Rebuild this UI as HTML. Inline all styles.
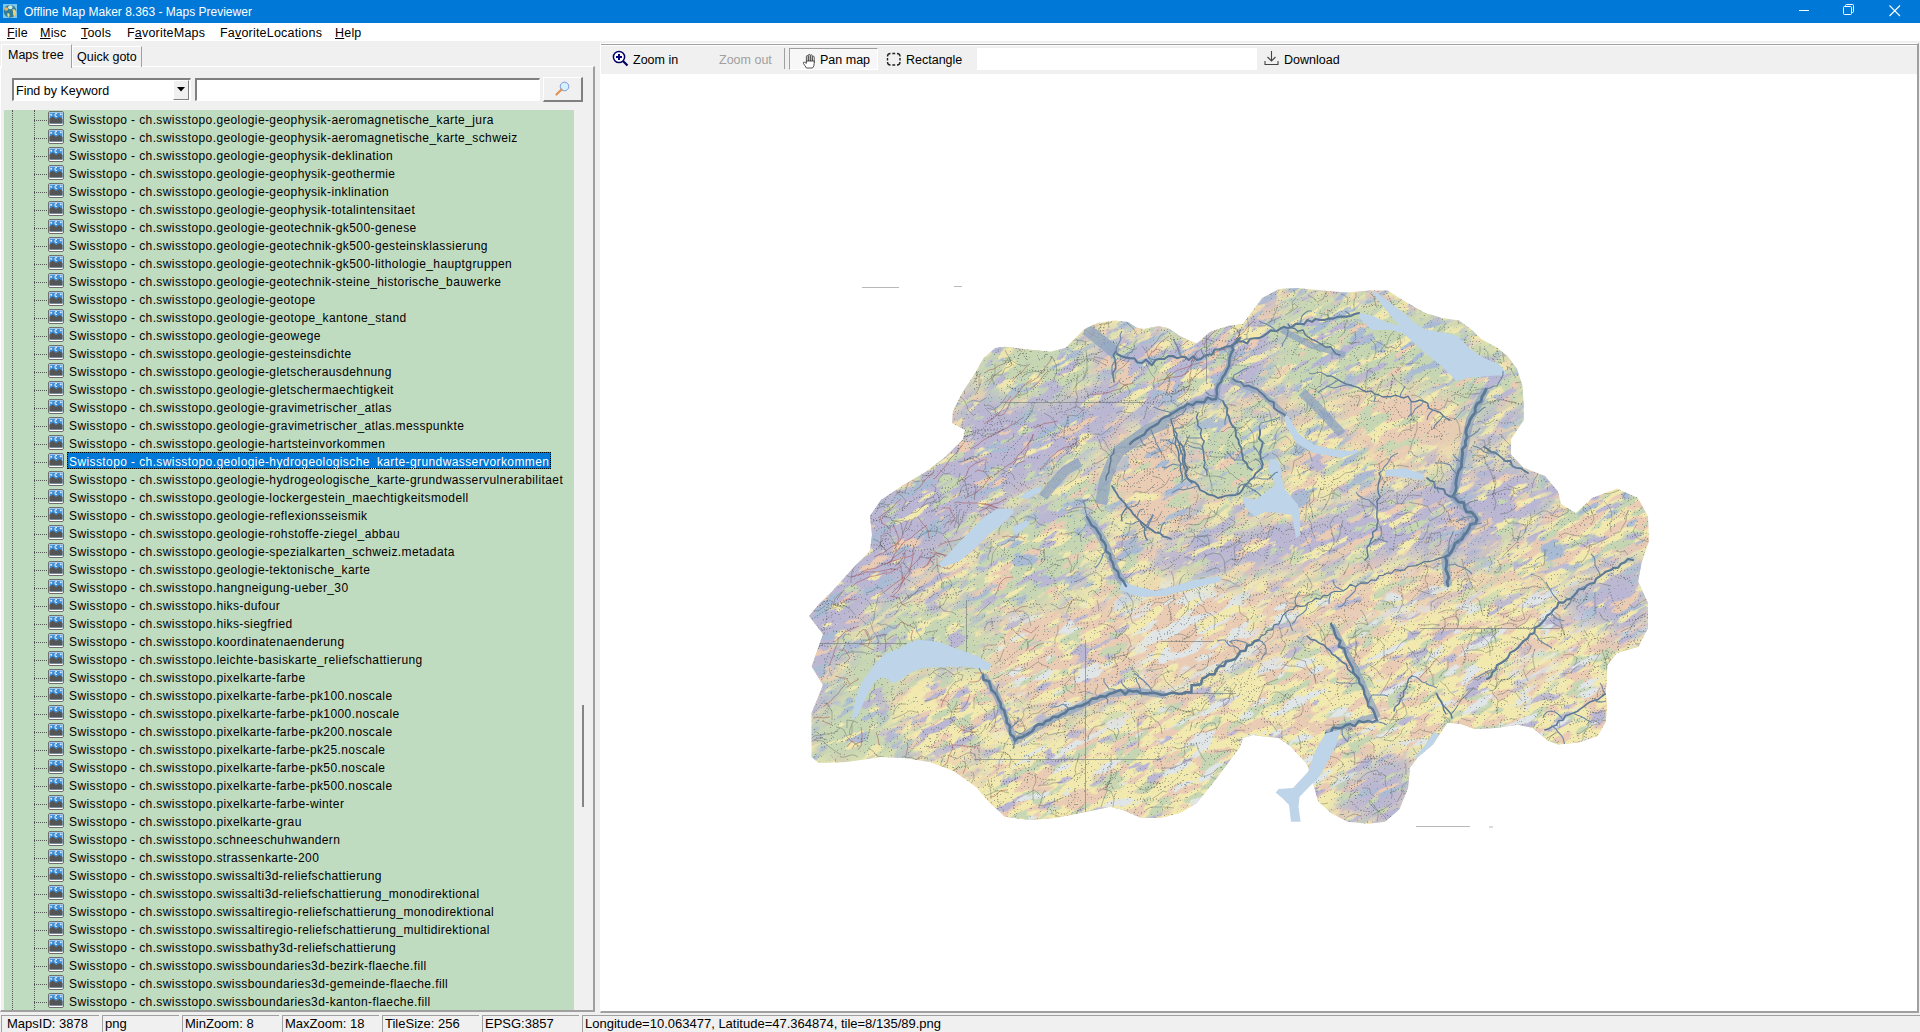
<!DOCTYPE html>
<html><head><meta charset="utf-8">
<style>
*{margin:0;padding:0;box-sizing:border-box}
html,body{width:1920px;height:1032px;overflow:hidden;background:#f0f0f0;font-family:"Liberation Sans",sans-serif;font-size:12px;color:#000}
.abs{position:absolute}
#title{position:absolute;left:0;top:0;width:1920px;height:23px;background:#0078d7;color:#fff}
#title .t{position:absolute;left:24px;top:5px;font-size:12px;line-height:14px;letter-spacing:0px}
#menu{position:absolute;left:0;top:23px;width:1920px;height:18px;background:#fff}
#menu span{position:absolute;top:3px;font-size:12.5px;line-height:15px;letter-spacing:0.2px}
#menu u{text-decoration:underline;text-underline-offset:1px}
.tab{position:absolute;font-size:12.5px;line-height:15px}
.row{position:absolute;left:4px;width:570px;height:18px}
.row .hd{position:absolute;left:30px;top:10px;width:13px;height:0;border-top:1px dotted #555}
.row .ic{position:absolute;left:44px;top:1px}
.row .tx{position:absolute;left:63px;top:0px;height:17px;padding:0 2px;font-size:12px;line-height:20px;letter-spacing:0.4px;white-space:nowrap}
.row .tx.sel{background:#0078d7;color:#fff;outline:1px dotted #000;outline-offset:-1px}
.vl{position:absolute;width:0;border-left:1px dotted #555}
.sb{position:absolute;top:1015px;height:17px;border-top:1px solid #a0a0a0;border-left:1px solid #a0a0a0;font-size:13px;line-height:14px;padding-left:2px;padding-top:1px;white-space:nowrap}
.tb{position:absolute;font-size:12.5px;line-height:15px;white-space:nowrap}
</style></head><body>
<div id="title">
 <svg class="abs" style="left:3px;top:4px" width="14" height="14" viewBox="0 0 14 14"><rect width="14" height="14" fill="#7ec8ee"/><circle cx="7" cy="7.2" r="6.3" fill="#2f7f9c"/><ellipse cx="7.3" cy="3.2" rx="2.2" ry="2" fill="#d8ecd8"/><ellipse cx="3.2" cy="5" rx="2" ry="1.8" fill="#f0b060"/><path d="M9.5 5 Q13 5 13 8 Q13 12 11 12.5 Q9.5 10 10 8 Z" fill="#f0d070"/><path d="M4.5 9 Q7 9 6.5 12 L5 13.5 Q4 11 4.5 9Z" fill="#e8e090"/></svg>
 <span class="t">Offline Map Maker 8.363 - Maps Previewer</span>
 <div class="abs" style="left:1799px;top:10px;width:10px;height:1px;background:#fff"></div>
 <svg class="abs" style="left:1843px;top:4px" width="12" height="12" viewBox="0 0 12 12"><rect x="0.5" y="2.5" width="8" height="8" rx="1" fill="none" stroke="#fff"/><path d="M2.5 2.5 V1.5 Q2.5 0.5 3.5 0.5 H9.5 Q10.5 0.5 10.5 1.5 V7.5 Q10.5 8.5 9.5 8.5 H8.5" fill="none" stroke="#fff"/></svg>
 <svg class="abs" style="left:1889px;top:5px" width="12" height="12" viewBox="0 0 12 12"><path d="M0.5 0.5 L11 11 M11 0.5 L0.5 11" stroke="#fff" stroke-width="1.1"/></svg>
</div>
<div id="menu">
 <span style="left:7px"><u>F</u>ile</span>
 <span style="left:40px"><u>M</u>isc</span>
 <span style="left:81px"><u>T</u>ools</span>
 <span style="left:127px">F<u>a</u>voriteMaps</span>
 <span style="left:220px">Fa<u>v</u>oriteLocations</span>
 <span style="left:335px"><u>H</u>elp</span>
</div>
<!-- left tab control -->
<div class="abs" style="left:0px;top:66px;width:595px;height:946px;border-top:1px solid #fff;border-left:1px solid #fff;border-right:2px solid #a0a0a0;border-bottom:2px solid #a0a0a0"></div>
<div class="abs" style="left:1px;top:44px;width:71px;height:24px;background:#f0f0f0;border-top:1px solid #fff;border-left:1px solid #fff;border-right:1px solid #a0a0a0"></div>
<div class="tab" style="left:8px;top:48px">Maps tree</div>
<div class="abs" style="left:72px;top:46px;width:70px;height:21px;border-top:1px solid #fff;border-right:1px solid #a0a0a0;border-left:1px solid #fff"></div>
<div class="tab" style="left:77px;top:50px">Quick goto</div>
<!-- combo -->
<div class="abs" style="left:12px;top:78px;width:179px;height:23px;background:#fff;border-top:2px solid #808080;border-left:2px solid #808080;border-bottom:1px solid #fff;border-right:1px solid #fff"></div>
<div class="abs" style="left:16px;top:84px;font-size:12.5px;line-height:15px">Find by Keyword</div>
<div class="abs" style="left:173px;top:80px;width:16px;height:20px;background:#f0f0f0;border-top:1px solid #fff;border-left:1px solid #fff;border-right:1px solid #808080;border-bottom:1px solid #808080"></div>
<svg class="abs" style="left:177px;top:87px" width="8" height="5"><path d="M0 0 H8 L4 4.5Z" fill="#000"/></svg>
<div class="abs" style="left:195px;top:78px;width:345px;height:23px;background:#fff;border-top:2px solid #808080;border-left:2px solid #808080;border-bottom:1px solid #fff;border-right:1px solid #fff"></div>
<div class="abs" style="left:543px;top:77px;width:40px;height:25px;background:#f0f0f0;border-top:1px solid #fff;border-left:1px solid #fff;border-right:2px solid #808080;border-bottom:2px solid #808080"></div>
<svg class="abs" style="left:554px;top:81px" width="18" height="16" viewBox="0 0 18 16"><circle cx="10.5" cy="5.5" r="4.3" fill="#d6f0ff" stroke="#7a9ad6" stroke-width="1"/><path d="M7.5 8.5 L2.5 13.5" stroke="#e09050" stroke-width="2.2" stroke-linecap="round"/></svg>
<!-- tree -->
<div class="abs" style="left:4px;top:110px;width:570px;height:900px;background:#c0dcc0;overflow:hidden">
</div>
<div class="abs" style="left:4px;top:110px;width:570px;height:900px;overflow:hidden">
<div class="vl" style="left:8px;top:0;height:900px"></div>
<div class="vl" style="left:30px;top:0;height:900px"></div>
</div>
<div class="abs" style="left:0;top:0;width:574px;height:1010px;overflow:hidden">
<div class="row" style="top:110px"><div class="hd"></div><svg class="ic" width="16" height="15" viewBox="0 0 16 15"><rect x="0.5" y="0.5" width="15" height="14" rx="1.5" fill="#fff" stroke="#6e6e6e"/><rect x="1.5" y="1.5" width="13" height="11" fill="#3f8fd8"/><path d="M1.5 12.5 V7.5 L5 5.5 L8 8 L11.5 6 L14.5 8 V12.5 Z" fill="#555"/><path d="M2.2 3.8 H4.2 M3.2 2.8 V4.8 M11.8 3.3 H13.8 M12.8 2.3 V4.3" stroke="#fff" stroke-width="0.8"/><path d="M9 2.6 A1.5 1.5 0 1 0 9 5.4" fill="none" stroke="#fff" stroke-width="0.9"/></svg><span class="tx">Swisstopo - ch.swisstopo.geologie-geophysik-aeromagnetische_karte_jura</span></div>
<div class="row" style="top:128px"><div class="hd"></div><svg class="ic" width="16" height="15" viewBox="0 0 16 15"><rect x="0.5" y="0.5" width="15" height="14" rx="1.5" fill="#fff" stroke="#6e6e6e"/><rect x="1.5" y="1.5" width="13" height="11" fill="#3f8fd8"/><path d="M1.5 12.5 V7.5 L5 5.5 L8 8 L11.5 6 L14.5 8 V12.5 Z" fill="#555"/><path d="M2.2 3.8 H4.2 M3.2 2.8 V4.8 M11.8 3.3 H13.8 M12.8 2.3 V4.3" stroke="#fff" stroke-width="0.8"/><path d="M9 2.6 A1.5 1.5 0 1 0 9 5.4" fill="none" stroke="#fff" stroke-width="0.9"/></svg><span class="tx">Swisstopo - ch.swisstopo.geologie-geophysik-aeromagnetische_karte_schweiz</span></div>
<div class="row" style="top:146px"><div class="hd"></div><svg class="ic" width="16" height="15" viewBox="0 0 16 15"><rect x="0.5" y="0.5" width="15" height="14" rx="1.5" fill="#fff" stroke="#6e6e6e"/><rect x="1.5" y="1.5" width="13" height="11" fill="#3f8fd8"/><path d="M1.5 12.5 V7.5 L5 5.5 L8 8 L11.5 6 L14.5 8 V12.5 Z" fill="#555"/><path d="M2.2 3.8 H4.2 M3.2 2.8 V4.8 M11.8 3.3 H13.8 M12.8 2.3 V4.3" stroke="#fff" stroke-width="0.8"/><path d="M9 2.6 A1.5 1.5 0 1 0 9 5.4" fill="none" stroke="#fff" stroke-width="0.9"/></svg><span class="tx">Swisstopo - ch.swisstopo.geologie-geophysik-deklination</span></div>
<div class="row" style="top:164px"><div class="hd"></div><svg class="ic" width="16" height="15" viewBox="0 0 16 15"><rect x="0.5" y="0.5" width="15" height="14" rx="1.5" fill="#fff" stroke="#6e6e6e"/><rect x="1.5" y="1.5" width="13" height="11" fill="#3f8fd8"/><path d="M1.5 12.5 V7.5 L5 5.5 L8 8 L11.5 6 L14.5 8 V12.5 Z" fill="#555"/><path d="M2.2 3.8 H4.2 M3.2 2.8 V4.8 M11.8 3.3 H13.8 M12.8 2.3 V4.3" stroke="#fff" stroke-width="0.8"/><path d="M9 2.6 A1.5 1.5 0 1 0 9 5.4" fill="none" stroke="#fff" stroke-width="0.9"/></svg><span class="tx">Swisstopo - ch.swisstopo.geologie-geophysik-geothermie</span></div>
<div class="row" style="top:182px"><div class="hd"></div><svg class="ic" width="16" height="15" viewBox="0 0 16 15"><rect x="0.5" y="0.5" width="15" height="14" rx="1.5" fill="#fff" stroke="#6e6e6e"/><rect x="1.5" y="1.5" width="13" height="11" fill="#3f8fd8"/><path d="M1.5 12.5 V7.5 L5 5.5 L8 8 L11.5 6 L14.5 8 V12.5 Z" fill="#555"/><path d="M2.2 3.8 H4.2 M3.2 2.8 V4.8 M11.8 3.3 H13.8 M12.8 2.3 V4.3" stroke="#fff" stroke-width="0.8"/><path d="M9 2.6 A1.5 1.5 0 1 0 9 5.4" fill="none" stroke="#fff" stroke-width="0.9"/></svg><span class="tx">Swisstopo - ch.swisstopo.geologie-geophysik-inklination</span></div>
<div class="row" style="top:200px"><div class="hd"></div><svg class="ic" width="16" height="15" viewBox="0 0 16 15"><rect x="0.5" y="0.5" width="15" height="14" rx="1.5" fill="#fff" stroke="#6e6e6e"/><rect x="1.5" y="1.5" width="13" height="11" fill="#3f8fd8"/><path d="M1.5 12.5 V7.5 L5 5.5 L8 8 L11.5 6 L14.5 8 V12.5 Z" fill="#555"/><path d="M2.2 3.8 H4.2 M3.2 2.8 V4.8 M11.8 3.3 H13.8 M12.8 2.3 V4.3" stroke="#fff" stroke-width="0.8"/><path d="M9 2.6 A1.5 1.5 0 1 0 9 5.4" fill="none" stroke="#fff" stroke-width="0.9"/></svg><span class="tx">Swisstopo - ch.swisstopo.geologie-geophysik-totalintensitaet</span></div>
<div class="row" style="top:218px"><div class="hd"></div><svg class="ic" width="16" height="15" viewBox="0 0 16 15"><rect x="0.5" y="0.5" width="15" height="14" rx="1.5" fill="#fff" stroke="#6e6e6e"/><rect x="1.5" y="1.5" width="13" height="11" fill="#3f8fd8"/><path d="M1.5 12.5 V7.5 L5 5.5 L8 8 L11.5 6 L14.5 8 V12.5 Z" fill="#555"/><path d="M2.2 3.8 H4.2 M3.2 2.8 V4.8 M11.8 3.3 H13.8 M12.8 2.3 V4.3" stroke="#fff" stroke-width="0.8"/><path d="M9 2.6 A1.5 1.5 0 1 0 9 5.4" fill="none" stroke="#fff" stroke-width="0.9"/></svg><span class="tx">Swisstopo - ch.swisstopo.geologie-geotechnik-gk500-genese</span></div>
<div class="row" style="top:236px"><div class="hd"></div><svg class="ic" width="16" height="15" viewBox="0 0 16 15"><rect x="0.5" y="0.5" width="15" height="14" rx="1.5" fill="#fff" stroke="#6e6e6e"/><rect x="1.5" y="1.5" width="13" height="11" fill="#3f8fd8"/><path d="M1.5 12.5 V7.5 L5 5.5 L8 8 L11.5 6 L14.5 8 V12.5 Z" fill="#555"/><path d="M2.2 3.8 H4.2 M3.2 2.8 V4.8 M11.8 3.3 H13.8 M12.8 2.3 V4.3" stroke="#fff" stroke-width="0.8"/><path d="M9 2.6 A1.5 1.5 0 1 0 9 5.4" fill="none" stroke="#fff" stroke-width="0.9"/></svg><span class="tx">Swisstopo - ch.swisstopo.geologie-geotechnik-gk500-gesteinsklassierung</span></div>
<div class="row" style="top:254px"><div class="hd"></div><svg class="ic" width="16" height="15" viewBox="0 0 16 15"><rect x="0.5" y="0.5" width="15" height="14" rx="1.5" fill="#fff" stroke="#6e6e6e"/><rect x="1.5" y="1.5" width="13" height="11" fill="#3f8fd8"/><path d="M1.5 12.5 V7.5 L5 5.5 L8 8 L11.5 6 L14.5 8 V12.5 Z" fill="#555"/><path d="M2.2 3.8 H4.2 M3.2 2.8 V4.8 M11.8 3.3 H13.8 M12.8 2.3 V4.3" stroke="#fff" stroke-width="0.8"/><path d="M9 2.6 A1.5 1.5 0 1 0 9 5.4" fill="none" stroke="#fff" stroke-width="0.9"/></svg><span class="tx">Swisstopo - ch.swisstopo.geologie-geotechnik-gk500-lithologie_hauptgruppen</span></div>
<div class="row" style="top:272px"><div class="hd"></div><svg class="ic" width="16" height="15" viewBox="0 0 16 15"><rect x="0.5" y="0.5" width="15" height="14" rx="1.5" fill="#fff" stroke="#6e6e6e"/><rect x="1.5" y="1.5" width="13" height="11" fill="#3f8fd8"/><path d="M1.5 12.5 V7.5 L5 5.5 L8 8 L11.5 6 L14.5 8 V12.5 Z" fill="#555"/><path d="M2.2 3.8 H4.2 M3.2 2.8 V4.8 M11.8 3.3 H13.8 M12.8 2.3 V4.3" stroke="#fff" stroke-width="0.8"/><path d="M9 2.6 A1.5 1.5 0 1 0 9 5.4" fill="none" stroke="#fff" stroke-width="0.9"/></svg><span class="tx">Swisstopo - ch.swisstopo.geologie-geotechnik-steine_historische_bauwerke</span></div>
<div class="row" style="top:290px"><div class="hd"></div><svg class="ic" width="16" height="15" viewBox="0 0 16 15"><rect x="0.5" y="0.5" width="15" height="14" rx="1.5" fill="#fff" stroke="#6e6e6e"/><rect x="1.5" y="1.5" width="13" height="11" fill="#3f8fd8"/><path d="M1.5 12.5 V7.5 L5 5.5 L8 8 L11.5 6 L14.5 8 V12.5 Z" fill="#555"/><path d="M2.2 3.8 H4.2 M3.2 2.8 V4.8 M11.8 3.3 H13.8 M12.8 2.3 V4.3" stroke="#fff" stroke-width="0.8"/><path d="M9 2.6 A1.5 1.5 0 1 0 9 5.4" fill="none" stroke="#fff" stroke-width="0.9"/></svg><span class="tx">Swisstopo - ch.swisstopo.geologie-geotope</span></div>
<div class="row" style="top:308px"><div class="hd"></div><svg class="ic" width="16" height="15" viewBox="0 0 16 15"><rect x="0.5" y="0.5" width="15" height="14" rx="1.5" fill="#fff" stroke="#6e6e6e"/><rect x="1.5" y="1.5" width="13" height="11" fill="#3f8fd8"/><path d="M1.5 12.5 V7.5 L5 5.5 L8 8 L11.5 6 L14.5 8 V12.5 Z" fill="#555"/><path d="M2.2 3.8 H4.2 M3.2 2.8 V4.8 M11.8 3.3 H13.8 M12.8 2.3 V4.3" stroke="#fff" stroke-width="0.8"/><path d="M9 2.6 A1.5 1.5 0 1 0 9 5.4" fill="none" stroke="#fff" stroke-width="0.9"/></svg><span class="tx">Swisstopo - ch.swisstopo.geologie-geotope_kantone_stand</span></div>
<div class="row" style="top:326px"><div class="hd"></div><svg class="ic" width="16" height="15" viewBox="0 0 16 15"><rect x="0.5" y="0.5" width="15" height="14" rx="1.5" fill="#fff" stroke="#6e6e6e"/><rect x="1.5" y="1.5" width="13" height="11" fill="#3f8fd8"/><path d="M1.5 12.5 V7.5 L5 5.5 L8 8 L11.5 6 L14.5 8 V12.5 Z" fill="#555"/><path d="M2.2 3.8 H4.2 M3.2 2.8 V4.8 M11.8 3.3 H13.8 M12.8 2.3 V4.3" stroke="#fff" stroke-width="0.8"/><path d="M9 2.6 A1.5 1.5 0 1 0 9 5.4" fill="none" stroke="#fff" stroke-width="0.9"/></svg><span class="tx">Swisstopo - ch.swisstopo.geologie-geowege</span></div>
<div class="row" style="top:344px"><div class="hd"></div><svg class="ic" width="16" height="15" viewBox="0 0 16 15"><rect x="0.5" y="0.5" width="15" height="14" rx="1.5" fill="#fff" stroke="#6e6e6e"/><rect x="1.5" y="1.5" width="13" height="11" fill="#3f8fd8"/><path d="M1.5 12.5 V7.5 L5 5.5 L8 8 L11.5 6 L14.5 8 V12.5 Z" fill="#555"/><path d="M2.2 3.8 H4.2 M3.2 2.8 V4.8 M11.8 3.3 H13.8 M12.8 2.3 V4.3" stroke="#fff" stroke-width="0.8"/><path d="M9 2.6 A1.5 1.5 0 1 0 9 5.4" fill="none" stroke="#fff" stroke-width="0.9"/></svg><span class="tx">Swisstopo - ch.swisstopo.geologie-gesteinsdichte</span></div>
<div class="row" style="top:362px"><div class="hd"></div><svg class="ic" width="16" height="15" viewBox="0 0 16 15"><rect x="0.5" y="0.5" width="15" height="14" rx="1.5" fill="#fff" stroke="#6e6e6e"/><rect x="1.5" y="1.5" width="13" height="11" fill="#3f8fd8"/><path d="M1.5 12.5 V7.5 L5 5.5 L8 8 L11.5 6 L14.5 8 V12.5 Z" fill="#555"/><path d="M2.2 3.8 H4.2 M3.2 2.8 V4.8 M11.8 3.3 H13.8 M12.8 2.3 V4.3" stroke="#fff" stroke-width="0.8"/><path d="M9 2.6 A1.5 1.5 0 1 0 9 5.4" fill="none" stroke="#fff" stroke-width="0.9"/></svg><span class="tx">Swisstopo - ch.swisstopo.geologie-gletscherausdehnung</span></div>
<div class="row" style="top:380px"><div class="hd"></div><svg class="ic" width="16" height="15" viewBox="0 0 16 15"><rect x="0.5" y="0.5" width="15" height="14" rx="1.5" fill="#fff" stroke="#6e6e6e"/><rect x="1.5" y="1.5" width="13" height="11" fill="#3f8fd8"/><path d="M1.5 12.5 V7.5 L5 5.5 L8 8 L11.5 6 L14.5 8 V12.5 Z" fill="#555"/><path d="M2.2 3.8 H4.2 M3.2 2.8 V4.8 M11.8 3.3 H13.8 M12.8 2.3 V4.3" stroke="#fff" stroke-width="0.8"/><path d="M9 2.6 A1.5 1.5 0 1 0 9 5.4" fill="none" stroke="#fff" stroke-width="0.9"/></svg><span class="tx">Swisstopo - ch.swisstopo.geologie-gletschermaechtigkeit</span></div>
<div class="row" style="top:398px"><div class="hd"></div><svg class="ic" width="16" height="15" viewBox="0 0 16 15"><rect x="0.5" y="0.5" width="15" height="14" rx="1.5" fill="#fff" stroke="#6e6e6e"/><rect x="1.5" y="1.5" width="13" height="11" fill="#3f8fd8"/><path d="M1.5 12.5 V7.5 L5 5.5 L8 8 L11.5 6 L14.5 8 V12.5 Z" fill="#555"/><path d="M2.2 3.8 H4.2 M3.2 2.8 V4.8 M11.8 3.3 H13.8 M12.8 2.3 V4.3" stroke="#fff" stroke-width="0.8"/><path d="M9 2.6 A1.5 1.5 0 1 0 9 5.4" fill="none" stroke="#fff" stroke-width="0.9"/></svg><span class="tx">Swisstopo - ch.swisstopo.geologie-gravimetrischer_atlas</span></div>
<div class="row" style="top:416px"><div class="hd"></div><svg class="ic" width="16" height="15" viewBox="0 0 16 15"><rect x="0.5" y="0.5" width="15" height="14" rx="1.5" fill="#fff" stroke="#6e6e6e"/><rect x="1.5" y="1.5" width="13" height="11" fill="#3f8fd8"/><path d="M1.5 12.5 V7.5 L5 5.5 L8 8 L11.5 6 L14.5 8 V12.5 Z" fill="#555"/><path d="M2.2 3.8 H4.2 M3.2 2.8 V4.8 M11.8 3.3 H13.8 M12.8 2.3 V4.3" stroke="#fff" stroke-width="0.8"/><path d="M9 2.6 A1.5 1.5 0 1 0 9 5.4" fill="none" stroke="#fff" stroke-width="0.9"/></svg><span class="tx">Swisstopo - ch.swisstopo.geologie-gravimetrischer_atlas.messpunkte</span></div>
<div class="row" style="top:434px"><div class="hd"></div><svg class="ic" width="16" height="15" viewBox="0 0 16 15"><rect x="0.5" y="0.5" width="15" height="14" rx="1.5" fill="#fff" stroke="#6e6e6e"/><rect x="1.5" y="1.5" width="13" height="11" fill="#3f8fd8"/><path d="M1.5 12.5 V7.5 L5 5.5 L8 8 L11.5 6 L14.5 8 V12.5 Z" fill="#555"/><path d="M2.2 3.8 H4.2 M3.2 2.8 V4.8 M11.8 3.3 H13.8 M12.8 2.3 V4.3" stroke="#fff" stroke-width="0.8"/><path d="M9 2.6 A1.5 1.5 0 1 0 9 5.4" fill="none" stroke="#fff" stroke-width="0.9"/></svg><span class="tx">Swisstopo - ch.swisstopo.geologie-hartsteinvorkommen</span></div>
<div class="row" style="top:452px"><div class="hd"></div><svg class="ic" width="16" height="15" viewBox="0 0 16 15"><rect x="0.5" y="0.5" width="15" height="14" rx="1.5" fill="#fff" stroke="#6e6e6e"/><rect x="1.5" y="1.5" width="13" height="11" fill="#3f8fd8"/><path d="M1.5 12.5 V7.5 L5 5.5 L8 8 L11.5 6 L14.5 8 V12.5 Z" fill="#555"/><path d="M2.2 3.8 H4.2 M3.2 2.8 V4.8 M11.8 3.3 H13.8 M12.8 2.3 V4.3" stroke="#fff" stroke-width="0.8"/><path d="M9 2.6 A1.5 1.5 0 1 0 9 5.4" fill="none" stroke="#fff" stroke-width="0.9"/></svg><span class="tx sel">Swisstopo - ch.swisstopo.geologie-hydrogeologische_karte-grundwasservorkommen</span></div>
<div class="row" style="top:470px"><div class="hd"></div><svg class="ic" width="16" height="15" viewBox="0 0 16 15"><rect x="0.5" y="0.5" width="15" height="14" rx="1.5" fill="#fff" stroke="#6e6e6e"/><rect x="1.5" y="1.5" width="13" height="11" fill="#3f8fd8"/><path d="M1.5 12.5 V7.5 L5 5.5 L8 8 L11.5 6 L14.5 8 V12.5 Z" fill="#555"/><path d="M2.2 3.8 H4.2 M3.2 2.8 V4.8 M11.8 3.3 H13.8 M12.8 2.3 V4.3" stroke="#fff" stroke-width="0.8"/><path d="M9 2.6 A1.5 1.5 0 1 0 9 5.4" fill="none" stroke="#fff" stroke-width="0.9"/></svg><span class="tx">Swisstopo - ch.swisstopo.geologie-hydrogeologische_karte-grundwasservulnerabilitaet</span></div>
<div class="row" style="top:488px"><div class="hd"></div><svg class="ic" width="16" height="15" viewBox="0 0 16 15"><rect x="0.5" y="0.5" width="15" height="14" rx="1.5" fill="#fff" stroke="#6e6e6e"/><rect x="1.5" y="1.5" width="13" height="11" fill="#3f8fd8"/><path d="M1.5 12.5 V7.5 L5 5.5 L8 8 L11.5 6 L14.5 8 V12.5 Z" fill="#555"/><path d="M2.2 3.8 H4.2 M3.2 2.8 V4.8 M11.8 3.3 H13.8 M12.8 2.3 V4.3" stroke="#fff" stroke-width="0.8"/><path d="M9 2.6 A1.5 1.5 0 1 0 9 5.4" fill="none" stroke="#fff" stroke-width="0.9"/></svg><span class="tx">Swisstopo - ch.swisstopo.geologie-lockergestein_maechtigkeitsmodell</span></div>
<div class="row" style="top:506px"><div class="hd"></div><svg class="ic" width="16" height="15" viewBox="0 0 16 15"><rect x="0.5" y="0.5" width="15" height="14" rx="1.5" fill="#fff" stroke="#6e6e6e"/><rect x="1.5" y="1.5" width="13" height="11" fill="#3f8fd8"/><path d="M1.5 12.5 V7.5 L5 5.5 L8 8 L11.5 6 L14.5 8 V12.5 Z" fill="#555"/><path d="M2.2 3.8 H4.2 M3.2 2.8 V4.8 M11.8 3.3 H13.8 M12.8 2.3 V4.3" stroke="#fff" stroke-width="0.8"/><path d="M9 2.6 A1.5 1.5 0 1 0 9 5.4" fill="none" stroke="#fff" stroke-width="0.9"/></svg><span class="tx">Swisstopo - ch.swisstopo.geologie-reflexionsseismik</span></div>
<div class="row" style="top:524px"><div class="hd"></div><svg class="ic" width="16" height="15" viewBox="0 0 16 15"><rect x="0.5" y="0.5" width="15" height="14" rx="1.5" fill="#fff" stroke="#6e6e6e"/><rect x="1.5" y="1.5" width="13" height="11" fill="#3f8fd8"/><path d="M1.5 12.5 V7.5 L5 5.5 L8 8 L11.5 6 L14.5 8 V12.5 Z" fill="#555"/><path d="M2.2 3.8 H4.2 M3.2 2.8 V4.8 M11.8 3.3 H13.8 M12.8 2.3 V4.3" stroke="#fff" stroke-width="0.8"/><path d="M9 2.6 A1.5 1.5 0 1 0 9 5.4" fill="none" stroke="#fff" stroke-width="0.9"/></svg><span class="tx">Swisstopo - ch.swisstopo.geologie-rohstoffe-ziegel_abbau</span></div>
<div class="row" style="top:542px"><div class="hd"></div><svg class="ic" width="16" height="15" viewBox="0 0 16 15"><rect x="0.5" y="0.5" width="15" height="14" rx="1.5" fill="#fff" stroke="#6e6e6e"/><rect x="1.5" y="1.5" width="13" height="11" fill="#3f8fd8"/><path d="M1.5 12.5 V7.5 L5 5.5 L8 8 L11.5 6 L14.5 8 V12.5 Z" fill="#555"/><path d="M2.2 3.8 H4.2 M3.2 2.8 V4.8 M11.8 3.3 H13.8 M12.8 2.3 V4.3" stroke="#fff" stroke-width="0.8"/><path d="M9 2.6 A1.5 1.5 0 1 0 9 5.4" fill="none" stroke="#fff" stroke-width="0.9"/></svg><span class="tx">Swisstopo - ch.swisstopo.geologie-spezialkarten_schweiz.metadata</span></div>
<div class="row" style="top:560px"><div class="hd"></div><svg class="ic" width="16" height="15" viewBox="0 0 16 15"><rect x="0.5" y="0.5" width="15" height="14" rx="1.5" fill="#fff" stroke="#6e6e6e"/><rect x="1.5" y="1.5" width="13" height="11" fill="#3f8fd8"/><path d="M1.5 12.5 V7.5 L5 5.5 L8 8 L11.5 6 L14.5 8 V12.5 Z" fill="#555"/><path d="M2.2 3.8 H4.2 M3.2 2.8 V4.8 M11.8 3.3 H13.8 M12.8 2.3 V4.3" stroke="#fff" stroke-width="0.8"/><path d="M9 2.6 A1.5 1.5 0 1 0 9 5.4" fill="none" stroke="#fff" stroke-width="0.9"/></svg><span class="tx">Swisstopo - ch.swisstopo.geologie-tektonische_karte</span></div>
<div class="row" style="top:578px"><div class="hd"></div><svg class="ic" width="16" height="15" viewBox="0 0 16 15"><rect x="0.5" y="0.5" width="15" height="14" rx="1.5" fill="#fff" stroke="#6e6e6e"/><rect x="1.5" y="1.5" width="13" height="11" fill="#3f8fd8"/><path d="M1.5 12.5 V7.5 L5 5.5 L8 8 L11.5 6 L14.5 8 V12.5 Z" fill="#555"/><path d="M2.2 3.8 H4.2 M3.2 2.8 V4.8 M11.8 3.3 H13.8 M12.8 2.3 V4.3" stroke="#fff" stroke-width="0.8"/><path d="M9 2.6 A1.5 1.5 0 1 0 9 5.4" fill="none" stroke="#fff" stroke-width="0.9"/></svg><span class="tx">Swisstopo - ch.swisstopo.hangneigung-ueber_30</span></div>
<div class="row" style="top:596px"><div class="hd"></div><svg class="ic" width="16" height="15" viewBox="0 0 16 15"><rect x="0.5" y="0.5" width="15" height="14" rx="1.5" fill="#fff" stroke="#6e6e6e"/><rect x="1.5" y="1.5" width="13" height="11" fill="#3f8fd8"/><path d="M1.5 12.5 V7.5 L5 5.5 L8 8 L11.5 6 L14.5 8 V12.5 Z" fill="#555"/><path d="M2.2 3.8 H4.2 M3.2 2.8 V4.8 M11.8 3.3 H13.8 M12.8 2.3 V4.3" stroke="#fff" stroke-width="0.8"/><path d="M9 2.6 A1.5 1.5 0 1 0 9 5.4" fill="none" stroke="#fff" stroke-width="0.9"/></svg><span class="tx">Swisstopo - ch.swisstopo.hiks-dufour</span></div>
<div class="row" style="top:614px"><div class="hd"></div><svg class="ic" width="16" height="15" viewBox="0 0 16 15"><rect x="0.5" y="0.5" width="15" height="14" rx="1.5" fill="#fff" stroke="#6e6e6e"/><rect x="1.5" y="1.5" width="13" height="11" fill="#3f8fd8"/><path d="M1.5 12.5 V7.5 L5 5.5 L8 8 L11.5 6 L14.5 8 V12.5 Z" fill="#555"/><path d="M2.2 3.8 H4.2 M3.2 2.8 V4.8 M11.8 3.3 H13.8 M12.8 2.3 V4.3" stroke="#fff" stroke-width="0.8"/><path d="M9 2.6 A1.5 1.5 0 1 0 9 5.4" fill="none" stroke="#fff" stroke-width="0.9"/></svg><span class="tx">Swisstopo - ch.swisstopo.hiks-siegfried</span></div>
<div class="row" style="top:632px"><div class="hd"></div><svg class="ic" width="16" height="15" viewBox="0 0 16 15"><rect x="0.5" y="0.5" width="15" height="14" rx="1.5" fill="#fff" stroke="#6e6e6e"/><rect x="1.5" y="1.5" width="13" height="11" fill="#3f8fd8"/><path d="M1.5 12.5 V7.5 L5 5.5 L8 8 L11.5 6 L14.5 8 V12.5 Z" fill="#555"/><path d="M2.2 3.8 H4.2 M3.2 2.8 V4.8 M11.8 3.3 H13.8 M12.8 2.3 V4.3" stroke="#fff" stroke-width="0.8"/><path d="M9 2.6 A1.5 1.5 0 1 0 9 5.4" fill="none" stroke="#fff" stroke-width="0.9"/></svg><span class="tx">Swisstopo - ch.swisstopo.koordinatenaenderung</span></div>
<div class="row" style="top:650px"><div class="hd"></div><svg class="ic" width="16" height="15" viewBox="0 0 16 15"><rect x="0.5" y="0.5" width="15" height="14" rx="1.5" fill="#fff" stroke="#6e6e6e"/><rect x="1.5" y="1.5" width="13" height="11" fill="#3f8fd8"/><path d="M1.5 12.5 V7.5 L5 5.5 L8 8 L11.5 6 L14.5 8 V12.5 Z" fill="#555"/><path d="M2.2 3.8 H4.2 M3.2 2.8 V4.8 M11.8 3.3 H13.8 M12.8 2.3 V4.3" stroke="#fff" stroke-width="0.8"/><path d="M9 2.6 A1.5 1.5 0 1 0 9 5.4" fill="none" stroke="#fff" stroke-width="0.9"/></svg><span class="tx">Swisstopo - ch.swisstopo.leichte-basiskarte_reliefschattierung</span></div>
<div class="row" style="top:668px"><div class="hd"></div><svg class="ic" width="16" height="15" viewBox="0 0 16 15"><rect x="0.5" y="0.5" width="15" height="14" rx="1.5" fill="#fff" stroke="#6e6e6e"/><rect x="1.5" y="1.5" width="13" height="11" fill="#3f8fd8"/><path d="M1.5 12.5 V7.5 L5 5.5 L8 8 L11.5 6 L14.5 8 V12.5 Z" fill="#555"/><path d="M2.2 3.8 H4.2 M3.2 2.8 V4.8 M11.8 3.3 H13.8 M12.8 2.3 V4.3" stroke="#fff" stroke-width="0.8"/><path d="M9 2.6 A1.5 1.5 0 1 0 9 5.4" fill="none" stroke="#fff" stroke-width="0.9"/></svg><span class="tx">Swisstopo - ch.swisstopo.pixelkarte-farbe</span></div>
<div class="row" style="top:686px"><div class="hd"></div><svg class="ic" width="16" height="15" viewBox="0 0 16 15"><rect x="0.5" y="0.5" width="15" height="14" rx="1.5" fill="#fff" stroke="#6e6e6e"/><rect x="1.5" y="1.5" width="13" height="11" fill="#3f8fd8"/><path d="M1.5 12.5 V7.5 L5 5.5 L8 8 L11.5 6 L14.5 8 V12.5 Z" fill="#555"/><path d="M2.2 3.8 H4.2 M3.2 2.8 V4.8 M11.8 3.3 H13.8 M12.8 2.3 V4.3" stroke="#fff" stroke-width="0.8"/><path d="M9 2.6 A1.5 1.5 0 1 0 9 5.4" fill="none" stroke="#fff" stroke-width="0.9"/></svg><span class="tx">Swisstopo - ch.swisstopo.pixelkarte-farbe-pk100.noscale</span></div>
<div class="row" style="top:704px"><div class="hd"></div><svg class="ic" width="16" height="15" viewBox="0 0 16 15"><rect x="0.5" y="0.5" width="15" height="14" rx="1.5" fill="#fff" stroke="#6e6e6e"/><rect x="1.5" y="1.5" width="13" height="11" fill="#3f8fd8"/><path d="M1.5 12.5 V7.5 L5 5.5 L8 8 L11.5 6 L14.5 8 V12.5 Z" fill="#555"/><path d="M2.2 3.8 H4.2 M3.2 2.8 V4.8 M11.8 3.3 H13.8 M12.8 2.3 V4.3" stroke="#fff" stroke-width="0.8"/><path d="M9 2.6 A1.5 1.5 0 1 0 9 5.4" fill="none" stroke="#fff" stroke-width="0.9"/></svg><span class="tx">Swisstopo - ch.swisstopo.pixelkarte-farbe-pk1000.noscale</span></div>
<div class="row" style="top:722px"><div class="hd"></div><svg class="ic" width="16" height="15" viewBox="0 0 16 15"><rect x="0.5" y="0.5" width="15" height="14" rx="1.5" fill="#fff" stroke="#6e6e6e"/><rect x="1.5" y="1.5" width="13" height="11" fill="#3f8fd8"/><path d="M1.5 12.5 V7.5 L5 5.5 L8 8 L11.5 6 L14.5 8 V12.5 Z" fill="#555"/><path d="M2.2 3.8 H4.2 M3.2 2.8 V4.8 M11.8 3.3 H13.8 M12.8 2.3 V4.3" stroke="#fff" stroke-width="0.8"/><path d="M9 2.6 A1.5 1.5 0 1 0 9 5.4" fill="none" stroke="#fff" stroke-width="0.9"/></svg><span class="tx">Swisstopo - ch.swisstopo.pixelkarte-farbe-pk200.noscale</span></div>
<div class="row" style="top:740px"><div class="hd"></div><svg class="ic" width="16" height="15" viewBox="0 0 16 15"><rect x="0.5" y="0.5" width="15" height="14" rx="1.5" fill="#fff" stroke="#6e6e6e"/><rect x="1.5" y="1.5" width="13" height="11" fill="#3f8fd8"/><path d="M1.5 12.5 V7.5 L5 5.5 L8 8 L11.5 6 L14.5 8 V12.5 Z" fill="#555"/><path d="M2.2 3.8 H4.2 M3.2 2.8 V4.8 M11.8 3.3 H13.8 M12.8 2.3 V4.3" stroke="#fff" stroke-width="0.8"/><path d="M9 2.6 A1.5 1.5 0 1 0 9 5.4" fill="none" stroke="#fff" stroke-width="0.9"/></svg><span class="tx">Swisstopo - ch.swisstopo.pixelkarte-farbe-pk25.noscale</span></div>
<div class="row" style="top:758px"><div class="hd"></div><svg class="ic" width="16" height="15" viewBox="0 0 16 15"><rect x="0.5" y="0.5" width="15" height="14" rx="1.5" fill="#fff" stroke="#6e6e6e"/><rect x="1.5" y="1.5" width="13" height="11" fill="#3f8fd8"/><path d="M1.5 12.5 V7.5 L5 5.5 L8 8 L11.5 6 L14.5 8 V12.5 Z" fill="#555"/><path d="M2.2 3.8 H4.2 M3.2 2.8 V4.8 M11.8 3.3 H13.8 M12.8 2.3 V4.3" stroke="#fff" stroke-width="0.8"/><path d="M9 2.6 A1.5 1.5 0 1 0 9 5.4" fill="none" stroke="#fff" stroke-width="0.9"/></svg><span class="tx">Swisstopo - ch.swisstopo.pixelkarte-farbe-pk50.noscale</span></div>
<div class="row" style="top:776px"><div class="hd"></div><svg class="ic" width="16" height="15" viewBox="0 0 16 15"><rect x="0.5" y="0.5" width="15" height="14" rx="1.5" fill="#fff" stroke="#6e6e6e"/><rect x="1.5" y="1.5" width="13" height="11" fill="#3f8fd8"/><path d="M1.5 12.5 V7.5 L5 5.5 L8 8 L11.5 6 L14.5 8 V12.5 Z" fill="#555"/><path d="M2.2 3.8 H4.2 M3.2 2.8 V4.8 M11.8 3.3 H13.8 M12.8 2.3 V4.3" stroke="#fff" stroke-width="0.8"/><path d="M9 2.6 A1.5 1.5 0 1 0 9 5.4" fill="none" stroke="#fff" stroke-width="0.9"/></svg><span class="tx">Swisstopo - ch.swisstopo.pixelkarte-farbe-pk500.noscale</span></div>
<div class="row" style="top:794px"><div class="hd"></div><svg class="ic" width="16" height="15" viewBox="0 0 16 15"><rect x="0.5" y="0.5" width="15" height="14" rx="1.5" fill="#fff" stroke="#6e6e6e"/><rect x="1.5" y="1.5" width="13" height="11" fill="#3f8fd8"/><path d="M1.5 12.5 V7.5 L5 5.5 L8 8 L11.5 6 L14.5 8 V12.5 Z" fill="#555"/><path d="M2.2 3.8 H4.2 M3.2 2.8 V4.8 M11.8 3.3 H13.8 M12.8 2.3 V4.3" stroke="#fff" stroke-width="0.8"/><path d="M9 2.6 A1.5 1.5 0 1 0 9 5.4" fill="none" stroke="#fff" stroke-width="0.9"/></svg><span class="tx">Swisstopo - ch.swisstopo.pixelkarte-farbe-winter</span></div>
<div class="row" style="top:812px"><div class="hd"></div><svg class="ic" width="16" height="15" viewBox="0 0 16 15"><rect x="0.5" y="0.5" width="15" height="14" rx="1.5" fill="#fff" stroke="#6e6e6e"/><rect x="1.5" y="1.5" width="13" height="11" fill="#3f8fd8"/><path d="M1.5 12.5 V7.5 L5 5.5 L8 8 L11.5 6 L14.5 8 V12.5 Z" fill="#555"/><path d="M2.2 3.8 H4.2 M3.2 2.8 V4.8 M11.8 3.3 H13.8 M12.8 2.3 V4.3" stroke="#fff" stroke-width="0.8"/><path d="M9 2.6 A1.5 1.5 0 1 0 9 5.4" fill="none" stroke="#fff" stroke-width="0.9"/></svg><span class="tx">Swisstopo - ch.swisstopo.pixelkarte-grau</span></div>
<div class="row" style="top:830px"><div class="hd"></div><svg class="ic" width="16" height="15" viewBox="0 0 16 15"><rect x="0.5" y="0.5" width="15" height="14" rx="1.5" fill="#fff" stroke="#6e6e6e"/><rect x="1.5" y="1.5" width="13" height="11" fill="#3f8fd8"/><path d="M1.5 12.5 V7.5 L5 5.5 L8 8 L11.5 6 L14.5 8 V12.5 Z" fill="#555"/><path d="M2.2 3.8 H4.2 M3.2 2.8 V4.8 M11.8 3.3 H13.8 M12.8 2.3 V4.3" stroke="#fff" stroke-width="0.8"/><path d="M9 2.6 A1.5 1.5 0 1 0 9 5.4" fill="none" stroke="#fff" stroke-width="0.9"/></svg><span class="tx">Swisstopo - ch.swisstopo.schneeschuhwandern</span></div>
<div class="row" style="top:848px"><div class="hd"></div><svg class="ic" width="16" height="15" viewBox="0 0 16 15"><rect x="0.5" y="0.5" width="15" height="14" rx="1.5" fill="#fff" stroke="#6e6e6e"/><rect x="1.5" y="1.5" width="13" height="11" fill="#3f8fd8"/><path d="M1.5 12.5 V7.5 L5 5.5 L8 8 L11.5 6 L14.5 8 V12.5 Z" fill="#555"/><path d="M2.2 3.8 H4.2 M3.2 2.8 V4.8 M11.8 3.3 H13.8 M12.8 2.3 V4.3" stroke="#fff" stroke-width="0.8"/><path d="M9 2.6 A1.5 1.5 0 1 0 9 5.4" fill="none" stroke="#fff" stroke-width="0.9"/></svg><span class="tx">Swisstopo - ch.swisstopo.strassenkarte-200</span></div>
<div class="row" style="top:866px"><div class="hd"></div><svg class="ic" width="16" height="15" viewBox="0 0 16 15"><rect x="0.5" y="0.5" width="15" height="14" rx="1.5" fill="#fff" stroke="#6e6e6e"/><rect x="1.5" y="1.5" width="13" height="11" fill="#3f8fd8"/><path d="M1.5 12.5 V7.5 L5 5.5 L8 8 L11.5 6 L14.5 8 V12.5 Z" fill="#555"/><path d="M2.2 3.8 H4.2 M3.2 2.8 V4.8 M11.8 3.3 H13.8 M12.8 2.3 V4.3" stroke="#fff" stroke-width="0.8"/><path d="M9 2.6 A1.5 1.5 0 1 0 9 5.4" fill="none" stroke="#fff" stroke-width="0.9"/></svg><span class="tx">Swisstopo - ch.swisstopo.swissalti3d-reliefschattierung</span></div>
<div class="row" style="top:884px"><div class="hd"></div><svg class="ic" width="16" height="15" viewBox="0 0 16 15"><rect x="0.5" y="0.5" width="15" height="14" rx="1.5" fill="#fff" stroke="#6e6e6e"/><rect x="1.5" y="1.5" width="13" height="11" fill="#3f8fd8"/><path d="M1.5 12.5 V7.5 L5 5.5 L8 8 L11.5 6 L14.5 8 V12.5 Z" fill="#555"/><path d="M2.2 3.8 H4.2 M3.2 2.8 V4.8 M11.8 3.3 H13.8 M12.8 2.3 V4.3" stroke="#fff" stroke-width="0.8"/><path d="M9 2.6 A1.5 1.5 0 1 0 9 5.4" fill="none" stroke="#fff" stroke-width="0.9"/></svg><span class="tx">Swisstopo - ch.swisstopo.swissalti3d-reliefschattierung_monodirektional</span></div>
<div class="row" style="top:902px"><div class="hd"></div><svg class="ic" width="16" height="15" viewBox="0 0 16 15"><rect x="0.5" y="0.5" width="15" height="14" rx="1.5" fill="#fff" stroke="#6e6e6e"/><rect x="1.5" y="1.5" width="13" height="11" fill="#3f8fd8"/><path d="M1.5 12.5 V7.5 L5 5.5 L8 8 L11.5 6 L14.5 8 V12.5 Z" fill="#555"/><path d="M2.2 3.8 H4.2 M3.2 2.8 V4.8 M11.8 3.3 H13.8 M12.8 2.3 V4.3" stroke="#fff" stroke-width="0.8"/><path d="M9 2.6 A1.5 1.5 0 1 0 9 5.4" fill="none" stroke="#fff" stroke-width="0.9"/></svg><span class="tx">Swisstopo - ch.swisstopo.swissaltiregio-reliefschattierung_monodirektional</span></div>
<div class="row" style="top:920px"><div class="hd"></div><svg class="ic" width="16" height="15" viewBox="0 0 16 15"><rect x="0.5" y="0.5" width="15" height="14" rx="1.5" fill="#fff" stroke="#6e6e6e"/><rect x="1.5" y="1.5" width="13" height="11" fill="#3f8fd8"/><path d="M1.5 12.5 V7.5 L5 5.5 L8 8 L11.5 6 L14.5 8 V12.5 Z" fill="#555"/><path d="M2.2 3.8 H4.2 M3.2 2.8 V4.8 M11.8 3.3 H13.8 M12.8 2.3 V4.3" stroke="#fff" stroke-width="0.8"/><path d="M9 2.6 A1.5 1.5 0 1 0 9 5.4" fill="none" stroke="#fff" stroke-width="0.9"/></svg><span class="tx">Swisstopo - ch.swisstopo.swissaltiregio-reliefschattierung_multidirektional</span></div>
<div class="row" style="top:938px"><div class="hd"></div><svg class="ic" width="16" height="15" viewBox="0 0 16 15"><rect x="0.5" y="0.5" width="15" height="14" rx="1.5" fill="#fff" stroke="#6e6e6e"/><rect x="1.5" y="1.5" width="13" height="11" fill="#3f8fd8"/><path d="M1.5 12.5 V7.5 L5 5.5 L8 8 L11.5 6 L14.5 8 V12.5 Z" fill="#555"/><path d="M2.2 3.8 H4.2 M3.2 2.8 V4.8 M11.8 3.3 H13.8 M12.8 2.3 V4.3" stroke="#fff" stroke-width="0.8"/><path d="M9 2.6 A1.5 1.5 0 1 0 9 5.4" fill="none" stroke="#fff" stroke-width="0.9"/></svg><span class="tx">Swisstopo - ch.swisstopo.swissbathy3d-reliefschattierung</span></div>
<div class="row" style="top:956px"><div class="hd"></div><svg class="ic" width="16" height="15" viewBox="0 0 16 15"><rect x="0.5" y="0.5" width="15" height="14" rx="1.5" fill="#fff" stroke="#6e6e6e"/><rect x="1.5" y="1.5" width="13" height="11" fill="#3f8fd8"/><path d="M1.5 12.5 V7.5 L5 5.5 L8 8 L11.5 6 L14.5 8 V12.5 Z" fill="#555"/><path d="M2.2 3.8 H4.2 M3.2 2.8 V4.8 M11.8 3.3 H13.8 M12.8 2.3 V4.3" stroke="#fff" stroke-width="0.8"/><path d="M9 2.6 A1.5 1.5 0 1 0 9 5.4" fill="none" stroke="#fff" stroke-width="0.9"/></svg><span class="tx">Swisstopo - ch.swisstopo.swissboundaries3d-bezirk-flaeche.fill</span></div>
<div class="row" style="top:974px"><div class="hd"></div><svg class="ic" width="16" height="15" viewBox="0 0 16 15"><rect x="0.5" y="0.5" width="15" height="14" rx="1.5" fill="#fff" stroke="#6e6e6e"/><rect x="1.5" y="1.5" width="13" height="11" fill="#3f8fd8"/><path d="M1.5 12.5 V7.5 L5 5.5 L8 8 L11.5 6 L14.5 8 V12.5 Z" fill="#555"/><path d="M2.2 3.8 H4.2 M3.2 2.8 V4.8 M11.8 3.3 H13.8 M12.8 2.3 V4.3" stroke="#fff" stroke-width="0.8"/><path d="M9 2.6 A1.5 1.5 0 1 0 9 5.4" fill="none" stroke="#fff" stroke-width="0.9"/></svg><span class="tx">Swisstopo - ch.swisstopo.swissboundaries3d-gemeinde-flaeche.fill</span></div>
<div class="row" style="top:992px"><div class="hd"></div><svg class="ic" width="16" height="15" viewBox="0 0 16 15"><rect x="0.5" y="0.5" width="15" height="14" rx="1.5" fill="#fff" stroke="#6e6e6e"/><rect x="1.5" y="1.5" width="13" height="11" fill="#3f8fd8"/><path d="M1.5 12.5 V7.5 L5 5.5 L8 8 L11.5 6 L14.5 8 V12.5 Z" fill="#555"/><path d="M2.2 3.8 H4.2 M3.2 2.8 V4.8 M11.8 3.3 H13.8 M12.8 2.3 V4.3" stroke="#fff" stroke-width="0.8"/><path d="M9 2.6 A1.5 1.5 0 1 0 9 5.4" fill="none" stroke="#fff" stroke-width="0.9"/></svg><span class="tx">Swisstopo - ch.swisstopo.swissboundaries3d-kanton-flaeche.fill</span></div>
</div>
<!-- scrollbar -->
<div class="abs" style="left:582px;top:705px;width:2px;height:102px;background:#858585"></div>
<!-- map panel -->
<div class="abs" style="left:600px;top:43px;width:1319px;height:970px;border-top:1px solid #fff;border-left:1px solid #fff;border-right:2px solid #a0a0a0;border-bottom:2px solid #a0a0a0;background:#fff"></div>
<div class="abs" style="left:601px;top:44px;width:1316px;height:1px;background:#a0a0a0"></div>
<div class="abs" style="left:601px;top:46px;width:1316px;height:28px;background:#f0f0f0"></div>
<svg class="abs" style="left:612px;top:50px" width="18" height="17" viewBox="0 0 18 17"><circle cx="7" cy="7" r="5.6" fill="#fff" stroke="#000060" stroke-width="1.5"/><path d="M7 4 V10 M4 7 H10" stroke="#000080" stroke-width="2"/><path d="M11 11 L15.5 15.5" stroke="#000060" stroke-width="2.2"/></svg>
<div class="tb" style="left:633px;top:53px">Zoom in</div>
<div class="tb" style="left:719px;top:53px;color:#a0a0a0">Zoom out</div>
<div class="abs" style="left:784px;top:48px;width:1px;height:21px;background:#a0a0a0"></div>
<div class="abs" style="left:789px;top:48px;width:89px;height:22px;background:#f7f7f7;border-top:1px solid #a0a0a0;border-left:1px solid #a0a0a0;border-right:1px solid #fff;border-bottom:1px solid #fff"></div>
<svg class="abs" style="left:802px;top:53px" width="14" height="16" viewBox="0 0 14 16"><g fill="#fff" stroke="#2a2a2a" stroke-width="0.8"><rect x="4.4" y="2.6" width="1.8" height="7" rx="0.9"/><rect x="6.4" y="1.4" width="1.8" height="7.5" rx="0.9"/><rect x="8.4" y="1.8" width="1.8" height="7.5" rx="0.9"/><rect x="10.4" y="3.2" width="1.8" height="7" rx="0.9"/><path d="M4.4 8 V10.3 L2.3 9.2 Q0.8 9 1.5 10.5 Q2.5 12 4.5 15 H10.5 Q12.2 13.5 12.2 10.5 V8 Z"/></g></svg>
<div class="tb" style="left:820px;top:53px">Pan map</div>
<svg class="abs" style="left:886px;top:52px" width="16" height="15" viewBox="0 0 16 15"><path d="M1.5 4.5 Q1.5 1.5 4.5 1.5 M11 1.5 Q14 1.5 14 4.5 M14 10 Q14 13 11 13 M4.5 13 Q1.5 13 1.5 10 M6.3 1.5 H9.2 M6.3 13 H9.2 M1.5 6 V8.5 M14 6 V8.5" fill="none" stroke="#222" stroke-width="1.4"/></svg>
<div class="tb" style="left:906px;top:53px">Rectangle</div>
<div class="abs" style="left:977px;top:48px;width:280px;height:22px;background:#fff"></div>
<svg class="abs" style="left:1264px;top:50px" width="15" height="17" viewBox="0 0 15 17"><path d="M7.5 1 V11 M3.5 7 L7.5 11 L11.5 7 M1 11 V14.5 H14 V11" fill="none" stroke="#444" stroke-width="1.1"/></svg>
<div class="tb" style="left:1284px;top:53px">Download</div>
<!-- map -->
<svg class="abs" style="left:0;top:0" width="1920" height="1032" viewBox="0 0 1920 1032">
<defs>
<clipPath id="cp"><polygon points="952.0,423.0 953.0,411.0 962.0,393.0 973.5,376.0 983.8,358.0 995.4,348.0 1005.6,346.7 1027.5,349.6 1050.8,351.8 1065.4,348.0 1075.6,338.0 1084.4,329.0 1097.5,323.0 1115.0,320.4 1128.0,322.0 1137.0,327.7 1144.0,329.0 1158.8,326.0 1169.0,328.4 1180.6,336.5 1196.7,343.8 1209.8,332.0 1228.0,326.0 1243.0,324.0 1252.5,311.0 1262.0,298.0 1279.0,289.0 1297.5,288.0 1322.0,290.6 1346.0,292.5 1369.0,290.6 1387.5,290.6 1406.0,302.0 1425.0,313.0 1442.0,318.0 1459.0,320.6 1472.0,330.0 1481.0,339.0 1496.0,347.0 1507.5,356.0 1517.0,369.0 1522.5,386.0 1523.7,405.0 1523.7,420.0 1511.0,439.0 1511.0,454.4 1523.7,468.0 1545.0,476.0 1558.0,491.6 1561.0,504.0 1576.0,513.0 1592.0,498.0 1617.0,488.5 1638.0,498.0 1648.0,516.4 1649.0,541.0 1641.5,563.0 1638.0,581.5 1648.0,603.0 1648.0,628.0 1638.4,646.7 1616.7,653.0 1607.4,665.0 1605.8,692.5 1607.0,705.0 1605.8,721.7 1597.5,736.0 1578.8,742.5 1558.0,744.6 1547.5,740.4 1533.0,728.0 1518.0,724.8 1495.4,728.0 1474.6,729.0 1460.0,723.8 1447.5,722.7 1441.0,732.0 1433.0,744.6 1418.0,757.0 1410.0,767.5 1408.0,788.0 1399.6,809.0 1385.0,821.7 1368.0,823.8 1347.5,821.7 1331.0,813.0 1318.0,801.0 1310.0,771.7 1306.0,763.0 1291.0,746.7 1278.8,738.0 1260.0,736.0 1253.0,735.0 1243.0,738.0 1240.0,746.7 1228.0,763.0 1213.0,783.0 1196.7,803.0 1180.0,813.0 1160.0,818.0 1140.0,817.5 1123.0,810.0 1110.0,806.7 1086.7,811.7 1055.0,818.0 1030.0,820.0 1005.0,816.7 990.0,803.0 980.0,791.7 976.7,787.4 953.5,771.0 930.0,762.0 904.7,758.0 881.0,757.0 846.5,762.0 818.6,763.0 811.6,757.0 811.6,713.0 823.0,685.0 811.6,666.5 823.0,634.0 809.0,616.0 818.5,604.7 832.5,591.0 853.5,567.5 870.0,551.0 872.0,535.0 870.0,516.0 881.0,500.0 902.0,486.0 925.5,472.0 944.0,458.0 963.0,439.5 965.0,430.0"/></clipPath>
<filter id="bl" x="760" y="240" width="940" height="640" filterUnits="userSpaceOnUse"><feGaussianBlur stdDeviation="10"/></filter>
<filter id="t_general" x="600" y="80" width="1260" height="960" filterUnits="userSpaceOnUse" color-interpolation-filters="sRGB">
<feFlood flood-color="#f2e9ae" result="base"/>
<feTurbulence type="fractalNoise" baseFrequency="0.03 0.09" numOctaves="4" seed="1" result="n0"/>
<feColorMatrix in="n0" type="matrix" values="0 0 0 0 0  0 0 0 0 0  0 0 0 0 0  22 0 0 0 -11.387" result="a0"/>
<feFlood flood-color="#eacbb4" result="f0"/>
<feComposite in="f0" in2="a0" operator="in" result="l0"/>
<feTurbulence type="fractalNoise" baseFrequency="0.03 0.09" numOctaves="4" seed="2" result="n1"/>
<feColorMatrix in="n1" type="matrix" values="0 0 0 0 0  0 0 0 0 0  0 0 0 0 0  22 0 0 0 -12.549" result="a1"/>
<feFlood flood-color="#c6d6b3" result="f1"/>
<feComposite in="f1" in2="a1" operator="in" result="l1"/>
<feTurbulence type="fractalNoise" baseFrequency="0.03 0.09" numOctaves="4" seed="3" result="n2"/>
<feColorMatrix in="n2" type="matrix" values="0 0 0 0 0  0 0 0 0 0  0 0 0 0 0  22 0 0 0 -13.710" result="a2"/>
<feFlood flood-color="#bab6d3" result="f2"/>
<feComposite in="f2" in2="a2" operator="in" result="l2"/>
<feTurbulence type="fractalNoise" baseFrequency="0.03 0.09" numOctaves="4" seed="4" result="n3"/>
<feColorMatrix in="n3" type="matrix" values="0 0 0 0 0  0 0 0 0 0  0 0 0 0 0  22 0 0 0 -13.943" result="a3"/>
<feFlood flood-color="#a9bbd4" result="f3"/>
<feComposite in="f3" in2="a3" operator="in" result="l3"/>
<feMerge><feMergeNode in="base"/><feMergeNode in="l0"/><feMergeNode in="l1"/><feMergeNode in="l2"/><feMergeNode in="l3"/></feMerge></filter>
<filter id="t_jura" x="600" y="80" width="1260" height="960" filterUnits="userSpaceOnUse" color-interpolation-filters="sRGB">
<feFlood flood-color="#bab6d3" result="base"/>
<feTurbulence type="fractalNoise" baseFrequency="0.03 0.09" numOctaves="4" seed="5" result="n0"/>
<feColorMatrix in="n0" type="matrix" values="0 0 0 0 0  0 0 0 0 0  0 0 0 0 0  22 0 0 0 -13.943" result="a0"/>
<feFlood flood-color="#f2e9ae" result="f0"/>
<feComposite in="f0" in2="a0" operator="in" result="l0"/>
<feTurbulence type="fractalNoise" baseFrequency="0.03 0.09" numOctaves="4" seed="6" result="n1"/>
<feColorMatrix in="n1" type="matrix" values="0 0 0 0 0  0 0 0 0 0  0 0 0 0 0  22 0 0 0 -13.710" result="a1"/>
<feFlood flood-color="#c6d6b3" result="f1"/>
<feComposite in="f1" in2="a1" operator="in" result="l1"/>
<feTurbulence type="fractalNoise" baseFrequency="0.03 0.09" numOctaves="4" seed="7" result="n2"/>
<feColorMatrix in="n2" type="matrix" values="0 0 0 0 0  0 0 0 0 0  0 0 0 0 0  22 0 0 0 -14.098" result="a2"/>
<feFlood flood-color="#eacbb4" result="f2"/>
<feComposite in="f2" in2="a2" operator="in" result="l2"/>
<feTurbulence type="fractalNoise" baseFrequency="0.03 0.09" numOctaves="4" seed="8" result="n3"/>
<feColorMatrix in="n3" type="matrix" values="0 0 0 0 0  0 0 0 0 0  0 0 0 0 0  22 0 0 0 -14.098" result="a3"/>
<feFlood flood-color="#a9bbd4" result="f3"/>
<feComposite in="f3" in2="a3" operator="in" result="l3"/>
<feMerge><feMergeNode in="base"/><feMergeNode in="l0"/><feMergeNode in="l1"/><feMergeNode in="l2"/><feMergeNode in="l3"/></feMerge></filter>
<mask id="m_jura" maskUnits="userSpaceOnUse" x="760" y="240" width="940" height="640"><polygon points="790.0,600.0 860.0,500.0 950.0,440.0 960.0,400.0 990.0,345.0 1010.0,380.0 1060.0,395.0 1100.0,375.0 1180.0,345.0 1250.0,330.0 1270.0,350.0 1240.0,388.0 1180.0,402.0 1130.0,422.0 1090.0,455.0 1040.0,485.0 1000.0,510.0 960.0,540.0 920.0,580.0 870.0,615.0 851.0,640.0 830.0,700.0 812.0,740.0" fill="#fff" filter="url(#bl)"/></mask>
<filter id="t_ajoie" x="600" y="80" width="1260" height="960" filterUnits="userSpaceOnUse" color-interpolation-filters="sRGB">
<feFlood flood-color="#c6d6b3" result="base"/>
<feTurbulence type="fractalNoise" baseFrequency="0.03 0.09" numOctaves="4" seed="9" result="n0"/>
<feColorMatrix in="n0" type="matrix" values="0 0 0 0 0  0 0 0 0 0  0 0 0 0 0  22 0 0 0 -12.549" result="a0"/>
<feFlood flood-color="#f2e9ae" result="f0"/>
<feComposite in="f0" in2="a0" operator="in" result="l0"/>
<feTurbulence type="fractalNoise" baseFrequency="0.03 0.09" numOctaves="4" seed="10" result="n1"/>
<feColorMatrix in="n1" type="matrix" values="0 0 0 0 0  0 0 0 0 0  0 0 0 0 0  22 0 0 0 -13.323" result="a1"/>
<feFlood flood-color="#bab6d3" result="f1"/>
<feComposite in="f1" in2="a1" operator="in" result="l1"/>
<feTurbulence type="fractalNoise" baseFrequency="0.03 0.09" numOctaves="4" seed="11" result="n2"/>
<feColorMatrix in="n2" type="matrix" values="0 0 0 0 0  0 0 0 0 0  0 0 0 0 0  22 0 0 0 -14.098" result="a2"/>
<feFlood flood-color="#a9bbd4" result="f2"/>
<feComposite in="f2" in2="a2" operator="in" result="l2"/>
<feMerge><feMergeNode in="base"/><feMergeNode in="l0"/><feMergeNode in="l1"/><feMergeNode in="l2"/></feMerge></filter>
<mask id="m_ajoie" maskUnits="userSpaceOnUse" x="760" y="240" width="940" height="640"><polygon points="975.0,348.0 1085.0,330.0 1095.0,372.0 1060.0,398.0 1010.0,402.0 970.0,385.0" fill="#fff" filter="url(#bl)"/></mask>
<filter id="t_geneva" x="600" y="80" width="1260" height="960" filterUnits="userSpaceOnUse" color-interpolation-filters="sRGB">
<feFlood flood-color="#c6d6b3" result="base"/>
<feTurbulence type="fractalNoise" baseFrequency="0.03 0.09" numOctaves="4" seed="44" result="n0"/>
<feColorMatrix in="n0" type="matrix" values="0 0 0 0 0  0 0 0 0 0  0 0 0 0 0  22 0 0 0 -13.943" result="a0"/>
<feFlood flood-color="#f2e9ae" result="f0"/>
<feComposite in="f0" in2="a0" operator="in" result="l0"/>
<feTurbulence type="fractalNoise" baseFrequency="0.03 0.09" numOctaves="4" seed="45" result="n1"/>
<feColorMatrix in="n1" type="matrix" values="0 0 0 0 0  0 0 0 0 0  0 0 0 0 0  22 0 0 0 -13.943" result="a1"/>
<feFlood flood-color="#a9bbd4" result="f1"/>
<feComposite in="f1" in2="a1" operator="in" result="l1"/>
<feTurbulence type="fractalNoise" baseFrequency="0.03 0.09" numOctaves="4" seed="46" result="n2"/>
<feColorMatrix in="n2" type="matrix" values="0 0 0 0 0  0 0 0 0 0  0 0 0 0 0  22 0 0 0 -14.407" result="a2"/>
<feFlood flood-color="#bab6d3" result="f2"/>
<feComposite in="f2" in2="a2" operator="in" result="l2"/>
<feMerge><feMergeNode in="base"/><feMergeNode in="l0"/><feMergeNode in="l1"/><feMergeNode in="l2"/></feMerge></filter>
<mask id="m_geneva" maskUnits="userSpaceOnUse" x="760" y="240" width="940" height="640"><polygon points="851.0,650.0 900.0,612.0 960.0,600.0 990.0,640.0 990.0,672.0 950.0,675.0 900.0,690.0 880.0,720.0 911.0,760.0 812.0,765.0 812.0,735.0 835.0,700.0" fill="#fff" filter="url(#bl)"/></mask>
<filter id="t_plateau_w" x="600" y="80" width="1260" height="960" filterUnits="userSpaceOnUse" color-interpolation-filters="sRGB">
<feFlood flood-color="#c6d6b3" result="base"/>
<feTurbulence type="fractalNoise" baseFrequency="0.03 0.09" numOctaves="4" seed="12" result="n0"/>
<feColorMatrix in="n0" type="matrix" values="0 0 0 0 0  0 0 0 0 0  0 0 0 0 0  22 0 0 0 -12.549" result="a0"/>
<feFlood flood-color="#f2e9ae" result="f0"/>
<feComposite in="f0" in2="a0" operator="in" result="l0"/>
<feTurbulence type="fractalNoise" baseFrequency="0.03 0.09" numOctaves="4" seed="13" result="n1"/>
<feColorMatrix in="n1" type="matrix" values="0 0 0 0 0  0 0 0 0 0  0 0 0 0 0  22 0 0 0 -13.323" result="a1"/>
<feFlood flood-color="#eacbb4" result="f1"/>
<feComposite in="f1" in2="a1" operator="in" result="l1"/>
<feTurbulence type="fractalNoise" baseFrequency="0.03 0.09" numOctaves="4" seed="14" result="n2"/>
<feColorMatrix in="n2" type="matrix" values="0 0 0 0 0  0 0 0 0 0  0 0 0 0 0  22 0 0 0 -13.323" result="a2"/>
<feFlood flood-color="#a9bbd4" result="f2"/>
<feComposite in="f2" in2="a2" operator="in" result="l2"/>
<feTurbulence type="fractalNoise" baseFrequency="0.03 0.09" numOctaves="4" seed="15" result="n3"/>
<feColorMatrix in="n3" type="matrix" values="0 0 0 0 0  0 0 0 0 0  0 0 0 0 0  22 0 0 0 -14.098" result="a3"/>
<feFlood flood-color="#bab6d3" result="f3"/>
<feComposite in="f3" in2="a3" operator="in" result="l3"/>
<feMerge><feMergeNode in="base"/><feMergeNode in="l0"/><feMergeNode in="l1"/><feMergeNode in="l2"/><feMergeNode in="l3"/></feMerge></filter>
<mask id="m_plateau_w" maskUnits="userSpaceOnUse" x="760" y="240" width="940" height="640"><polygon points="960.0,600.0 1000.0,525.0 1045.0,492.0 1090.0,458.0 1110.0,470.0 1100.0,560.0 1060.0,600.0 1000.0,640.0" fill="#fff" filter="url(#bl)"/></mask>
<filter id="t_napf" x="600" y="80" width="1260" height="960" filterUnits="userSpaceOnUse" color-interpolation-filters="sRGB">
<feFlood flood-color="#eacbb4" result="base"/>
<feTurbulence type="fractalNoise" baseFrequency="0.03 0.09" numOctaves="4" seed="16" result="n0"/>
<feColorMatrix in="n0" type="matrix" values="0 0 0 0 0  0 0 0 0 0  0 0 0 0 0  22 0 0 0 -13.710" result="a0"/>
<feFlood flood-color="#c6d6b3" result="f0"/>
<feComposite in="f0" in2="a0" operator="in" result="l0"/>
<feTurbulence type="fractalNoise" baseFrequency="0.03 0.09" numOctaves="4" seed="17" result="n1"/>
<feColorMatrix in="n1" type="matrix" values="0 0 0 0 0  0 0 0 0 0  0 0 0 0 0  22 0 0 0 -13.710" result="a1"/>
<feFlood flood-color="#f2e9ae" result="f1"/>
<feComposite in="f1" in2="a1" operator="in" result="l1"/>
<feTurbulence type="fractalNoise" baseFrequency="0.03 0.09" numOctaves="4" seed="18" result="n2"/>
<feColorMatrix in="n2" type="matrix" values="0 0 0 0 0  0 0 0 0 0  0 0 0 0 0  22 0 0 0 -14.098" result="a2"/>
<feFlood flood-color="#a9bbd4" result="f2"/>
<feComposite in="f2" in2="a2" operator="in" result="l2"/>
<feMerge><feMergeNode in="base"/><feMergeNode in="l0"/><feMergeNode in="l1"/><feMergeNode in="l2"/></feMerge></filter>
<mask id="m_napf" maskUnits="userSpaceOnUse" x="760" y="240" width="940" height="640"><polygon points="1116.0,452.0 1163.0,426.0 1189.0,444.0 1203.0,496.0 1180.0,531.0 1145.0,537.0 1122.0,510.0" fill="#fff" filter="url(#bl)"/></mask>
<filter id="t_plateau_c" x="600" y="80" width="1260" height="960" filterUnits="userSpaceOnUse" color-interpolation-filters="sRGB">
<feFlood flood-color="#c6d6b3" result="base"/>
<feTurbulence type="fractalNoise" baseFrequency="0.03 0.09" numOctaves="4" seed="47" result="n0"/>
<feColorMatrix in="n0" type="matrix" values="0 0 0 0 0  0 0 0 0 0  0 0 0 0 0  22 0 0 0 -12.549" result="a0"/>
<feFlood flood-color="#f2e9ae" result="f0"/>
<feComposite in="f0" in2="a0" operator="in" result="l0"/>
<feTurbulence type="fractalNoise" baseFrequency="0.03 0.09" numOctaves="4" seed="48" result="n1"/>
<feColorMatrix in="n1" type="matrix" values="0 0 0 0 0  0 0 0 0 0  0 0 0 0 0  22 0 0 0 -12.549" result="a1"/>
<feFlood flood-color="#a9bbd4" result="f1"/>
<feComposite in="f1" in2="a1" operator="in" result="l1"/>
<feTurbulence type="fractalNoise" baseFrequency="0.03 0.09" numOctaves="4" seed="49" result="n2"/>
<feColorMatrix in="n2" type="matrix" values="0 0 0 0 0  0 0 0 0 0  0 0 0 0 0  22 0 0 0 -13.710" result="a2"/>
<feFlood flood-color="#eacbb4" result="f2"/>
<feComposite in="f2" in2="a2" operator="in" result="l2"/>
<feMerge><feMergeNode in="base"/><feMergeNode in="l0"/><feMergeNode in="l1"/><feMergeNode in="l2"/></feMerge></filter>
<mask id="m_plateau_c" maskUnits="userSpaceOnUse" x="760" y="240" width="940" height="640"><polygon points="1174.0,412.0 1262.0,410.0 1290.0,420.0 1280.0,496.0 1240.0,500.0 1203.0,496.0 1189.0,444.0" fill="#fff" filter="url(#bl)"/></mask>
<filter id="t_north" x="600" y="80" width="1260" height="960" filterUnits="userSpaceOnUse" color-interpolation-filters="sRGB">
<feFlood flood-color="#bab6d3" result="base"/>
<feTurbulence type="fractalNoise" baseFrequency="0.03 0.09" numOctaves="4" seed="19" result="n0"/>
<feColorMatrix in="n0" type="matrix" values="0 0 0 0 0  0 0 0 0 0  0 0 0 0 0  22 0 0 0 -12.162" result="a0"/>
<feFlood flood-color="#a9bbd4" result="f0"/>
<feComposite in="f0" in2="a0" operator="in" result="l0"/>
<feTurbulence type="fractalNoise" baseFrequency="0.03 0.09" numOctaves="4" seed="20" result="n1"/>
<feColorMatrix in="n1" type="matrix" values="0 0 0 0 0  0 0 0 0 0  0 0 0 0 0  22 0 0 0 -12.549" result="a1"/>
<feFlood flood-color="#f2e9ae" result="f1"/>
<feComposite in="f1" in2="a1" operator="in" result="l1"/>
<feTurbulence type="fractalNoise" baseFrequency="0.03 0.09" numOctaves="4" seed="21" result="n2"/>
<feColorMatrix in="n2" type="matrix" values="0 0 0 0 0  0 0 0 0 0  0 0 0 0 0  22 0 0 0 -12.936" result="a2"/>
<feFlood flood-color="#c6d6b3" result="f2"/>
<feComposite in="f2" in2="a2" operator="in" result="l2"/>
<feTurbulence type="fractalNoise" baseFrequency="0.03 0.09" numOctaves="4" seed="22" result="n3"/>
<feColorMatrix in="n3" type="matrix" values="0 0 0 0 0  0 0 0 0 0  0 0 0 0 0  22 0 0 0 -13.710" result="a3"/>
<feFlood flood-color="#eacbb4" result="f3"/>
<feComposite in="f3" in2="a3" operator="in" result="l3"/>
<feMerge><feMergeNode in="base"/><feMergeNode in="l0"/><feMergeNode in="l1"/><feMergeNode in="l2"/><feMergeNode in="l3"/></feMerge></filter>
<mask id="m_north" maskUnits="userSpaceOnUse" x="760" y="240" width="940" height="640"><polygon points="1090.0,335.0 1180.0,330.0 1280.0,300.0 1300.0,340.0 1262.0,395.0 1190.0,405.0 1130.0,420.0 1100.0,380.0" fill="#fff" filter="url(#bl)"/></mask>
<filter id="t_ne" x="600" y="80" width="1260" height="960" filterUnits="userSpaceOnUse" color-interpolation-filters="sRGB">
<feFlood flood-color="#c6d6b3" result="base"/>
<feTurbulence type="fractalNoise" baseFrequency="0.03 0.09" numOctaves="4" seed="23" result="n0"/>
<feColorMatrix in="n0" type="matrix" values="0 0 0 0 0  0 0 0 0 0  0 0 0 0 0  22 0 0 0 -12.549" result="a0"/>
<feFlood flood-color="#f2e9ae" result="f0"/>
<feComposite in="f0" in2="a0" operator="in" result="l0"/>
<feTurbulence type="fractalNoise" baseFrequency="0.03 0.09" numOctaves="4" seed="24" result="n1"/>
<feColorMatrix in="n1" type="matrix" values="0 0 0 0 0  0 0 0 0 0  0 0 0 0 0  22 0 0 0 -14.098" result="a1"/>
<feFlood flood-color="#eacbb4" result="f1"/>
<feComposite in="f1" in2="a1" operator="in" result="l1"/>
<feTurbulence type="fractalNoise" baseFrequency="0.03 0.09" numOctaves="4" seed="25" result="n2"/>
<feColorMatrix in="n2" type="matrix" values="0 0 0 0 0  0 0 0 0 0  0 0 0 0 0  22 0 0 0 -13.323" result="a2"/>
<feFlood flood-color="#a9bbd4" result="f2"/>
<feComposite in="f2" in2="a2" operator="in" result="l2"/>
<feTurbulence type="fractalNoise" baseFrequency="0.03 0.09" numOctaves="4" seed="26" result="n3"/>
<feColorMatrix in="n3" type="matrix" values="0 0 0 0 0  0 0 0 0 0  0 0 0 0 0  22 0 0 0 -14.252" result="a3"/>
<feFlood flood-color="#bab6d3" result="f3"/>
<feComposite in="f3" in2="a3" operator="in" result="l3"/>
<feMerge><feMergeNode in="base"/><feMergeNode in="l0"/><feMergeNode in="l1"/><feMergeNode in="l2"/><feMergeNode in="l3"/></feMerge></filter>
<mask id="m_ne" maskUnits="userSpaceOnUse" x="760" y="240" width="940" height="640"><polygon points="1290.0,290.0 1440.0,312.0 1525.0,370.0 1525.0,440.0 1470.0,445.0 1380.0,430.0 1300.0,410.0 1270.0,370.0" fill="#fff" filter="url(#bl)"/></mask>
<filter id="t_ne_pink" x="600" y="80" width="1260" height="960" filterUnits="userSpaceOnUse" color-interpolation-filters="sRGB">
<feFlood flood-color="#eacbb4" result="base"/>
<feTurbulence type="fractalNoise" baseFrequency="0.03 0.09" numOctaves="4" seed="50" result="n0"/>
<feColorMatrix in="n0" type="matrix" values="0 0 0 0 0  0 0 0 0 0  0 0 0 0 0  22 0 0 0 -12.549" result="a0"/>
<feFlood flood-color="#f2e9ae" result="f0"/>
<feComposite in="f0" in2="a0" operator="in" result="l0"/>
<feTurbulence type="fractalNoise" baseFrequency="0.03 0.09" numOctaves="4" seed="51" result="n1"/>
<feColorMatrix in="n1" type="matrix" values="0 0 0 0 0  0 0 0 0 0  0 0 0 0 0  22 0 0 0 -13.323" result="a1"/>
<feFlood flood-color="#c6d6b3" result="f1"/>
<feComposite in="f1" in2="a1" operator="in" result="l1"/>
<feMerge><feMergeNode in="base"/><feMergeNode in="l0"/><feMergeNode in="l1"/></feMerge></filter>
<mask id="m_ne_pink" maskUnits="userSpaceOnUse" x="760" y="240" width="940" height="640"><polygon points="1330.0,395.0 1400.0,385.0 1460.0,400.0 1470.0,440.0 1420.0,460.0 1360.0,455.0" fill="#fff" filter="url(#bl)"/></mask>
<filter id="t_alps_lav" x="600" y="80" width="1260" height="960" filterUnits="userSpaceOnUse" color-interpolation-filters="sRGB">
<feFlood flood-color="#bab6d3" result="base"/>
<feTurbulence type="fractalNoise" baseFrequency="0.03 0.09" numOctaves="4" seed="52" result="n0"/>
<feColorMatrix in="n0" type="matrix" values="0 0 0 0 0  0 0 0 0 0  0 0 0 0 0  22 0 0 0 -12.936" result="a0"/>
<feFlood flood-color="#eacbb4" result="f0"/>
<feComposite in="f0" in2="a0" operator="in" result="l0"/>
<feTurbulence type="fractalNoise" baseFrequency="0.03 0.09" numOctaves="4" seed="53" result="n1"/>
<feColorMatrix in="n1" type="matrix" values="0 0 0 0 0  0 0 0 0 0  0 0 0 0 0  22 0 0 0 -13.710" result="a1"/>
<feFlood flood-color="#f2e9ae" result="f1"/>
<feComposite in="f1" in2="a1" operator="in" result="l1"/>
<feTurbulence type="fractalNoise" baseFrequency="0.03 0.09" numOctaves="4" seed="54" result="n2"/>
<feColorMatrix in="n2" type="matrix" values="0 0 0 0 0  0 0 0 0 0  0 0 0 0 0  22 0 0 0 -13.710" result="a2"/>
<feFlood flood-color="#c6d6b3" result="f2"/>
<feComposite in="f2" in2="a2" operator="in" result="l2"/>
<feMerge><feMergeNode in="base"/><feMergeNode in="l0"/><feMergeNode in="l1"/><feMergeNode in="l2"/></feMerge></filter>
<mask id="m_alps_lav" maskUnits="userSpaceOnUse" x="760" y="240" width="940" height="640"><polygon points="1150.0,545.0 1300.0,515.0 1450.0,470.0 1520.0,460.0 1560.0,500.0 1500.0,550.0 1380.0,560.0 1260.0,570.0 1150.0,575.0" fill="#fff" filter="url(#bl)"/></mask>
<filter id="t_chablais" x="600" y="80" width="1260" height="960" filterUnits="userSpaceOnUse" color-interpolation-filters="sRGB">
<feFlood flood-color="#f2e9ae" result="base"/>
<feTurbulence type="fractalNoise" baseFrequency="0.03 0.09" numOctaves="4" seed="55" result="n0"/>
<feColorMatrix in="n0" type="matrix" values="0 0 0 0 0  0 0 0 0 0  0 0 0 0 0  22 0 0 0 -12.162" result="a0"/>
<feFlood flood-color="#bab6d3" result="f0"/>
<feComposite in="f0" in2="a0" operator="in" result="l0"/>
<feTurbulence type="fractalNoise" baseFrequency="0.03 0.09" numOctaves="4" seed="56" result="n1"/>
<feColorMatrix in="n1" type="matrix" values="0 0 0 0 0  0 0 0 0 0  0 0 0 0 0  22 0 0 0 -12.549" result="a1"/>
<feFlood flood-color="#eacbb4" result="f1"/>
<feComposite in="f1" in2="a1" operator="in" result="l1"/>
<feTurbulence type="fractalNoise" baseFrequency="0.03 0.09" numOctaves="4" seed="57" result="n2"/>
<feColorMatrix in="n2" type="matrix" values="0 0 0 0 0  0 0 0 0 0  0 0 0 0 0  22 0 0 0 -13.323" result="a2"/>
<feFlood flood-color="#c6d6b3" result="f2"/>
<feComposite in="f2" in2="a2" operator="in" result="l2"/>
<feMerge><feMergeNode in="base"/><feMergeNode in="l0"/><feMergeNode in="l1"/><feMergeNode in="l2"/></feMerge></filter>
<mask id="m_chablais" maskUnits="userSpaceOnUse" x="760" y="240" width="940" height="640"><polygon points="900.0,673.0 990.0,672.0 1050.0,700.0 1000.0,760.0 911.0,760.0" fill="#fff" filter="url(#bl)"/></mask>
<filter id="t_alps_n" x="600" y="80" width="1260" height="960" filterUnits="userSpaceOnUse" color-interpolation-filters="sRGB">
<feFlood flood-color="#eacbb4" result="base"/>
<feTurbulence type="fractalNoise" baseFrequency="0.03 0.09" numOctaves="4" seed="27" result="n0"/>
<feColorMatrix in="n0" type="matrix" values="0 0 0 0 0  0 0 0 0 0  0 0 0 0 0  22 0 0 0 -11.774" result="a0"/>
<feFlood flood-color="#f2e9ae" result="f0"/>
<feComposite in="f0" in2="a0" operator="in" result="l0"/>
<feTurbulence type="fractalNoise" baseFrequency="0.03 0.09" numOctaves="4" seed="28" result="n1"/>
<feColorMatrix in="n1" type="matrix" values="0 0 0 0 0  0 0 0 0 0  0 0 0 0 0  22 0 0 0 -13.943" result="a1"/>
<feFlood flood-color="#bab6d3" result="f1"/>
<feComposite in="f1" in2="a1" operator="in" result="l1"/>
<feTurbulence type="fractalNoise" baseFrequency="0.03 0.09" numOctaves="4" seed="29" result="n2"/>
<feColorMatrix in="n2" type="matrix" values="0 0 0 0 0  0 0 0 0 0  0 0 0 0 0  22 0 0 0 -13.710" result="a2"/>
<feFlood flood-color="#e0e6e7" result="f2"/>
<feComposite in="f2" in2="a2" operator="in" result="l2"/>
<feTurbulence type="fractalNoise" baseFrequency="0.03 0.09" numOctaves="4" seed="30" result="n3"/>
<feColorMatrix in="n3" type="matrix" values="0 0 0 0 0  0 0 0 0 0  0 0 0 0 0  22 0 0 0 -13.710" result="a3"/>
<feFlood flood-color="#c6d6b3" result="f3"/>
<feComposite in="f3" in2="a3" operator="in" result="l3"/>
<feMerge><feMergeNode in="base"/><feMergeNode in="l0"/><feMergeNode in="l1"/><feMergeNode in="l2"/><feMergeNode in="l3"/></feMerge></filter>
<mask id="m_alps_n" maskUnits="userSpaceOnUse" x="760" y="240" width="940" height="640"><polygon points="990.0,620.0 1100.0,600.0 1250.0,588.0 1400.0,578.0 1500.0,565.0 1450.0,640.0 1300.0,630.0 1200.0,690.0 1050.0,720.0 990.0,680.0" fill="#fff" filter="url(#bl)"/></mask>
<filter id="t_glacier" x="600" y="80" width="1260" height="960" filterUnits="userSpaceOnUse" color-interpolation-filters="sRGB">
<feFlood flood-color="#eacbb4" result="base"/>
<feTurbulence type="fractalNoise" baseFrequency="0.03 0.09" numOctaves="4" seed="35" result="n0"/>
<feColorMatrix in="n0" type="matrix" values="0 0 0 0 0  0 0 0 0 0  0 0 0 0 0  22 0 0 0 -10.613" result="a0"/>
<feFlood flood-color="#e0e6e7" result="f0"/>
<feComposite in="f0" in2="a0" operator="in" result="l0"/>
<feTurbulence type="fractalNoise" baseFrequency="0.03 0.09" numOctaves="4" seed="36" result="n1"/>
<feColorMatrix in="n1" type="matrix" values="0 0 0 0 0  0 0 0 0 0  0 0 0 0 0  22 0 0 0 -12.549" result="a1"/>
<feFlood flood-color="#f2e9ae" result="f1"/>
<feComposite in="f1" in2="a1" operator="in" result="l1"/>
<feMerge><feMergeNode in="base"/><feMergeNode in="l0"/><feMergeNode in="l1"/></feMerge></filter>
<mask id="m_glacier" maskUnits="userSpaceOnUse" x="760" y="240" width="940" height="640"><polygon points="1150.0,583.0 1255.0,590.0 1262.0,650.0 1220.0,680.0 1150.0,690.0 1130.0,640.0" fill="#fff" filter="url(#bl)"/></mask>
<filter id="t_south" x="600" y="80" width="1260" height="960" filterUnits="userSpaceOnUse" color-interpolation-filters="sRGB">
<feFlood flood-color="#f2e9ae" result="base"/>
<feTurbulence type="fractalNoise" baseFrequency="0.03 0.09" numOctaves="4" seed="31" result="n0"/>
<feColorMatrix in="n0" type="matrix" values="0 0 0 0 0  0 0 0 0 0  0 0 0 0 0  22 0 0 0 -11.387" result="a0"/>
<feFlood flood-color="#eacbb4" result="f0"/>
<feComposite in="f0" in2="a0" operator="in" result="l0"/>
<feTurbulence type="fractalNoise" baseFrequency="0.03 0.09" numOctaves="4" seed="32" result="n1"/>
<feColorMatrix in="n1" type="matrix" values="0 0 0 0 0  0 0 0 0 0  0 0 0 0 0  22 0 0 0 -12.936" result="a1"/>
<feFlood flood-color="#c6d6b3" result="f1"/>
<feComposite in="f1" in2="a1" operator="in" result="l1"/>
<feTurbulence type="fractalNoise" baseFrequency="0.03 0.09" numOctaves="4" seed="33" result="n2"/>
<feColorMatrix in="n2" type="matrix" values="0 0 0 0 0  0 0 0 0 0  0 0 0 0 0  22 0 0 0 -14.252" result="a2"/>
<feFlood flood-color="#bab6d3" result="f2"/>
<feComposite in="f2" in2="a2" operator="in" result="l2"/>
<feTurbulence type="fractalNoise" baseFrequency="0.03 0.09" numOctaves="4" seed="34" result="n3"/>
<feColorMatrix in="n3" type="matrix" values="0 0 0 0 0  0 0 0 0 0  0 0 0 0 0  22 0 0 0 -14.098" result="a3"/>
<feFlood flood-color="#e0e6e7" result="f3"/>
<feComposite in="f3" in2="a3" operator="in" result="l3"/>
<feMerge><feMergeNode in="base"/><feMergeNode in="l0"/><feMergeNode in="l1"/><feMergeNode in="l2"/><feMergeNode in="l3"/></feMerge></filter>
<mask id="m_south" maskUnits="userSpaceOnUse" x="760" y="240" width="940" height="640"><polygon points="980.0,745.0 1150.0,705.0 1300.0,640.0 1450.0,600.0 1660.0,560.0 1660.0,760.0 1450.0,760.0 1300.0,830.0 980.0,830.0" fill="#fff" filter="url(#bl)"/></mask>
<filter id="t_engadin" x="600" y="80" width="1260" height="960" filterUnits="userSpaceOnUse" color-interpolation-filters="sRGB">
<feFlood flood-color="#bab6d3" result="base"/>
<feTurbulence type="fractalNoise" baseFrequency="0.03 0.09" numOctaves="4" seed="38" result="n0"/>
<feColorMatrix in="n0" type="matrix" values="0 0 0 0 0  0 0 0 0 0  0 0 0 0 0  22 0 0 0 -13.323" result="a0"/>
<feFlood flood-color="#eacbb4" result="f0"/>
<feComposite in="f0" in2="a0" operator="in" result="l0"/>
<feTurbulence type="fractalNoise" baseFrequency="0.03 0.09" numOctaves="4" seed="39" result="n1"/>
<feColorMatrix in="n1" type="matrix" values="0 0 0 0 0  0 0 0 0 0  0 0 0 0 0  22 0 0 0 -13.710" result="a1"/>
<feFlood flood-color="#f2e9ae" result="f1"/>
<feComposite in="f1" in2="a1" operator="in" result="l1"/>
<feTurbulence type="fractalNoise" baseFrequency="0.03 0.09" numOctaves="4" seed="40" result="n2"/>
<feColorMatrix in="n2" type="matrix" values="0 0 0 0 0  0 0 0 0 0  0 0 0 0 0  22 0 0 0 -13.323" result="a2"/>
<feFlood flood-color="#a9bbd4" result="f2"/>
<feComposite in="f2" in2="a2" operator="in" result="l2"/>
<feMerge><feMergeNode in="base"/><feMergeNode in="l0"/><feMergeNode in="l1"/><feMergeNode in="l2"/></feMerge></filter>
<mask id="m_engadin" maskUnits="userSpaceOnUse" x="760" y="240" width="940" height="640"><polygon points="1560.0,605.0 1600.0,572.0 1640.0,555.0 1650.0,600.0 1642.0,642.0 1600.0,628.0 1565.0,618.0" fill="#fff" filter="url(#bl)"/></mask>
<filter id="t_bernina" x="600" y="80" width="1260" height="960" filterUnits="userSpaceOnUse" color-interpolation-filters="sRGB">
<feFlood flood-color="#eacbb4" result="base"/>
<feTurbulence type="fractalNoise" baseFrequency="0.03 0.09" numOctaves="4" seed="61" result="n0"/>
<feColorMatrix in="n0" type="matrix" values="0 0 0 0 0  0 0 0 0 0  0 0 0 0 0  22 0 0 0 -11.000" result="a0"/>
<feFlood flood-color="#e0e6e7" result="f0"/>
<feComposite in="f0" in2="a0" operator="in" result="l0"/>
<feTurbulence type="fractalNoise" baseFrequency="0.03 0.09" numOctaves="4" seed="62" result="n1"/>
<feColorMatrix in="n1" type="matrix" values="0 0 0 0 0  0 0 0 0 0  0 0 0 0 0  22 0 0 0 -12.549" result="a1"/>
<feFlood flood-color="#f2e9ae" result="f1"/>
<feComposite in="f1" in2="a1" operator="in" result="l1"/>
<feMerge><feMergeNode in="base"/><feMergeNode in="l0"/><feMergeNode in="l1"/></feMerge></filter>
<mask id="m_bernina" maskUnits="userSpaceOnUse" x="760" y="240" width="940" height="640"><polygon points="1518.0,652.0 1550.0,650.0 1552.0,685.0 1520.0,688.0" fill="#fff" filter="url(#bl)"/></mask>
<filter id="t_gr_lav" x="600" y="80" width="1260" height="960" filterUnits="userSpaceOnUse" color-interpolation-filters="sRGB">
<feFlood flood-color="#bab6d3" result="base"/>
<feTurbulence type="fractalNoise" baseFrequency="0.03 0.09" numOctaves="4" seed="58" result="n0"/>
<feColorMatrix in="n0" type="matrix" values="0 0 0 0 0  0 0 0 0 0  0 0 0 0 0  22 0 0 0 -12.549" result="a0"/>
<feFlood flood-color="#eacbb4" result="f0"/>
<feComposite in="f0" in2="a0" operator="in" result="l0"/>
<feTurbulence type="fractalNoise" baseFrequency="0.03 0.09" numOctaves="4" seed="59" result="n1"/>
<feColorMatrix in="n1" type="matrix" values="0 0 0 0 0  0 0 0 0 0  0 0 0 0 0  22 0 0 0 -12.936" result="a1"/>
<feFlood flood-color="#f2e9ae" result="f1"/>
<feComposite in="f1" in2="a1" operator="in" result="l1"/>
<feTurbulence type="fractalNoise" baseFrequency="0.03 0.09" numOctaves="4" seed="60" result="n2"/>
<feColorMatrix in="n2" type="matrix" values="0 0 0 0 0  0 0 0 0 0  0 0 0 0 0  22 0 0 0 -13.323" result="a2"/>
<feFlood flood-color="#a9bbd4" result="f2"/>
<feComposite in="f2" in2="a2" operator="in" result="l2"/>
<feMerge><feMergeNode in="base"/><feMergeNode in="l0"/><feMergeNode in="l1"/><feMergeNode in="l2"/></feMerge></filter>
<mask id="m_gr_lav" maskUnits="userSpaceOnUse" x="760" y="240" width="940" height="640"><polygon points="1486.0,405.0 1524.0,410.0 1524.0,435.0 1490.0,440.0 1476.0,470.0 1474.0,553.0 1440.0,553.0 1440.0,480.0 1470.0,460.0" fill="#fff" filter="url(#bl)"/></mask>
<filter id="t_south_lav" x="600" y="80" width="1260" height="960" filterUnits="userSpaceOnUse" color-interpolation-filters="sRGB">
<feFlood flood-color="#bab6d3" result="base"/>
<feTurbulence type="fractalNoise" baseFrequency="0.03 0.09" numOctaves="4" seed="41" result="n0"/>
<feColorMatrix in="n0" type="matrix" values="0 0 0 0 0  0 0 0 0 0  0 0 0 0 0  22 0 0 0 -13.478" result="a0"/>
<feFlood flood-color="#eacbb4" result="f0"/>
<feComposite in="f0" in2="a0" operator="in" result="l0"/>
<feTurbulence type="fractalNoise" baseFrequency="0.03 0.09" numOctaves="4" seed="42" result="n1"/>
<feColorMatrix in="n1" type="matrix" values="0 0 0 0 0  0 0 0 0 0  0 0 0 0 0  22 0 0 0 -13.943" result="a1"/>
<feFlood flood-color="#c6d6b3" result="f1"/>
<feComposite in="f1" in2="a1" operator="in" result="l1"/>
<feTurbulence type="fractalNoise" baseFrequency="0.03 0.09" numOctaves="4" seed="43" result="n2"/>
<feColorMatrix in="n2" type="matrix" values="0 0 0 0 0  0 0 0 0 0  0 0 0 0 0  22 0 0 0 -13.943" result="a2"/>
<feFlood flood-color="#a9bbd4" result="f2"/>
<feComposite in="f2" in2="a2" operator="in" result="l2"/>
<feMerge><feMergeNode in="base"/><feMergeNode in="l0"/><feMergeNode in="l1"/><feMergeNode in="l2"/></feMerge></filter>
<mask id="m_south_lav" maskUnits="userSpaceOnUse" x="760" y="240" width="940" height="640"><polygon points="1372.0,760.0 1412.0,755.0 1410.0,800.0 1390.0,822.0 1355.0,818.0 1342.0,790.0" fill="#fff" filter="url(#bl)"/></mask>
<filter id="speck" x="760" y="240" width="940" height="640" filterUnits="userSpaceOnUse"><feTurbulence type="fractalNoise" baseFrequency="0.7" numOctaves="1" seed="9" result="n"/><feColorMatrix in="n" type="matrix" values="0 0 0 0 0.2  0 0 0 0 0.26  0 0 0 0 0.24  -30 0 0 0 9.6"/></filter>
</defs>
<g clip-path="url(#cp)">
<g><g transform="rotate(-28 1230 555)"><rect x="640" y="120" width="1180" height="870" filter="url(#t_general)"/></g></g>
<g mask="url(#m_jura)"><g transform="rotate(-28 1230 555)"><rect x="640" y="120" width="1180" height="870" filter="url(#t_jura)"/></g></g>
<g mask="url(#m_ajoie)"><g transform="rotate(-28 1230 555)"><rect x="640" y="120" width="1180" height="870" filter="url(#t_ajoie)"/></g></g>
<g mask="url(#m_geneva)"><g transform="rotate(-28 1230 555)"><rect x="640" y="120" width="1180" height="870" filter="url(#t_geneva)"/></g></g>
<g mask="url(#m_plateau_w)"><g transform="rotate(-28 1230 555)"><rect x="640" y="120" width="1180" height="870" filter="url(#t_plateau_w)"/></g></g>
<g mask="url(#m_napf)"><g transform="rotate(-28 1230 555)"><rect x="640" y="120" width="1180" height="870" filter="url(#t_napf)"/></g></g>
<g mask="url(#m_plateau_c)"><g transform="rotate(-28 1230 555)"><rect x="640" y="120" width="1180" height="870" filter="url(#t_plateau_c)"/></g></g>
<g mask="url(#m_north)"><g transform="rotate(-28 1230 555)"><rect x="640" y="120" width="1180" height="870" filter="url(#t_north)"/></g></g>
<g mask="url(#m_ne)"><g transform="rotate(-28 1230 555)"><rect x="640" y="120" width="1180" height="870" filter="url(#t_ne)"/></g></g>
<g mask="url(#m_ne_pink)"><g transform="rotate(-28 1230 555)"><rect x="640" y="120" width="1180" height="870" filter="url(#t_ne_pink)"/></g></g>
<g mask="url(#m_alps_lav)"><g transform="rotate(-28 1230 555)"><rect x="640" y="120" width="1180" height="870" filter="url(#t_alps_lav)"/></g></g>
<g mask="url(#m_chablais)"><g transform="rotate(-28 1230 555)"><rect x="640" y="120" width="1180" height="870" filter="url(#t_chablais)"/></g></g>
<g mask="url(#m_alps_n)"><g transform="rotate(-28 1230 555)"><rect x="640" y="120" width="1180" height="870" filter="url(#t_alps_n)"/></g></g>
<g mask="url(#m_glacier)"><g transform="rotate(-28 1230 555)"><rect x="640" y="120" width="1180" height="870" filter="url(#t_glacier)"/></g></g>
<g mask="url(#m_south)"><g transform="rotate(-28 1230 555)"><rect x="640" y="120" width="1180" height="870" filter="url(#t_south)"/></g></g>
<g mask="url(#m_engadin)"><g transform="rotate(-28 1230 555)"><rect x="640" y="120" width="1180" height="870" filter="url(#t_engadin)"/></g></g>
<g mask="url(#m_bernina)"><g transform="rotate(-28 1230 555)"><rect x="640" y="120" width="1180" height="870" filter="url(#t_bernina)"/></g></g>
<g mask="url(#m_gr_lav)"><g transform="rotate(-28 1230 555)"><rect x="640" y="120" width="1180" height="870" filter="url(#t_gr_lav)"/></g></g>
<g mask="url(#m_south_lav)"><g transform="rotate(-28 1230 555)"><rect x="640" y="120" width="1180" height="870" filter="url(#t_south_lav)"/></g></g>
<path d="M1257 705L1259 698L1262 691L1264 685L1270 682L1278 679M902 511L903 507L906 501L901 495L896 493M1515 383L1521 382L1525 384L1527 393L1528 400M1113 351L1117 347L1121 345L1128 348L1134 350L1137 348M1111 658L1120 656L1128 654L1131 650L1135 648M1337 771L1343 766L1343 763L1337 758L1329 756M1194 600L1200 605L1204 607L1206 612L1212 615L1218 620M903 318L911 321L914 324L917 328L923 329L928 335M1235 562L1235 556L1234 547L1240 543L1239 538M911 513L917 512L921 508L924 504L927 500M1031 294L1039 295L1042 297M1190 468L1186 463L1183 462L1177 468L1173 470M1504 518L1508 523L1513 523L1517 523L1525 525L1526 533M1058 625L1058 632L1055 639L1055 644M929 676L934 671L941 668L947 670L954 675L960 672M1434 421L1440 416L1444 418M1196 742L1198 749L1201 755L1203 758L1206 762M811 318L817 312L823 309L829 305L836 306M1272 453L1277 456L1281 463L1284 466L1285 470M844 642L843 638L845 634L851 635M1231 723L1236 721L1241 723L1246 726M1039 808L1041 801L1043 793L1045 790M1171 453L1171 450L1172 442M1221 324L1230 326L1234 328L1239 332L1239 339L1242 345M976 809L982 809L987 811L993 811M1571 547L1579 543L1582 544L1587 547M958 528L962 520L964 511M1442 302L1449 306L1452 307L1454 310L1457 318L1459 324M1113 769L1116 770L1117 773L1115 777L1109 782L1107 786M1331 427L1333 422L1329 416L1322 412L1319 410M1003 750L1005 744L1008 740M1214 579L1216 588L1221 588L1224 591M1495 638L1495 634L1496 626M835 444L843 444L848 446L853 446M1613 342L1613 339L1617 342L1617 346M1586 725L1589 722L1593 720L1599 723L1600 725M1350 334L1355 332L1356 339L1352 343M1156 295L1161 291L1170 288L1175 287L1179 288M1423 770L1430 772L1435 772M1457 706L1460 702L1462 699L1468 694L1472 690L1474 687M1506 767L1500 764L1496 763L1494 761L1490 759L1487 756M1365 392L1366 388L1366 381L1367 373L1369 369L1372 368M1206 572L1212 569L1217 568L1220 570M924 300L926 308L924 315L923 322L921 325M1451 396L1456 394L1464 397L1468 398L1472 391M1269 377L1272 378L1279 378L1281 376L1278 370L1275 365M1349 343L1352 343L1360 342M809 734L808 731L806 724M1247 340L1247 334L1249 327L1248 322L1247 313L1251 310M1097 600L1098 604L1099 610M1535 385L1537 377L1544 373L1550 376M1316 682L1314 674L1315 667L1311 659M865 629L867 631L871 640M1223 349L1228 353L1233 358L1239 361M956 305L963 300L967 293M1398 504L1397 501L1397 492M1209 508L1215 513L1221 517L1226 521M1538 403L1545 406L1549 408L1552 408L1560 406M872 624L874 619L875 610L877 603L878 596L883 590M1469 529L1477 529L1480 528L1488 524L1487 519M935 782L936 774L941 768L941 763L944 755M1098 331L1102 324L1110 323L1113 320L1114 314L1115 310M965 383L967 377L970 372L975 364L980 363M934 607L939 607L943 605L947 598L947 594M1631 821L1639 818L1642 816L1649 812L1650 808M934 431L938 429L943 429L945 437L943 440M977 616L981 611L987 606L991 602M1088 740L1088 736L1090 733L1094 727L1102 725L1105 723M818 807L824 805L830 806L831 815M1522 569L1531 567L1536 567L1544 565L1545 558L1544 549M920 809L919 801L919 793M1433 685L1433 677L1430 671L1428 667L1422 665M849 297L849 291L847 288L847 281L847 277M933 467L934 471L932 475L924 476L917 472M1031 626L1029 618L1028 615L1023 611L1014 611L1007 613M1477 451L1482 448L1485 446L1489 444L1489 437M1037 303L1034 299L1030 295M1301 803L1304 802L1308 802L1315 803L1323 804L1328 803M1642 321L1647 316L1649 311L1657 312L1660 313L1664 313M1044 413L1051 417L1054 420L1056 426L1063 430M913 666L909 661L909 655L907 650L905 643M1367 663L1374 668L1377 670L1380 675L1384 678M1170 694L1175 691L1181 688L1185 688M1019 520L1027 516L1034 518L1039 524L1046 526M1386 305L1393 305L1397 304L1402 299L1407 293M1408 647L1413 653L1415 656L1419 661M1305 415L1310 410L1312 404M1183 592L1185 596L1189 604L1187 611L1181 617M824 703L828 704L832 712L832 720M892 719L900 716L906 713L909 711L912 711L919 713M877 307L883 307L885 310L888 315L892 317L893 321M1291 800L1297 796L1303 799L1308 803L1315 805L1320 810M1611 479L1617 479L1622 479L1630 477M1018 336L1024 333L1030 334L1038 334L1039 328M1384 717L1390 720L1399 719M1116 739L1119 732L1118 729M1521 599L1524 598L1528 600M1376 737L1382 738L1388 732L1390 729L1394 725M913 622L916 626L917 632L920 636L922 641L922 650M1343 678L1348 679L1353 678M1042 714L1046 712L1053 708M1101 582L1102 577L1096 572L1089 575L1082 579L1074 582M1377 504L1384 502L1387 502L1391 500L1397 504L1405 503M1021 297L1026 298L1031 300M1357 391L1366 392L1374 391M1093 359L1100 362L1107 366M1358 504L1361 506L1365 506L1371 507L1371 502M1500 514L1507 513L1514 509L1517 506M1642 791L1646 790L1653 788L1655 784M1549 747L1548 741L1551 736L1558 732M1543 317L1545 309L1547 302L1550 299L1554 295L1561 293M876 287L882 284L884 277L888 270L892 267M1433 338L1436 333L1442 329L1446 323M1265 627L1271 629L1273 626M1534 810L1537 809L1541 810L1545 810M1619 429L1624 427L1627 421L1620 417L1613 417L1608 415M1133 493L1136 491L1142 492M1280 655L1285 647L1286 644L1282 640L1281 633L1279 627M1404 488L1409 485L1408 482L1413 477L1411 471M1308 451L1305 447L1306 439L1310 432L1309 428M1120 309L1123 313L1126 321L1129 325L1133 328L1137 335M1656 380L1655 375L1655 367M1437 502L1443 506L1448 512L1449 515L1450 523M1285 315L1292 311L1298 307L1294 303M1070 573L1073 571L1074 567L1077 563L1078 554M975 395L978 390L981 382L981 379M843 406L847 400L853 394L860 389L865 387M833 475L836 471L838 466M880 547L881 540L881 536L884 534L885 529M828 608L835 608L838 606L842 607M1297 476L1302 473L1308 470L1314 467M1504 729L1509 733L1515 737M1557 305L1560 299L1565 293M1201 711L1205 704L1211 699L1216 692L1220 688L1226 681M1017 738L1023 737L1025 729L1022 721L1020 719L1013 717M1242 464L1249 463L1255 459L1262 459L1269 454M849 736L850 729L853 722M1445 304L1448 303L1454 299L1458 296L1463 290M842 572L845 575L850 577L856 576M1139 493L1147 492L1152 487L1155 484M1511 591L1519 589L1528 588L1534 586L1542 588M857 508L856 502L853 497L847 492M1521 367L1518 359L1515 351M1556 356L1555 349L1556 343L1556 335L1558 331L1557 327M1109 663L1109 659L1108 653M1184 557L1188 557L1194 561M1092 464L1097 463L1104 459L1110 454M1282 664L1289 666L1296 666L1303 668L1306 670M1421 625L1427 625L1432 624L1440 625M1162 301L1161 297L1161 293L1155 287L1150 280M1430 492L1431 489L1433 485L1431 483M1637 331L1642 325L1643 320M1577 289L1582 282L1587 277L1590 275M1347 667L1353 662L1356 654L1355 650L1347 647L1342 653M902 554L905 553L905 558L903 563L908 568L912 574M1477 765L1482 762L1484 755M1488 327L1491 321L1492 314M979 386L979 382L979 376L981 373M1325 635L1334 634L1336 632M1531 518L1536 515L1542 511L1547 511L1552 514M1362 788L1367 788L1370 789L1370 793L1374 796M905 532L909 528L912 520L916 517M1615 439L1618 436L1622 429M967 403L971 401L974 400L979 402L983 400L986 398M1091 316L1093 310L1101 309L1105 308M1494 626L1497 626L1504 624L1510 623L1517 625M1537 639L1545 638L1552 637L1557 638M1616 551L1620 552L1625 551L1628 555M1002 375L1005 368L1009 367L1012 365L1009 358L1005 358M1591 525L1594 519L1593 515L1590 507L1586 503M978 506L983 508L990 508L995 510M1350 760L1356 763L1363 762L1368 762L1373 758L1378 759M1396 650L1401 643L1407 639M1406 807L1410 803L1410 799L1408 797M872 373L874 376L874 379M1301 343L1304 340L1311 340L1315 346L1317 350L1321 352M1576 396L1581 388L1582 385L1581 379L1586 374M1236 566L1240 561L1242 558L1244 551L1243 548M832 815L839 812L840 809L837 803L833 799L828 795M1497 695L1504 693L1508 690L1516 693L1519 697L1522 701M1477 422L1481 421L1485 424L1490 423L1495 419M1329 554L1330 550L1334 543M1308 518L1311 523L1312 531L1315 538M1489 403L1493 402L1498 399L1503 400L1512 402L1517 403M820 556L822 562L824 565L827 571M950 756L957 759L961 756M948 402L950 397L946 397L938 400L933 399M1183 362L1186 359L1181 355L1179 349L1174 342M924 376L929 373L932 372M1489 369L1489 366L1488 357L1488 353L1484 348M989 521L992 514L986 508M1593 333L1596 333L1602 331L1606 325M956 614L952 612L944 611L940 607L940 601M1370 465L1379 464L1383 461L1387 458L1393 463L1394 470M1074 694L1067 690L1065 684L1071 678L1067 673M840 516L846 518L851 521L858 525L861 526M1180 677L1182 675L1185 673L1191 668L1196 666M977 559L979 554L972 549L972 543L972 539M852 372L859 366L859 360L857 352L855 344M918 539L920 536L925 533L930 531L932 528M1229 438L1232 434L1234 431L1238 429L1244 427M1634 417L1638 415L1639 412M1289 290L1291 287L1294 285L1297 287M1369 800L1370 804L1375 809L1382 814L1385 817L1387 821M1424 752L1428 746L1428 742L1429 739L1429 736M1462 665L1466 659L1464 651L1462 646M827 424L836 423L842 420L847 419L853 422L856 418M893 715L895 709L899 704L906 704M846 514L848 517L851 513M1273 449L1276 440L1275 437L1277 431L1282 425L1282 419M890 425L892 421L895 413M958 288L962 283L968 282L976 285L980 290L982 294M1527 468L1529 464L1531 462L1536 458L1539 455M942 780L945 781L944 788M1238 455L1243 449L1245 445L1248 443L1257 442L1257 434M1439 458L1441 463L1442 472L1444 474L1441 480L1434 486M1030 742L1032 744L1040 744M1258 751L1262 748L1263 744L1265 739M1441 734L1444 735L1447 733L1452 732L1455 728L1459 722M1409 502L1412 503L1420 504L1428 507L1430 511L1433 514M1575 427L1579 425L1586 423L1588 424L1596 426M1317 623L1321 629L1320 633L1323 641M1414 521L1417 522L1418 527M1643 756L1645 750L1646 746M1589 406L1597 404L1601 402L1603 400M1471 823L1476 820L1482 821L1489 822M1495 689L1499 684L1501 680L1509 679L1512 676L1515 674M1269 721L1275 728L1277 732M814 367L820 365L826 367M1161 769L1166 768L1173 768L1180 765L1185 761L1191 759M1469 821L1468 824L1467 827L1462 832L1455 834L1449 840M933 672L940 677L943 674L947 672M926 500L931 498L934 496L936 488L931 484M1224 466L1228 470L1229 473L1232 474L1236 478L1243 482M1355 558L1358 559L1362 557L1369 564L1373 571M1321 512L1325 507L1329 499L1330 495L1333 488M1583 374L1582 370L1582 362L1580 357L1575 352M1459 703L1463 695L1468 689L1473 688L1478 690M1320 384L1321 380L1322 373L1320 365M1063 338L1071 340L1077 340L1083 341L1086 343L1085 346M1145 353L1150 349L1152 346L1157 341L1160 336L1164 333M1554 321L1557 318L1560 314M1022 341L1022 335L1026 333L1034 331M1184 538L1190 537L1194 536L1199 539L1206 544L1210 544M1552 516L1555 511L1560 505M877 813L882 814L889 813L893 810L897 806L901 806M1425 486L1429 485L1433 479L1437 475L1438 467L1436 462M1394 518L1397 514L1402 515L1409 512L1415 514M1174 635L1180 634L1184 635L1190 638M1457 629L1459 621L1456 617L1456 611L1464 607L1469 608M966 364L973 366L975 370L977 372L977 377L973 384M1603 493L1608 494L1615 492L1617 491L1625 487L1622 480M1623 330L1623 336L1622 342M1501 434L1504 439L1507 442L1513 448L1513 452M1032 548L1040 550L1044 551L1045 560L1039 566M1151 690L1155 684L1155 680L1161 675L1169 671L1173 671M1441 635L1445 627L1445 620L1442 616M1226 379L1230 378L1233 377M1496 644L1496 641L1493 635L1491 626M905 409L908 408L915 409L920 406L927 401M816 420L821 415L824 413L829 410M1575 563L1583 561L1587 555L1589 551L1590 544M1182 758L1185 754L1184 748L1187 740L1191 737M1252 653L1259 648L1265 642L1272 637L1274 631L1272 628M1028 649L1028 645L1027 641L1023 638L1016 633L1011 627M1341 752L1346 754L1354 752L1355 760L1354 765M1600 419L1604 421L1609 428L1610 432L1616 434M1054 380L1055 376L1057 371L1056 365L1053 358L1050 356M1592 698L1598 701L1602 702M816 338L818 345L821 353L821 361L824 367L824 371M1336 733L1334 725L1333 720M1175 353L1180 346L1183 345L1187 341L1194 337M1508 486L1515 488L1518 489M1254 447L1254 440L1253 434L1250 429L1244 422M802 401L805 399L808 398L814 396L814 390M851 583L851 580L852 572L853 569L858 562M1634 785L1632 777L1636 772L1642 767L1648 767M1656 790L1661 788L1667 788L1673 789L1679 787L1685 788M992 625L992 621L987 623L984 631M831 518L835 519L840 513L845 512M1408 799L1411 806L1412 811L1414 817L1420 820L1423 822M1424 722L1425 718L1429 714M1622 499L1624 495L1629 488L1632 484M1091 494L1093 497L1095 500L1096 503L1100 510L1104 511M1510 619L1514 621L1519 621L1525 619L1522 610L1523 604M987 408L994 410L1000 405L1002 403L1007 395M926 558L933 557L935 555M1216 358L1223 358L1229 361L1236 360L1240 356L1243 357M1578 326L1582 324L1589 321M1516 491L1523 489L1527 487M959 496L961 489L963 486L968 484L971 485M869 702L870 694L874 690L875 683M999 707L1005 711L1010 714L1015 721L1018 726L1026 726M1182 473L1184 467L1184 461L1184 456L1184 452L1182 447M1506 366L1510 368L1513 373L1516 378M1352 606L1357 601L1361 601M1065 510L1070 510L1074 508L1082 507L1088 508L1096 513M1636 477L1644 477L1649 481M1519 336L1522 334L1525 333L1534 336L1541 340L1548 343M1207 823L1211 817L1214 816L1220 819M866 380L868 377L871 373M956 391L961 397L964 400L967 406L968 410L974 416M1520 772L1524 773L1527 775L1534 778L1540 777M938 482L939 479L943 474M1597 697L1598 691L1600 688M837 492L840 490L844 490L847 488M1299 479L1300 476L1297 469M1370 668L1375 665L1380 661L1382 658L1387 656L1394 652M1347 342L1353 344L1356 342M1334 545L1334 542L1333 536L1331 533M885 442L894 444L898 442M845 741L850 738L852 733L852 725M1081 290L1083 284L1084 280M812 596L810 594L807 591L808 584M1198 670L1202 670L1207 667L1209 659L1208 655M956 792L960 790L968 787L972 782L974 778L973 772M1163 445L1166 446L1172 450L1175 454L1178 458L1179 462M1016 723L1021 720L1024 715L1023 712L1026 708L1033 708M1172 747L1179 749L1185 747L1189 746L1195 745M1075 815L1079 810L1084 804M1099 439L1101 447L1103 450L1106 451L1111 458L1114 462M838 484L839 480L847 481L852 480M832 604L839 606L842 605L845 606L850 609L855 615M1538 386L1541 380L1542 374L1544 367L1545 361M1600 335L1603 332L1605 329L1605 325L1605 320M1182 411L1186 405L1187 402M1330 776L1335 777L1338 779L1334 784M1256 645L1258 648L1262 654L1271 654M873 539L878 541L882 546L884 548L887 551M935 402L940 407L943 411L950 412L953 414M1280 703L1283 699L1285 695L1288 693M1432 430L1437 423L1433 417M1490 656L1490 649L1488 642L1484 638L1480 633M1372 815L1378 812L1382 810L1385 808L1392 803M965 669L972 668L975 668M996 752L1002 752L1008 754L1010 756L1011 760L1009 768M1071 578L1075 572L1079 572M1067 513L1071 512L1079 510M892 608L898 604L902 602L907 597L912 594M1531 574L1540 577L1543 580L1546 585L1549 590M933 352L940 349L948 350M1224 413L1223 409L1225 406L1229 404L1236 406M1165 714L1167 710L1171 706L1177 709L1184 711L1193 712M1302 598L1310 595L1312 594L1316 594L1323 597L1328 598M1199 417L1203 415L1202 411L1204 404L1206 396M1072 779L1076 774L1075 770L1076 765L1079 757L1079 753M1263 786L1270 786L1273 792L1276 800L1281 802L1289 804M1374 753L1374 745L1369 740M1603 386L1609 387L1611 390L1611 395L1613 398M1448 724L1450 720L1446 717L1441 717M902 759L911 757L916 760L921 756L928 758M1468 366L1470 363L1475 361M1410 733L1415 733L1420 729L1423 731L1430 732L1435 736M1195 319L1203 315L1208 310L1213 307M1401 505L1405 499L1408 496L1413 495L1422 496M1385 348L1391 347L1396 349L1401 344L1400 339L1399 334M1472 456L1475 455L1482 458L1486 457L1488 448M844 546L849 545L856 542L860 540M1621 721L1625 721L1630 722L1633 727L1636 732L1641 734M1616 312L1620 308L1620 300L1614 298M1089 318L1094 320L1097 320L1104 320L1112 316L1116 310M921 795L927 793L933 791L934 794M1531 409L1536 406L1538 401L1539 397M999 535L999 530L1002 523M1657 516L1663 509L1668 507L1671 502M1635 693L1634 689L1630 685L1631 681L1630 678L1629 671M1209 547L1209 540L1207 536L1204 536L1197 536M1539 767L1543 761L1551 759M1315 390L1318 387L1321 386M827 740L821 738L818 738L810 742L805 749L800 756M1154 595L1160 592L1163 592L1171 590M1146 670L1154 670L1163 668M1356 651L1357 645L1355 637L1356 629M1420 678L1422 675L1428 669L1431 666L1435 660L1440 656M1026 420L1031 413L1034 405M1615 759L1622 763L1626 768L1630 773L1632 776L1638 782M943 535L948 540L951 548L955 555L949 558M1599 452L1605 451L1608 449M1077 437L1076 445L1071 449M1465 751L1469 758L1468 763L1465 769L1460 774M1507 353L1507 348L1507 339M1151 606L1156 602L1164 603L1170 599L1173 598L1176 600M1098 494L1101 489L1107 491M1192 361L1195 355L1198 351L1204 347L1208 347L1214 342M1333 499L1333 491L1338 487L1343 491M1656 505L1659 502L1665 498L1672 494L1675 490M950 473L945 474L940 470M1550 515L1558 517L1561 516L1568 512L1570 505L1572 497M1352 647L1349 643L1349 640L1353 638L1355 632L1362 628M1494 801L1497 797L1496 792L1496 789M1190 731L1191 726L1192 722M1538 793L1546 795L1547 787L1546 784L1544 779M859 478L858 473L858 470L859 463L858 457M1026 571L1031 570L1032 565L1029 560L1026 559L1019 556M915 334L920 334L923 330M1464 652L1468 648L1468 645L1471 639L1472 635L1475 630M826 341L830 345L831 352M1198 736L1202 730L1203 728L1209 723L1215 723L1217 730M1602 727L1605 730L1608 737L1614 740M1124 361L1129 354L1134 349L1134 344L1137 340M982 438L987 434L992 434L999 432L1004 429M1454 356L1457 359L1463 362M1162 734L1161 727L1158 722L1154 720L1153 718L1145 715M1162 571L1168 568L1174 564M1365 757L1368 757L1372 755M1373 360L1376 352L1375 344L1370 339M921 507L928 503L933 502L939 502L944 497L948 497M1159 360L1164 355L1166 349L1168 346M1426 341L1429 338L1435 334L1438 331L1441 326M1582 442L1586 442L1592 447L1600 450L1606 450L1612 451M1483 768L1479 762L1474 758L1466 758L1461 761M958 462L964 461L971 457L975 456L980 460M1204 301L1211 304L1215 303L1220 299L1227 299L1229 302M1185 375L1188 369L1193 363L1194 360L1197 355M1187 441L1193 443L1200 444L1202 448L1206 454L1209 460M965 461L971 458L978 463M1602 810L1608 806L1611 804L1614 796L1617 793L1620 785M1402 702L1404 707L1398 710L1394 715L1393 720M1232 442L1235 448L1238 451L1244 455L1249 458M902 421L904 418L910 414L918 414L922 414L926 415M1569 339L1574 337L1578 332L1580 329L1576 323M1309 614L1315 611L1320 605L1325 601L1330 601M1373 545L1379 540L1382 533L1381 528L1377 526L1369 524M1348 741L1349 736L1348 731L1350 727L1355 726M1582 404L1588 400L1591 393M1395 721L1403 718L1407 714L1405 706L1401 699L1400 694M1308 591L1311 589L1312 585L1310 581L1306 574M1380 601L1384 601L1388 602L1393 604L1394 608M1652 345L1656 346L1660 349L1665 346L1670 345M1309 505L1314 500L1313 491L1313 486L1317 481M1391 380L1392 383L1391 389L1385 390L1381 392M1132 536L1136 534L1144 530L1151 530L1153 532M1321 642L1326 637L1330 630M906 593L909 598L913 595L915 594L920 587L924 586M1312 674L1307 667L1305 661L1301 660L1294 658M1112 365L1117 363L1123 358L1127 353L1133 352M1010 516L1014 517L1018 525L1020 528L1018 537M807 632L814 632L820 633L825 634M1634 770L1636 767L1632 760L1628 758L1623 755L1618 754M904 768L907 771L908 775L909 782L911 785L916 784M1249 634L1253 630L1254 622M1349 797L1354 793L1357 789M1299 751L1301 748L1300 742L1298 735M1643 353L1649 357L1658 357M1628 410L1631 408L1635 406M1154 389L1153 384L1155 378L1152 375L1149 370L1146 363M991 566L992 559L993 553L998 546M1413 767L1417 761L1419 756L1416 753L1413 748M1599 583L1603 584L1611 586M1289 607L1294 607L1299 606M1163 675L1166 682L1171 686L1176 691M1439 678L1443 672L1447 670L1448 667L1448 659M1640 585L1645 582L1652 577L1653 572L1658 565L1659 556M1165 394L1169 394L1175 393L1179 391L1187 387L1190 385M956 777L959 785L965 791L966 794L972 797L971 800M1287 337L1294 332L1300 333L1305 333L1308 335M1655 374L1659 370L1659 362M947 710L953 712L959 712M1497 761L1497 756L1493 749L1489 747L1483 742M805 344L809 346L814 348L819 351L827 353M813 798L818 794L822 793L825 789L826 786L830 783M1508 320L1512 318L1516 310M929 334L931 330L931 322M1168 394L1172 397L1171 401L1178 406L1182 403L1188 399M1235 340L1239 336L1240 331L1235 328M1153 492L1160 488L1164 486L1166 484L1170 477M991 799L991 794L990 787L988 779M1566 502L1571 497L1575 493L1583 496M1611 532L1610 523L1612 519L1611 511L1610 508L1604 501M1253 793L1256 798L1264 798L1267 799L1266 808L1270 813M802 692L802 687L801 682L798 679L794 679M931 396L935 395L939 390L937 385L934 382M1124 620L1131 615L1133 608L1133 602L1128 594L1125 591M1584 630L1586 633L1589 637M896 561L901 567L902 575L902 578M900 429L904 428L911 424M1117 487L1118 480L1121 474M1240 757L1244 751L1247 746L1252 744L1256 742L1260 739M1651 362L1654 356L1659 353L1655 348L1654 343M909 599L911 596L916 592L921 590M846 376L849 373L858 375L863 379L867 384L874 390M1433 736L1440 734L1448 736L1451 738L1457 743M1166 392L1169 386L1170 383L1169 378L1166 372M1496 783L1500 782L1499 786M1650 708L1652 705L1655 703M875 373L880 373L883 371L890 369M864 640L871 640L874 638M965 725L971 730L973 732L979 731M1313 490L1310 496L1309 504L1311 507L1312 511L1313 519M891 318L893 313L899 310L901 306M929 343L938 346L945 349L952 352L960 349L964 346M977 736L982 732L985 728L986 724M1396 466L1399 465L1404 466L1409 467M1586 548L1590 545L1596 544L1599 542L1606 539L1609 537M1005 645L1004 638L1000 637M1511 637L1519 639L1522 640L1526 646M1525 809L1533 809L1539 811L1541 813L1543 816M1240 384L1244 383L1252 382L1254 387M963 482L968 477L972 475M1021 672L1028 669L1032 666L1038 662L1043 665L1049 667M1277 441L1281 438L1286 436L1291 441L1291 444M1098 791L1103 789L1109 784L1111 777L1111 770M1289 311L1293 309L1292 302L1296 298M1498 702L1502 699L1508 702M1002 361L1011 360L1017 364L1024 366L1027 365M1115 548L1123 548L1127 553L1131 559M985 294L990 301L995 306L1000 307L1004 310L1009 310M1532 487L1534 480L1538 474L1537 466L1534 464L1528 458M1187 427L1192 424L1198 421L1203 418L1207 417M1308 295L1315 299L1317 302L1323 299L1327 291M1485 672L1490 673L1498 669L1499 664M1400 364L1408 364L1415 363L1420 363M868 748L873 751L877 756L884 757M1548 300L1556 298L1565 294L1567 286M1484 452L1485 447L1485 444L1484 440L1478 440M943 720L951 718L955 724L961 729L964 730M855 383L861 380L865 380L870 380M920 356L922 352L920 347L922 344L924 339M847 354L851 352L854 350L858 352L862 352M1194 331L1202 330L1206 327M1224 706L1223 701L1230 696L1230 692L1231 688M1605 631L1609 625L1614 625M1138 719L1138 726L1138 732L1139 740L1138 748M1445 717L1449 725L1452 730L1454 734M1554 462L1555 459L1555 454L1561 447L1564 440L1566 433M1146 810L1149 808L1152 807L1160 807L1165 807L1174 808M820 579L822 578L828 577L832 584M1477 360L1480 352L1480 346M1614 452L1616 455L1617 463M1022 529L1022 524L1031 524L1035 522L1036 517L1034 514M1489 691L1494 690L1496 687L1497 682L1496 677L1497 673M1107 768L1112 764L1111 759L1111 754M1033 800L1033 793L1033 788L1035 784L1036 781L1035 773M1577 610L1577 606L1581 604L1584 601L1586 596L1586 592M994 679L1000 676L1003 674M1502 557L1506 553L1512 547L1517 542L1520 533L1521 530M1197 537L1205 536L1208 535L1212 536M1193 775L1195 772L1201 776L1206 776L1213 773L1218 768M1001 545L1005 544L1010 540L1015 541M1415 587L1418 590L1423 592L1430 594M1455 807L1459 810L1465 809L1471 805L1478 807M1269 324L1273 318L1276 311L1277 307M1358 658L1355 651L1356 646L1356 641M1184 527L1187 524L1195 525L1200 524L1205 518M1458 298L1462 296L1468 291M882 516L891 518L892 521L899 521L904 520M1038 805L1044 806L1048 804L1056 801L1062 798M1170 621L1171 614L1168 605L1174 600L1174 594M1645 337L1650 334L1649 325L1654 321M1292 719L1300 716L1303 711L1303 707L1301 703M882 481L891 482L895 484M1608 677L1607 670L1606 662L1603 653L1602 650M1377 722L1380 719L1387 718M808 742L814 736L820 735L827 734L834 733L840 728M1467 296L1472 297L1477 299L1485 299L1485 304L1486 307M857 774L863 781L866 788L868 791M1205 733L1208 731L1217 728L1220 722L1220 717M1294 647L1296 650L1294 655L1292 659L1286 664L1281 670M1064 486L1069 483L1075 479L1078 474L1080 471L1076 466M1177 594L1179 586L1181 578L1185 574M1158 407L1161 405L1164 401M1423 588L1428 586L1425 580L1426 576L1428 570L1425 562M837 516L845 513L854 514M1440 621L1447 618L1455 616L1458 618L1458 626M1377 308L1375 302L1374 297L1371 294M1508 746L1514 752L1522 754L1526 756L1530 758M1015 397L1021 395L1028 393L1026 387M937 464L934 455L938 450L942 447L947 444L952 444M959 524L957 522L954 520L946 523L944 528M1643 290L1647 293L1653 294L1661 293L1663 290M847 728L847 720L854 721L858 723M877 623L882 625L885 624L893 628L897 628M1337 287L1341 284L1347 281M1453 705L1457 702L1461 700L1466 695L1469 691L1473 689M1340 337L1345 331L1345 326L1347 319M1524 655L1528 653L1531 647L1529 644L1525 640L1523 636M1192 582L1195 584L1199 586L1200 590M1135 785L1139 788L1144 790L1148 790L1156 786L1159 781M1078 693L1085 691L1093 694M1476 598L1479 600L1481 608L1483 616M1378 366L1380 361L1386 356L1389 354M1480 783L1480 779L1477 774L1476 771L1476 765M834 575L830 567L826 561L818 561M1129 484L1123 478L1125 470M1091 434L1096 434L1101 435L1104 433L1110 428L1112 426M1107 728L1114 732L1117 740M1529 802L1535 801L1540 797L1549 797M1525 768L1532 766L1537 766L1541 767L1544 761L1548 759M1232 741L1236 741L1244 739L1251 736M1070 573L1072 566L1070 563L1068 558L1061 560L1056 561M1516 628L1523 624L1526 622L1531 614M950 720L952 712L949 707L947 704M1266 540L1268 536L1269 532L1270 527M1401 627L1409 631L1413 634L1419 633L1425 628M1066 614L1069 607L1072 600L1078 600L1083 601M1609 804L1615 800L1621 801L1629 801M1435 409L1439 410L1445 406L1448 398M1291 474L1293 469L1294 461L1298 459L1303 456L1303 453M1064 439L1064 430L1065 427L1067 422L1069 415L1077 416M875 298L879 298L884 301L888 298L885 291M1475 390L1480 389L1485 389M1076 345L1078 341L1072 334L1068 333L1063 331L1057 333M1581 502L1584 503L1583 510L1589 515M1431 611L1431 603L1436 599L1444 596L1447 593L1451 591M1088 593L1093 590L1099 596M1073 367L1076 364L1080 363M898 637L900 641L900 647M857 412L863 412L872 413L876 417M906 770L906 766L902 760L903 756M1610 374L1608 381L1609 386L1611 392L1613 394L1609 398M1333 536L1331 529L1330 524L1334 517L1339 515M1646 594L1649 589L1654 583M1398 613L1402 605L1403 599L1402 593L1398 591M988 560L988 556L991 548L991 541M1248 623L1247 617L1244 616L1240 613L1239 605M1655 602L1657 598L1651 592L1648 589L1643 585M1485 653L1493 650L1491 643L1491 638L1497 632M1637 524L1633 531L1637 538L1642 540L1649 542L1657 545M1208 332L1209 328L1213 320L1209 313L1208 310M1466 651L1471 650L1478 650L1483 651M924 401L930 400L937 405L940 406L945 410M1309 669L1314 675L1316 684M1269 449L1273 443L1277 443M1043 784L1048 780L1056 780M1194 308L1199 311L1197 317L1190 322L1182 320M1581 742L1583 739L1583 734L1586 730L1593 725L1597 724M943 589L943 584L940 576L938 570L937 564L937 558M1274 800L1282 801L1289 801L1290 809L1293 815L1298 820M1182 639L1185 639L1192 635L1196 630L1195 622M898 675L906 674L907 667L908 662L909 659L904 656M968 497L967 490L965 482L963 479L956 483M1133 681L1139 675L1136 672L1130 667M1234 700L1233 696L1232 691L1224 690M1116 413L1121 411L1124 412L1133 413M1523 804L1527 796L1530 789L1533 783L1528 780M956 533L959 525L958 517L960 509M1268 517L1275 513L1278 510L1285 505L1289 498M1257 678L1260 676L1266 675M986 730L990 724L995 717L994 711L995 706L998 705M1027 719L1032 714L1038 713L1044 708M1216 579L1221 579L1230 581L1234 584L1237 584M1075 500L1081 501L1088 500L1097 501L1099 504M910 633L905 627L904 623L898 618M1075 404L1078 398L1076 392L1076 386L1077 380L1078 374M1091 354L1095 354L1103 351M1395 572L1399 571L1406 570M1633 640L1636 644L1644 644L1649 646L1654 648M1165 435L1168 433L1168 429L1169 425M890 423L889 419L886 413L881 411L878 410M1642 411L1650 407L1644 404L1639 398L1634 397M1658 495L1664 492L1670 495M1073 390L1078 383L1084 379L1086 374L1088 369M1592 616L1596 613L1595 609L1595 600L1595 597L1595 592M1229 518L1235 522L1234 525L1228 528L1221 533L1216 538M1116 379L1115 374L1118 370L1123 367L1126 364L1130 358M1638 491L1642 484L1646 481M1304 534L1299 531L1295 530L1289 529L1285 531M1593 738L1595 742L1592 748L1586 754M1421 349L1424 342L1425 339L1427 334M1428 543L1430 537L1431 533M1528 681L1526 677L1523 669M895 552L896 548L895 544L892 539L888 533M1244 484L1250 487L1253 486L1260 484M1579 583L1583 582L1587 579L1593 579M931 512L935 510L940 504L939 496L936 493M1152 476L1160 478L1165 483M1333 480L1339 478L1345 473L1352 472L1357 468L1358 463M1352 662L1356 664L1359 669L1358 675L1355 677L1349 683M1305 522L1306 516L1306 511L1307 502M1183 548L1189 546L1193 541L1195 536L1194 533L1189 531M1429 656L1436 659L1441 664M1036 739L1040 738L1045 733L1049 735L1058 733L1065 732M1196 503L1198 497L1198 494M1227 589L1234 586L1240 586M1642 721L1648 720L1651 713M1212 496L1212 487L1210 479L1209 473L1206 466L1204 464M1205 556L1213 553L1220 554L1224 560L1225 568L1225 574M1559 537L1562 534L1566 533L1572 535L1578 536L1587 536M1023 376L1027 373L1036 371L1039 372L1043 373L1045 369M929 445L933 444L940 445M1403 674L1408 669L1406 662M958 482L959 478L960 473M1616 696L1616 689L1615 685L1615 681L1612 678M1519 727L1520 733L1521 739L1524 742L1527 751M924 701L929 700L937 698L940 693M1540 334L1544 332L1548 332L1554 337M1172 395L1177 393L1183 388L1190 386M1109 388L1117 384L1121 378M1301 607L1293 603L1289 603L1280 603L1281 606M1149 656L1157 654L1160 654L1165 655M1527 674L1532 669L1535 669L1533 661L1533 655L1535 649M1077 416L1083 410L1078 407L1076 406L1071 409L1065 411M1368 399L1373 396L1377 391L1379 385L1381 383L1383 380M1424 651L1426 647L1427 644M1407 653L1413 652L1416 654L1424 651M1108 617L1111 612L1112 607M1246 825L1252 824L1256 824L1262 826M1091 308L1092 315L1092 322L1094 325L1093 334L1090 338M1210 776L1215 779L1223 777M1515 430L1518 431L1527 428L1534 426L1542 423L1548 419M1381 776L1377 770L1373 771L1367 773L1362 777L1357 783M1596 362L1600 359L1607 357L1611 352M1380 773L1386 776L1385 780L1386 787M1529 436L1532 435L1539 434M879 457L881 451L879 442L881 434L883 426M1389 724L1393 717L1397 714L1396 709M1342 294L1348 298L1347 305M1342 823L1345 820L1347 817L1354 814L1362 816M1227 306L1227 298L1225 293M1312 794L1309 793L1306 792L1302 788L1296 790L1293 796M1367 406L1369 400L1372 401L1381 402M960 757L967 753L971 753L975 754L976 761M1466 394L1474 394L1481 393L1486 392L1488 387M1427 674L1426 668L1426 663L1430 656L1432 648M847 495L854 496L859 501L857 506L858 513L861 520M1097 697L1095 692L1098 686M1622 680L1622 676L1624 671M1489 567L1492 563L1489 556M1613 754L1618 752L1622 759L1624 764M1426 544L1427 537L1433 538M1262 406L1269 410L1271 418L1272 425L1277 425M1389 549L1393 549L1397 547L1403 544L1403 540M974 709L974 703L974 697M1375 486L1380 482L1383 477M1457 590L1461 588L1462 581L1465 579L1472 579L1476 582M1178 471L1184 467L1190 467L1193 469L1196 467L1196 464M1223 707L1229 702L1230 694L1233 690L1237 684M1551 372L1556 370L1559 368L1564 370L1569 373M1497 712L1497 708L1498 700L1493 694L1492 690M1318 497L1320 491L1321 487M1160 419L1166 418L1172 416M1574 666L1576 663L1577 658L1571 654L1563 655M1305 413L1307 409L1308 403L1305 397M1258 670L1260 666L1262 663M918 324L925 321L929 326L933 330L936 333L942 339M1380 352L1383 347L1387 344L1389 337L1394 331L1402 330M1270 753L1274 747L1277 747L1281 751L1281 756L1278 762M1627 714L1628 721L1633 723L1637 726M1486 496L1493 494L1500 491L1506 489L1512 490L1518 495M1047 544L1050 543L1052 541M1641 485L1648 489L1651 497M1026 651L1028 647L1028 642L1032 640L1036 634M1204 527L1207 521L1209 516L1211 511M1474 589L1470 582L1469 578L1466 571L1464 568L1462 559M1101 807L1104 798L1107 791L1107 783M1088 658L1093 661L1095 663M1494 573L1499 572L1501 568L1499 563L1498 560M1490 684L1496 687L1498 682L1505 679M925 293L932 289L941 289L945 295M1480 739L1483 739L1490 744M1377 821L1378 817L1378 811L1375 807L1370 800M1578 734L1582 732L1588 727L1588 724L1590 717M1447 401L1453 402L1459 405M1097 550L1103 555L1108 559L1113 558L1121 560L1126 561M1207 456L1215 457L1222 457L1226 456M1398 437L1402 431L1411 429L1410 422L1414 415M1477 405L1485 404L1491 401M1461 718L1466 720L1471 721M1321 629L1324 634L1325 641L1326 648L1327 651L1332 658M1076 360L1084 359L1092 359L1096 357L1104 359L1108 361M1354 308L1354 300L1356 297L1356 293M879 642L876 635L873 631L872 627L870 622M925 633L929 632L935 631L938 630M1328 311L1328 315L1328 321L1323 323M1129 544L1134 540L1137 533M1118 448L1126 447L1134 447L1138 447L1144 445L1152 442M1627 808L1625 804L1625 799L1620 792L1621 785M1117 637L1123 633L1127 628M1373 342L1376 341L1382 344L1389 349M871 320L874 319L880 316L881 311M919 557L922 557L927 558L930 559L934 565M840 757L845 757L851 755L854 755L858 757M1313 572L1318 570L1322 567L1326 564M1257 326L1265 326L1267 323L1274 320L1281 317M1202 562L1206 555L1204 553M1088 292L1093 291L1097 289L1101 283L1109 281L1113 280M861 783L868 784L870 782M822 451L823 444L824 438L829 431M1384 541L1381 535L1381 527L1378 523M889 382L891 386L894 393L895 398L903 398L905 391M1004 751L1003 754L999 762L999 767M879 442L883 437L890 435L895 438L901 441L905 446M1412 420L1417 421L1417 429L1415 436L1412 442L1410 450M1351 729L1343 724L1337 725L1334 725L1325 725M1102 439L1105 441L1108 448L1113 454L1120 457M1318 438L1321 430L1323 425L1324 419L1324 416L1319 409M1602 399L1606 396L1611 393L1616 393L1622 393M989 732L992 729L995 724L996 716L998 711L998 704M1295 450L1299 453L1304 449M1555 411L1557 413L1561 414L1564 418M1247 802L1249 796L1246 790M926 531L934 531L939 532L943 534L949 529M1444 820L1450 816L1454 812M1048 476L1052 473L1054 465L1052 460M1438 613L1446 610L1454 610M1543 741L1549 737L1554 734L1560 727L1559 720M1466 448L1466 440L1465 433L1465 428L1467 420L1472 418M812 610L818 611L825 606M1552 706L1555 704L1560 705L1565 704M1453 303L1457 309L1458 318M814 740L823 741L828 746L831 748L835 751L841 755M1290 564L1292 557L1294 552L1294 547M1348 638L1354 637L1358 635L1362 631L1370 631M1344 575L1346 570L1348 567L1349 563M1403 794L1406 793L1411 799L1415 802L1417 806M995 664L1000 660L1001 657L1004 649M1397 802L1400 797L1402 793L1402 789L1402 786L1407 782M836 727L841 728L844 730L847 737L851 741L859 746M1214 749L1216 752L1224 751L1233 749L1238 751L1241 751M1026 794L1029 793L1034 790L1037 792L1041 796M1625 520L1625 517L1629 510M875 501L879 503L888 505L890 509L884 516L882 518M1638 631L1642 632L1647 631M1551 821L1555 818L1558 817L1567 819M1428 518L1430 521L1437 517L1441 515L1445 511L1443 504M1395 536L1402 535L1404 533M1115 639L1117 633L1113 627L1104 624L1098 624M1230 298L1228 290L1227 281L1228 277M1249 410L1252 407L1255 406L1261 401L1263 399M1317 547L1321 550L1330 551L1337 550M1572 414L1576 415L1579 419M1466 779L1468 777L1469 774L1469 770L1468 763M890 645L893 652L899 658L907 657L911 661L915 664M1454 420L1459 415L1461 412L1465 409M1494 483L1492 475L1488 467L1486 464L1484 456L1477 455M1184 587L1189 587L1191 586L1194 583L1201 578L1205 578M1638 645L1645 650L1647 654M985 406L989 405L995 409L996 414L1000 416M1429 292L1436 294L1438 297M1229 369L1231 366L1233 364L1235 357L1237 352M1148 592L1156 591L1162 589L1170 591M1562 674L1570 673L1574 669L1579 665L1582 665M1139 530L1144 527L1149 522L1156 521L1160 515L1162 511M1523 413L1532 414L1530 406L1531 400L1533 395L1536 391M1270 695L1274 692L1279 692L1286 697L1291 700M985 796L992 793L996 791L1001 791L1009 793M1621 632L1624 630L1631 627L1634 622L1639 617L1646 613M1123 581L1128 577L1133 572L1137 568M1385 483L1383 480L1381 474L1380 471L1379 463M1391 373L1396 380L1400 383L1407 389L1410 389L1414 386M806 612L809 610L811 606L818 602L819 598L822 593M1007 363L1011 361L1007 354L1005 350M986 548L990 548L993 546M1500 614L1505 614L1513 611L1517 609M989 384L993 378L995 373L995 364M1504 362L1503 355L1502 349L1505 345L1510 343M1513 537L1513 532L1512 528M1588 466L1592 469L1597 472L1605 475M1148 448L1153 447L1158 449L1162 454L1166 461M897 492L905 492L907 486L910 479L916 482L925 480M1194 471L1197 473L1205 476L1214 476L1220 477L1226 479M844 315L844 312L842 306M1565 638L1564 631L1562 628L1554 624L1550 620M1356 682L1357 678L1360 675L1363 674L1369 676L1373 684M1224 691L1227 688L1231 688M1530 525L1530 521L1531 517L1530 513M1235 731L1241 730L1245 731M1189 585L1195 587L1199 591L1199 594L1201 600L1205 603M1467 631L1470 627L1477 627M1184 820L1191 821L1195 825L1201 826M994 385L991 376L994 375L1002 375M1532 738L1533 732L1533 729L1535 724M1080 327L1085 329L1091 334L1097 337M1569 777L1573 778L1577 785M1295 815L1299 812L1300 808M1120 393L1120 390L1124 385L1128 384M1321 345L1326 343L1330 344L1335 347L1332 354L1332 359M1406 775L1406 767L1405 763M983 471L986 468L985 465L986 461L986 457M1603 659L1610 658L1612 663L1613 667L1619 671M1059 534L1064 534L1070 533L1074 532L1080 534L1081 542M1629 604L1634 608L1641 602L1649 598M1417 569L1420 566L1428 566L1433 568L1440 564L1446 561M947 693L950 688L954 683L962 679L963 675L958 674M1414 540L1423 539L1427 531L1429 524M1603 464L1608 460L1614 457L1619 451L1627 447M1006 442L1013 438L1014 433M1440 681L1446 686L1450 692L1455 696M1411 396L1414 395L1417 396L1421 398L1425 402M1408 451L1412 452L1413 455L1418 457M952 710L956 705L957 701M840 797L841 790L845 784L850 781L850 773M1381 694L1385 687L1389 680L1391 675L1392 672M819 580L824 580L829 579M998 288L1003 288L1007 284L1010 285M1203 339L1205 332L1207 328L1203 323M1638 404L1643 407L1645 410L1645 415L1639 418L1632 419M1535 561L1538 558L1545 555L1546 549M1303 338L1309 340L1315 346M1015 480L1013 475L1011 473L1005 471L999 468L992 468M877 509L880 507L885 506M1122 662L1127 656L1129 648L1131 645L1129 639L1126 635M1447 297L1449 290L1449 285M1290 599L1293 598L1299 596L1307 595L1310 593M1419 707L1421 703L1427 702L1431 696L1438 694M1599 612L1601 615L1603 619L1606 620L1610 622M1148 544L1153 541L1153 538M838 660L842 655L850 652L858 652L862 652L870 654M1613 534L1620 532L1622 528L1626 521L1627 514L1628 510M1144 419L1146 412L1147 406M1578 451L1579 446L1579 442L1577 440L1571 439M1320 498L1324 497L1330 494L1333 493L1341 497M1432 312L1437 310L1442 309L1449 304M1049 568L1055 564L1061 566M1304 445L1308 446L1310 454L1312 461M1468 682L1474 679L1478 680L1482 677M1531 629L1539 625L1545 618M1651 348L1655 344L1657 339M1232 671L1234 664L1237 655L1235 651L1234 647L1231 640M1174 437L1172 443L1170 445L1166 450L1158 452L1151 455M981 663L982 655L984 653L984 647L988 645L996 645M1203 338L1210 340L1215 342M1364 518L1370 515L1372 512L1373 508L1373 502L1374 496M1510 500L1512 497L1514 491L1513 488M1216 547L1224 547L1230 547L1235 544L1237 541L1245 543M1431 534L1440 532L1441 540L1440 545L1435 547M1317 611L1321 608L1325 607M940 700L946 701L951 706M1615 810L1611 807L1607 808M905 774L914 774L920 774L929 774L932 773M1487 790L1490 781L1493 776L1491 769L1488 767L1486 763M1592 666L1595 661L1597 658L1600 653M1154 374L1157 369L1153 363L1149 359L1147 352L1142 346M1007 675L1011 670L1019 671L1026 668M1158 310L1166 309L1170 314L1176 318L1179 317M1214 629L1215 621L1214 617M1629 480L1624 475L1619 468L1616 469L1608 468M1633 329L1640 329L1648 330M1660 753L1665 747L1668 742L1668 733L1669 729M1083 379L1085 373L1087 369L1087 362L1087 358L1086 350M1213 295L1217 288L1219 280L1221 275M1075 691L1075 686L1075 681L1074 673L1077 668L1082 668M1223 432L1227 428L1231 427L1240 428L1245 425L1251 419M1453 761L1451 753L1446 749M938 794L946 798L950 799L958 794M894 615L897 612L901 605L909 602M1082 322L1076 317L1071 312L1068 310L1062 310M1577 417L1583 419L1587 418L1588 422L1587 426L1588 432M1173 422L1176 420L1180 424L1183 425L1188 424L1193 418M1641 320L1641 314L1640 308L1638 305L1634 300L1636 296M1421 820L1430 822L1434 818L1435 815L1436 810L1438 806M1122 548L1122 541L1125 538L1129 532L1130 525L1131 522M1378 325L1375 318L1371 323L1368 328M1038 786L1041 785L1048 785L1053 783L1062 782M1173 589L1174 583L1173 576L1171 571M1376 639L1380 640L1384 645L1384 649L1384 655L1384 661M1591 385L1596 383L1602 383L1609 386L1611 392L1616 397M970 331L972 334L975 332L978 328L983 323L984 326M1336 543L1338 539L1340 535L1340 531L1341 527L1343 520M1169 319L1172 317L1177 315M1357 407L1360 399L1359 395L1351 397L1348 395M1639 335L1637 331L1637 325L1640 323M902 393L909 393L916 389L920 384M927 363L930 365L931 370L934 374M1284 454L1289 448L1293 446L1295 441M1355 624L1362 623L1368 625L1365 616L1361 610M1309 387L1316 390L1321 394L1324 401L1325 408L1326 410M949 590L951 587L952 583L947 577M1630 477L1634 482L1635 487L1634 491L1634 495L1640 496M1512 539L1520 538L1524 534L1527 526L1528 520M1205 519L1209 518L1215 516L1217 512L1218 507M1384 740L1393 741L1396 738L1401 734L1402 730L1405 727M1632 327L1640 325L1644 322M1607 684L1610 679L1609 674L1610 666L1610 662L1607 654M1358 581L1363 584L1367 584M816 538L824 540L830 543L833 541L836 538L844 536M1140 729L1147 729L1154 727M1391 799L1392 796L1391 788M909 444L912 440L915 438L920 435M1238 754L1239 750L1243 748M1152 799L1158 795L1163 791L1167 792M1455 439L1460 436L1460 432L1459 425L1456 419L1450 418M1319 313L1328 315L1330 321M970 733L971 729L976 726M1494 510L1496 502L1493 495L1494 491L1496 483L1494 475M1194 715L1193 711L1192 707M950 325L951 319L952 315L954 311L953 308M824 301L827 300L834 296L837 291L843 288M1113 667L1117 666L1114 659L1115 654L1119 653L1121 648M1657 475L1663 478L1669 476L1673 474L1675 468M1569 412L1573 412L1572 417L1576 424L1580 431M1051 813L1055 815L1060 817L1066 819L1069 817L1073 812M1530 631L1533 628L1535 624L1538 620L1543 620M824 590L827 585L830 584M1052 604L1057 607L1059 609L1066 607L1068 604L1072 603M1182 714L1188 712L1196 709L1200 711M1473 633L1482 633L1485 633L1489 633L1496 630M1049 331L1056 332L1059 332L1063 334M1187 519L1189 517L1190 508L1191 505M1103 789L1111 791L1114 799L1113 807M830 507L836 507L839 500M954 527L956 522L957 514M829 668L830 672L832 676M866 593L872 591L877 587L883 589M1564 635L1563 631L1562 627L1560 622L1560 616L1554 612M1137 625L1132 622L1130 614L1127 609L1125 602M1119 380L1120 383L1127 386L1130 392L1128 397M1225 563L1231 559L1238 560M855 338L853 334L857 330M890 524L896 521L901 523L902 528L903 535M1109 328L1108 321L1107 315M833 606L835 599L838 595L842 592M890 464L892 457L897 450L898 447L902 440L903 434M1657 622L1663 622L1667 616L1672 612" fill="none" stroke="#45524c" stroke-width="0.7" opacity="0.5"/>
<path d="M1078 366L1082 363L1084 360M860 334L859 331L854 326L853 320L853 317L853 312M1265 593L1267 590L1268 587L1266 580M1311 598L1313 592L1319 589L1326 588L1334 589M1375 297L1375 292L1374 288L1372 284L1364 279L1360 275M1619 653L1618 647L1619 642L1622 639L1625 637L1632 636M1616 616L1624 614L1628 612M1084 405L1089 400L1088 395L1086 389M1040 425L1042 430L1050 435L1054 438L1056 442M1086 717L1091 715L1094 712L1103 713L1109 714L1115 711M1606 369L1608 367L1608 363L1614 360M1552 300L1555 304L1554 308L1549 311M1611 739L1616 738L1622 735L1627 734L1631 734L1632 727M1018 359L1019 354L1025 353M1171 563L1175 560L1180 557L1180 552L1182 547M1054 804L1056 813L1056 816L1057 824M1257 396L1260 401L1260 404L1257 407L1251 411L1253 414M1520 293L1519 298L1517 303L1511 305L1504 308M959 430L968 431L974 432L974 437L971 440M1232 394L1236 392L1241 388M1387 659L1394 657L1400 651L1403 649M1257 417L1265 418L1269 413M803 551L807 546L811 544L816 543M1143 793L1147 791L1147 787L1150 786L1158 781M1343 778L1350 779L1355 781L1363 781M1597 354L1600 349L1606 345L1610 340L1615 336L1622 336M1075 484L1083 483L1087 479L1089 473M1193 583L1198 587L1201 589L1204 583M1176 697L1181 698L1186 699L1191 699M1625 633L1630 630L1631 627L1634 625M1561 634L1569 635L1573 638L1577 641L1581 647L1577 654M1065 719L1065 716L1065 707M1201 704L1207 699L1211 694L1213 693L1219 688M1184 411L1190 413L1196 412L1204 413L1206 408L1209 404M1178 385L1181 387L1186 387L1190 391M1114 702L1120 701L1128 705L1131 709M925 438L923 433L921 426M1520 308L1517 305L1514 303L1506 304L1505 311L1507 319M1207 590L1206 585L1205 581M1469 635L1473 630L1478 628L1484 630L1489 632M1070 674L1074 679L1078 686L1081 692L1083 699L1083 707M1497 714L1497 711L1496 706L1491 699M1501 363L1499 356L1497 350L1498 346M1347 435L1351 434L1356 430L1360 423L1356 418M1654 625L1654 618L1656 613L1658 609L1660 606L1666 602M1067 807L1072 802L1075 798L1075 791L1075 788M1327 310L1330 311L1334 314L1335 321L1338 324M1605 417L1610 413L1616 409L1620 409M1347 652L1351 654L1355 654L1360 657L1359 665M937 779L942 780L941 788L945 795M1455 393L1463 389L1464 384M975 303L982 306L989 308M1209 440L1209 435L1205 428M986 751L993 751L997 755M1445 314L1453 310L1460 312L1466 312M1501 792L1507 791L1515 788M882 786L885 782L886 777M1078 535L1080 532L1084 528L1086 524M1405 741L1412 740L1418 738L1427 739M1621 822L1625 826L1630 833L1636 833M1055 297L1057 291L1064 286L1065 280L1063 275M1421 760L1423 753L1421 747L1421 740M1161 707L1161 699L1167 697L1173 696L1178 700M905 817L910 814L913 816L914 823L918 829M1144 800L1153 800L1157 799L1163 805M1352 674L1356 671L1355 663L1354 657M1517 477L1522 476L1527 477L1529 481M1011 448L1015 444L1021 438L1023 434L1026 433L1028 427M1375 768L1376 762L1380 760L1387 762M902 511L906 507L911 500M881 546L886 541L886 534L891 532M1252 701L1256 702L1260 703L1264 706L1263 711L1262 716M1269 312L1276 308L1281 306L1286 302M1123 364L1123 360L1116 358M1283 424L1287 424L1288 418L1286 412L1287 406M943 750L947 745L954 748L955 754L952 756L944 755M1641 734L1643 725L1643 721L1645 714L1642 710L1641 705M1195 332L1202 337L1203 345L1210 350L1215 354M1041 337L1043 334L1045 331L1048 329M1279 755L1279 747L1284 742M1074 411L1077 403L1076 397M1216 340L1223 341L1228 341L1234 340L1239 338M907 545L915 546L918 538L923 531M1516 327L1518 320L1524 313L1525 310M1636 459L1640 458L1643 461L1647 467L1647 470M1375 399L1379 393L1381 384L1382 380L1382 376M1516 813L1521 821L1523 825L1521 828M960 520L963 517L965 514L969 507L970 504L968 500M1106 788L1106 785L1099 780M1412 491L1418 485L1419 479M1025 737L1030 735L1037 729L1043 726L1049 724L1055 722M918 605L920 601L920 597L924 590M1079 364L1083 361L1088 360L1094 361L1099 364M1099 375L1099 379L1096 384L1095 390L1088 396M1203 453L1212 452L1217 453L1226 454L1231 453L1239 456M1322 490L1325 486L1325 481L1324 476L1326 468M958 449L959 444L963 437L968 435M1080 810L1083 808L1087 810M1069 620L1071 615L1071 610L1068 602L1064 596L1060 592M1283 595L1288 593L1295 594L1302 592L1309 594L1314 597M1067 380L1070 372L1076 366L1078 363L1077 358M957 625L962 627L965 627M1242 363L1246 359L1253 355L1256 354M1508 616L1514 612L1514 608M1141 481L1144 476L1147 474L1151 473L1154 470M1007 484L1005 477L1008 474L1011 465M1048 726L1054 721L1062 718L1065 715L1067 712L1065 707M1165 787L1170 785L1175 780L1181 774L1182 770L1187 763M1197 699L1199 697L1204 700L1207 704L1210 705M1438 461L1445 462L1449 464L1455 470M854 290L862 290L867 293L873 295M1078 534L1086 539L1093 542L1096 542M1268 808L1274 804L1279 799L1281 796M1311 400L1313 403L1312 406L1308 414L1304 420M1421 308L1423 306L1425 302L1426 294L1425 290M1488 304L1493 311L1500 317L1504 317L1512 313L1517 310M1653 303L1660 298L1660 291M869 382L878 381L882 385L883 394L882 402M1551 299L1554 299L1561 297L1564 295L1568 295M1066 702L1063 696L1064 692L1063 687L1062 680L1064 671M1135 400L1137 402L1143 406M1057 822L1062 824L1069 829L1072 826M1542 383L1548 376L1550 373L1558 378M1303 394L1306 392L1310 389M817 820L826 821L835 821M1652 731L1655 729L1660 723M1126 670L1129 667L1130 660L1124 655L1123 651M1307 593L1307 590L1305 586L1301 584M1369 381L1373 378L1379 380M929 652L933 648L933 642L933 634L936 632M1532 598L1539 598L1547 600M1252 553L1256 552L1261 556M1550 364L1551 360L1553 354L1557 349L1564 346M1140 763L1142 756L1147 749L1148 745M1262 487L1264 482L1270 478L1276 481M1283 717L1285 714L1283 707L1284 700L1290 697L1294 693M1552 715L1551 707L1551 702L1550 695L1546 686M1351 406L1355 405L1360 405M1061 426L1067 427L1072 430L1074 434M1236 483L1244 485L1253 487L1257 484M891 314L894 307L895 303L896 299M1138 565L1145 567L1149 569M1501 470L1503 467L1504 459L1506 456M1431 652L1435 653L1444 652L1445 649M1476 335L1482 338L1490 337L1496 336L1499 339M1095 490L1101 488L1108 483L1112 480L1117 485M1153 447L1157 443L1165 441L1171 439M1403 524L1407 522L1413 519L1417 516M993 766L997 768L997 776L991 779L992 784L993 787M1286 640L1293 641L1300 642L1305 647L1306 652M1050 579L1053 573L1058 566L1052 563L1048 560L1039 559M1635 705L1636 696L1640 688L1641 684L1644 682M838 436L838 428L834 425L835 419L834 414L830 408M943 380L937 376L936 368M1138 720L1143 717L1146 712L1144 709M824 558L830 557L833 556L834 553L839 550L845 548M1257 640L1259 637L1262 633L1266 626L1265 621M1146 438L1151 441L1154 444M910 344L913 338L916 337L920 330L914 323M1490 306L1493 310L1500 313M1278 597L1281 595L1287 600L1286 607L1285 612L1286 618M1270 475L1272 478L1276 481M1296 466L1299 466L1305 469L1312 467M1466 766L1468 763L1469 755M877 400L884 398L888 393L891 393L898 390M1437 362L1438 355L1437 352M813 480L819 479L823 484L829 484L837 483L844 486M1651 759L1657 755L1660 753L1666 748L1670 741M1018 333L1021 331L1030 331L1037 326M1118 683L1123 682L1127 681L1134 678L1142 679M1223 504L1222 498L1222 495L1224 490M1251 414L1253 418L1259 416L1266 416M1391 302L1388 295L1385 291L1384 286M1522 449L1528 447L1534 443L1537 443L1542 441M1450 302L1456 304L1463 307M1498 613L1503 616L1508 617L1511 619L1514 621L1519 617M1577 323L1584 318L1591 315L1597 309M1010 640L1016 635L1018 632L1021 624L1023 617M1003 483L1003 476L1003 472M1083 556L1089 560L1097 562M1068 324L1071 322L1076 317L1082 311L1083 308L1084 301M1492 499L1494 496L1494 493L1495 484L1493 476M1242 528L1247 522L1244 518L1244 509L1247 503L1252 499M1433 302L1440 301L1445 301M1006 494L1002 488L1005 482L1011 483L1017 489L1023 493M928 746L933 747L936 740L938 734L940 730M811 650L818 647L826 643L830 643M1080 521L1083 519L1089 513L1094 513L1098 505M1607 687L1606 679L1614 677M1197 689L1202 684L1205 681L1212 677M1066 626L1073 624L1078 624L1081 623L1088 623M1158 760L1158 756L1162 748L1169 747M1320 489L1324 489L1331 486L1334 479M1023 434L1024 430L1025 422L1029 415L1031 408L1033 402M1596 313L1604 312L1610 307M1089 666L1094 660L1100 662L1107 665L1112 663L1112 658M1056 584L1054 578L1050 573L1047 567M1101 572L1104 566L1107 562L1112 557L1113 552M1112 778L1114 774L1119 771L1122 768L1124 765M954 353L958 352L960 350L961 347M1178 297L1176 289L1172 282L1169 279M1394 287L1397 280L1399 275M1480 762L1481 756L1484 749L1487 746M1501 350L1507 345L1515 342L1519 341M1387 687L1395 689L1399 689L1403 685M1615 655L1621 653L1628 648L1631 642M1004 345L1012 347L1019 349L1021 351L1026 359M1030 760L1032 756L1040 755L1048 758L1051 760L1055 759M1489 371L1490 366L1493 360L1495 355L1497 352L1497 344M880 543L883 540L890 539M1594 611L1596 607L1603 606L1607 610M1470 526L1471 522L1474 520L1480 520M1651 682L1657 676L1658 673L1656 671M1148 409L1152 405L1156 397L1158 395M1267 820L1271 818L1275 819L1280 819L1282 816L1281 812M1176 641L1184 641L1189 647M1074 776L1082 772L1082 766L1079 762L1075 759L1070 759M1039 557L1043 553L1045 547M1020 483L1025 485L1027 487L1031 493L1036 500M1178 512L1177 509L1172 506L1169 505L1166 505M1649 497L1654 496L1661 496L1666 494M818 649L820 645L829 647L833 645M831 461L836 457L841 455M1112 772L1110 779L1109 784L1105 790M1108 466L1112 468L1114 473L1116 476L1121 477M1227 540L1235 540L1239 539L1245 535M851 440L857 442L862 448L862 454L864 461L866 470M1173 435L1176 438L1179 444L1177 449M1521 755L1526 755L1534 755M1656 560L1659 560L1664 568M1339 626L1346 621L1345 615L1342 614M802 445L806 442L809 439L811 432M1330 629L1332 621L1335 616L1341 617L1344 621L1348 622M1246 585L1252 581L1256 574M1135 614L1140 612L1149 611L1155 609M829 525L836 523L839 522L844 521L851 524L854 526M1179 601L1186 606L1188 609L1196 611L1203 616M855 660L853 653L851 648L849 643L844 642M881 564L885 563L891 564L898 562L906 564M1644 767L1649 773L1654 780L1659 784L1662 786M1405 480L1410 478L1414 481L1419 487M1646 766L1653 761L1655 758L1660 754M989 537L995 543L1001 549L1004 552L1006 555L1013 557M1047 809L1053 810L1060 814L1066 814L1073 808M1287 461L1291 456L1297 451L1303 445L1308 443M1187 537L1181 532L1177 530L1174 533M1234 332L1240 330L1244 329M1221 551L1227 548L1229 546L1235 542L1236 539L1238 533M888 680L892 674L895 669M845 451L852 456L856 461L860 465L865 469L869 463M1345 573L1343 570L1336 567M1470 799L1479 801L1481 798L1489 793L1491 789L1498 786M905 738L909 741L912 739M1213 490L1222 490L1230 491M1095 631L1093 623L1090 617M1454 791L1454 786L1447 788L1442 790M1660 680L1666 682L1672 688L1673 691M1229 446L1232 445L1234 443M1590 728L1593 723L1598 720L1602 720L1610 721M1648 489L1654 487L1657 480M1398 588L1405 590L1409 590L1414 591L1417 588M1427 634L1431 635L1436 633L1441 629L1446 631M1115 564L1117 569L1122 572M1083 357L1087 356L1092 354M928 570L934 563L934 560L934 554M868 543L872 545L878 545L883 547L888 555L894 552M1458 467L1461 467L1464 463L1463 456M836 661L839 653L843 650L846 642M873 347L881 345L878 340M814 462L818 461L822 460L827 463L835 461M1292 355L1295 351L1298 346L1300 342L1299 337L1297 333M1582 776L1581 768L1584 761L1582 753M1487 751L1485 748L1479 745L1473 743L1467 739M1410 688L1410 683L1412 675L1411 671L1409 668M1569 538L1574 540L1579 545M852 384L858 385L860 388M1196 724L1203 721L1208 714M1541 695L1546 698L1553 702L1560 703L1564 700M1597 438L1601 436L1603 433M1077 426L1082 422L1083 416L1084 408L1085 399L1089 395M1413 578L1421 576L1425 576L1430 576M1078 629L1086 628L1089 625M1434 817L1442 813L1447 811L1445 803L1442 799M1480 297L1483 292L1484 288M1554 424L1558 420L1561 419M873 814L871 810L865 804M1309 517L1316 516L1319 514M1309 652L1309 645L1312 641M1306 815L1312 809L1314 805L1315 802M1533 330L1535 325L1539 319L1543 315L1549 314L1556 318M1266 427L1273 422L1280 419L1286 415M1414 536L1413 533L1411 528L1408 520L1406 512L1405 506M1649 703L1649 700L1646 695M1650 318L1653 315L1658 314L1667 311L1666 307L1668 303M938 372L941 367L940 359L940 352L939 348M959 358L962 357L967 351L974 350L983 349M1396 373L1402 366L1404 360M837 554L838 548L841 544L844 542M865 509L871 514L871 519L878 521L883 524M1027 783L1028 775L1029 766L1029 758L1028 754M1301 534L1304 534L1306 538L1308 543L1310 547L1311 553M1470 757L1470 753L1469 745M871 823L874 826L876 829M1300 414L1303 407L1308 403L1314 396L1316 390L1314 385M1237 455L1239 447L1242 443L1241 439L1240 435L1235 429M1221 547L1221 541L1222 535L1223 527L1223 522L1221 518M1595 752L1593 748L1585 745M891 710L892 704L893 700L891 692L893 686M1518 536L1518 543L1518 549M1118 549L1122 551L1128 549L1135 546M1451 738L1454 739L1460 743L1465 747L1467 753M846 324L853 322L861 322L868 321L874 318M1615 672L1622 669L1624 662L1624 658L1628 651L1628 643M981 764L979 758L979 751L979 745L979 741M1579 748L1579 739L1577 733M1121 486L1124 486L1132 487L1134 483L1140 483M1294 758L1302 756L1305 754L1313 755L1315 758M1603 695L1604 691L1605 687L1609 682L1609 674M991 807L997 810L998 813L1002 820L1002 824L1005 827M865 599L869 602L872 607L872 613M1384 738L1387 735L1392 732L1393 728L1397 720L1403 718M1181 624L1184 625L1187 623L1191 616L1193 612M1174 539L1178 536L1182 534M1239 769L1247 767L1251 770M1493 355L1496 357L1500 364M1005 661L1010 657L1013 654L1020 649L1024 643L1027 639M1204 696L1205 693L1210 686L1212 679L1215 672L1217 664M1528 662L1532 657L1533 654M1634 396L1638 392L1641 389L1646 388L1648 385M1566 437L1572 436L1575 436M1243 604L1243 599L1244 593L1245 587L1245 579M1075 363L1078 359L1080 351L1083 346L1086 342M1015 504L1012 496L1009 494M1164 815L1170 819L1173 823M1015 325L1012 321L1006 315M931 321L934 318L931 311L928 307L929 304M1457 392L1464 395L1467 393L1470 391L1473 385M1243 700L1248 697L1250 693L1254 689L1261 687L1268 682M1244 687L1248 680L1250 673L1253 665M957 742L965 739L968 737L974 731M1469 701L1463 697L1463 688L1464 686L1466 679M1269 570L1272 567L1276 565L1281 563L1288 560L1291 558M841 382L847 379L851 376M1243 789L1248 787L1251 783L1254 777L1251 775L1250 770M1100 402L1109 403L1117 402L1123 400L1131 401L1137 400M1654 478L1658 480L1665 477L1673 474L1678 470M1002 460L1006 456L1009 449M1638 719L1641 717L1649 720L1658 720L1664 720M868 686L871 681L874 676L873 671L878 665L882 660M921 777L929 776L932 774L938 774L944 777L943 786M860 639L866 641L873 637L880 636L888 634M1592 712L1595 713L1599 713L1606 710L1609 710L1615 706M1058 657L1063 656L1071 655L1076 651L1079 646L1082 644M1609 429L1604 422L1600 416L1597 413L1594 409M1033 590L1037 585L1037 582L1030 579L1023 574M1339 314L1344 318L1344 321L1344 325L1345 331M1522 601L1528 604L1533 608M1561 361L1565 362L1573 364L1580 365M1639 456L1645 460L1649 463L1651 468L1656 466M808 714L815 712L820 706L825 700M984 480L989 477L992 478L998 473L998 468L998 463M1193 814L1189 813L1186 815L1184 821M1514 766L1515 760L1519 752L1522 749L1524 741L1525 737M869 713L873 721L870 729L868 736L867 742M1430 639L1433 641L1440 642L1446 646L1450 648M1391 529L1396 527L1401 522M1190 455L1186 448L1188 440L1186 434L1182 431L1182 423M1587 677L1590 671L1596 666M1317 347L1323 343L1327 340L1329 337M917 379L921 375L924 370L928 367L931 364M1276 348L1276 340L1278 332L1279 327L1280 323M1162 810L1168 807L1172 802L1176 801L1183 800M967 336L971 336L976 333M868 772L873 767L875 759M896 360L902 361L906 368L909 370L914 372M1333 706L1330 702L1325 695L1320 693L1320 689M1099 825L1104 817L1109 813L1115 810L1118 808M1029 773L1035 776L1041 779L1048 780L1053 779M1584 356L1592 359L1593 363L1594 371M1630 807L1633 803L1630 798L1628 796L1621 792L1615 793M1149 671L1153 664L1155 659M869 727L874 725L877 723L882 724M1147 510L1147 505L1149 501L1151 496M1100 593L1101 585L1102 581L1105 575M1448 495L1454 499L1459 500L1464 498L1467 492M1585 508L1588 512L1588 518M929 598L934 595L933 589L935 584L933 581M1608 291L1612 292L1618 293L1623 293L1628 296M1366 517L1365 511L1363 507L1362 504L1362 496M1164 357L1162 351L1157 349L1153 352L1150 350L1145 347M1056 414L1060 412L1065 412L1067 416L1068 420L1068 428M1304 745L1305 741L1307 736L1302 731L1299 730L1294 727M1550 385L1553 388L1556 395L1558 403L1558 411L1563 416M1028 707L1032 706L1040 706L1047 705L1050 704L1056 706M1250 793L1257 794L1260 796L1264 799M1263 769L1266 763L1271 759M857 353L860 346L862 342M1161 790L1160 783L1153 781M958 559L960 556L966 557L973 557L979 554L980 550M1385 403L1383 408L1386 412L1388 416L1388 420M1430 295L1430 291L1432 285L1434 277L1434 272L1439 270M1119 589L1122 587L1127 584L1133 579M1026 755L1033 759L1037 761L1043 761M1281 432L1287 429L1293 426L1297 433M1386 336L1384 327L1388 321M1594 394L1600 397L1604 402L1609 406L1615 405M875 405L879 410L880 416L873 419L866 422L863 427M1311 348L1318 346L1323 344L1322 336M1145 788L1153 787L1160 788M1381 493L1382 488L1385 482L1387 479L1391 476L1397 476M1144 581L1147 578L1149 575L1150 572L1151 564M948 353L946 359L938 360L930 361L927 362L924 364M1612 359L1616 353L1619 351L1624 346L1625 343M1408 701L1411 698L1412 695L1414 691L1419 689L1419 684M942 488L946 488L950 487M937 466L935 461L932 462L929 463L929 467M1537 393L1544 387L1552 386L1559 382L1557 374L1560 367M1109 658L1113 658L1119 658L1124 661M1470 390L1474 383L1478 376L1485 373L1489 369L1490 362M1386 478L1390 472L1397 471M998 286L1006 287L1011 290M1604 295L1611 292L1613 286M1659 627L1652 624L1648 618L1643 615M999 612L1001 608L1007 605L1009 599L1013 598L1019 594M1093 307L1098 302L1104 298L1109 302L1116 306L1116 311M1248 620L1252 618L1253 615L1254 610L1249 603L1250 595M1581 286L1578 285L1575 283L1569 279M1463 570L1468 565L1471 568M1230 643L1232 640L1236 637L1239 631L1239 625M1299 344L1303 341L1307 339L1314 334M1227 452L1230 451L1234 452M1385 354L1388 352L1391 350M1378 352L1387 351L1391 352L1395 346L1399 346M1589 674L1593 670L1596 667L1599 666M1352 802L1358 809L1366 812L1368 808M1358 549L1363 553L1367 556L1370 559L1368 564L1366 571M1450 824L1451 819L1458 818L1463 819L1466 822L1467 827M893 477L899 471L905 470L908 471L910 475L911 478M1442 628L1449 624L1458 624M1181 743L1186 744L1195 744L1199 743L1202 743M1350 461L1358 460L1362 458L1367 460M1243 525L1247 521L1249 519M842 378L845 375L852 374L855 372L861 367M1470 451L1472 446L1476 442M886 761L887 766L888 775L889 782M1225 783L1228 778L1234 783L1235 789M1649 545L1651 549L1653 556M921 348L925 354L927 361M939 413L937 407L931 400M1064 726L1066 723L1067 719M984 334L993 335L996 336L998 339M1232 427L1237 430L1240 435L1243 437M1236 422L1242 420L1242 414L1241 409L1242 405M1009 293L1011 285L1011 281L1011 278L1010 274M1402 661L1406 658L1411 654L1413 652L1420 648M1053 397L1060 395L1065 396L1071 397M1171 375L1169 380L1169 383L1168 386L1167 394L1162 396M1343 773L1348 778L1348 784L1344 792L1340 795L1334 792M1077 814L1078 809L1081 806M948 448L954 442L959 436L964 433L962 426L963 418M1314 820L1316 816L1316 810L1314 803L1315 796M1242 549L1249 553L1252 550L1257 547L1260 544M1056 373L1064 376L1059 380L1055 382L1048 378M1005 362L1008 362L1013 364L1016 369L1020 372L1023 377M1021 452L1027 457L1033 458L1038 457L1041 454M1185 400L1191 404L1194 407L1193 412L1191 415M1542 786L1545 781L1544 777M1484 649L1488 647L1497 646L1505 642L1513 642L1520 646M1241 789L1248 784L1256 785L1262 787L1267 783L1271 777M1144 587L1148 589L1153 592L1159 595M1077 447L1076 444L1069 444L1068 441L1066 437M1360 650L1368 651L1373 647L1378 642L1379 638L1376 635M1624 578L1629 579L1633 586M1571 600L1572 597L1578 600L1586 600L1588 597M856 396L862 395L869 400M1641 394L1645 400L1646 403L1644 407M1185 789L1187 782L1194 784L1198 785M1311 567L1316 564L1325 566M1382 491L1383 485L1386 481L1394 477M1363 307L1367 307L1370 306L1375 305L1382 306M983 651L986 649L993 650L997 653L998 659L1004 664M1230 352L1234 347L1236 341L1239 341L1242 338L1237 331M1133 804L1136 809L1134 813M908 753L913 749L915 745L919 742L924 739M1454 362L1458 363L1462 360L1464 365L1462 370M1207 693L1211 686L1216 682L1220 681L1221 674L1225 670M1375 378L1372 371L1367 371L1367 363L1367 359L1370 351M1028 694L1034 692L1038 691L1042 687M1580 526L1583 521L1590 517L1593 512L1596 507M1317 776L1319 769L1321 762L1324 757M1634 404L1640 402L1645 399L1653 400M891 569L898 570L903 573M1514 301L1513 298L1513 293L1510 286M1071 297L1074 296L1083 296L1091 299M1479 461L1484 458L1487 457L1490 451L1490 442L1492 435M1487 622L1487 618L1488 612L1489 604M1639 511L1644 504L1651 503L1656 500L1658 498L1661 498M932 782L932 779L929 776L933 770L932 763M1445 530L1447 522L1451 521L1459 519L1464 520L1472 520M989 723L996 727L996 733M1395 578L1401 577L1406 577M1045 484L1053 480L1056 479L1062 479M1559 465L1563 468L1565 472L1569 475M1232 559L1237 560L1240 559L1247 557M1609 589L1611 595L1613 601L1615 604L1619 610M1000 781L1009 782L1014 780L1020 776M1162 525L1167 522L1173 523L1176 520L1178 515M1226 347L1229 342L1234 336L1234 327L1234 323M1636 394L1636 390L1634 387L1629 385M1074 459L1076 456L1080 449L1082 444M1403 293L1406 291L1410 286L1405 280L1402 277L1398 277M1607 295L1607 290L1608 285L1608 278M1496 420L1502 423L1507 423L1512 422L1515 425L1515 429M1574 577L1582 579L1589 579L1597 575L1601 574M1506 755L1509 751L1511 747M1473 460L1479 461L1487 464L1491 470L1500 471M865 315L861 310L853 305L850 301M1033 390L1036 387L1040 383L1044 378L1048 373L1050 369M818 628L824 630L831 628M1459 600L1459 593L1458 588L1458 581L1459 575M1411 607L1412 599L1414 597L1417 594L1421 588L1424 583M1116 678L1118 669L1117 663M1301 642L1302 640L1306 635M923 296L924 289L926 284L926 278L932 275L934 271M985 785L991 787L997 792L998 801L1002 809L1005 811M1640 536L1642 533L1645 527L1652 522M1295 517L1301 513L1302 510M1167 633L1172 628L1176 624L1181 618M1221 711L1225 711L1232 714L1239 719L1245 721L1251 718M807 482L810 487L810 492L809 495M1303 618L1309 618L1312 623L1314 625L1319 632M1598 403L1607 403L1611 405L1615 407M1643 769L1648 762L1656 759L1657 753M1413 383L1419 381L1422 378M1391 620L1399 615L1403 611M1058 517L1067 516L1071 516M1162 640L1159 632L1157 628L1155 624M1244 814L1243 810L1243 806L1237 802L1230 802M1230 668L1232 666L1238 663L1242 658L1246 658L1253 662M1437 570L1439 563L1439 558L1440 555L1438 551L1435 548M890 388L895 390L896 393L898 398L900 403M1393 425L1397 422L1401 421M1432 481L1439 481L1442 482M1175 523L1181 517L1186 515L1192 517M1586 635L1591 633L1596 639L1602 642L1609 642M844 536L849 535L855 536L860 537L865 540M1497 730L1500 729L1501 720L1505 720L1510 719L1517 719M1374 493L1377 499L1377 504M1439 505L1441 499L1445 497M1399 426L1405 426L1410 420L1416 417L1419 417M1431 315L1433 311L1437 307L1436 303M1558 425L1559 421L1563 417L1568 412L1572 411L1576 410M964 693L960 688L956 685L953 684M1399 360L1404 357L1409 351L1411 347L1414 345L1420 340M1563 423L1567 420L1571 420M1250 595L1258 595L1263 593L1267 589L1274 585L1280 580M977 388L976 379L977 371M974 748L978 748L980 753M1180 507L1183 508L1190 508L1194 510L1203 512L1204 515M1196 636L1197 629L1200 625L1204 618L1208 615M1496 656L1500 656L1503 659L1507 662M1581 502L1585 496L1586 493L1587 486M1262 739L1266 738L1270 738L1274 739M1164 634L1169 634L1173 632L1174 630M1098 338L1099 333L1094 327L1090 323L1089 319L1091 314M972 544L970 536L969 530L973 523L977 517M954 323L957 317L956 309L958 301M1468 534L1470 530L1472 527L1473 521L1473 513M1256 657L1259 655L1261 649M953 632L958 624L960 620M1096 782L1100 779L1102 775L1104 768M1030 604L1039 604L1043 611M1557 505L1562 509L1566 510L1569 506L1574 504M984 717L987 712L983 708L978 702L975 694L977 689M905 770L910 765L914 760L922 758L928 759M949 655L951 648L952 641L949 638L946 631L945 626M1236 503L1240 498L1242 495L1247 492L1254 490L1257 491M1094 567L1096 561L1101 555L1105 552L1107 550M1081 397L1086 397L1092 394L1099 391L1106 393L1109 392M1234 737L1241 742L1248 744M1051 333L1060 333L1063 330L1069 327L1073 326M1586 600L1588 592L1590 589L1593 583M1450 519L1452 523L1458 528L1466 529M927 402L933 403L936 404L940 399L941 396M1496 450L1502 451L1507 452L1509 456L1514 460M1614 689L1616 685L1617 682M1602 417L1606 413L1609 410L1613 408M1170 426L1176 421L1178 419L1185 420M1276 773L1276 768L1278 765L1283 762L1291 760M1293 296L1295 293L1292 285M1231 802L1238 798L1243 793L1251 792L1255 791L1262 790M1183 386L1185 393L1191 399L1193 404L1192 408M1045 768L1053 770L1057 770M1094 357L1099 352L1102 344L1110 342L1117 343M1013 822L1014 819L1017 814L1014 810L1014 801L1011 797M1393 317L1394 314L1395 310L1393 302M1559 640L1561 634L1562 626L1562 622M1131 459L1134 462L1138 463L1141 465M1113 315L1120 315L1125 312M1356 799L1355 793L1351 788M1003 601L1009 602L1014 607L1015 611L1019 615L1022 620M1220 294L1221 286L1221 280L1218 277L1210 275L1206 276M1069 293L1070 296L1067 303L1063 309L1058 306L1054 306M820 606L823 602L829 600L836 604L844 600L848 600M1317 500L1321 501L1325 499L1327 502M1613 441L1615 437L1611 433M961 726L965 729L972 726L974 730M1270 800L1276 798L1283 798L1292 799M1066 451L1073 445L1077 443L1080 442L1087 437L1091 435M1137 463L1135 458L1130 451L1125 453M1255 543L1263 540L1271 536L1273 530L1269 524M1636 322L1637 314L1635 306L1629 301L1627 298L1621 298M1356 601L1359 602L1361 604L1367 606L1368 611M1615 484L1615 479L1615 474L1612 469L1606 472M985 504L991 499L996 499M916 722L921 728L924 733L929 738L931 743M1034 536L1041 536L1047 535L1049 529L1053 528M1394 688L1398 687L1405 686L1410 687M991 425L992 422L992 418L991 414L985 408M1159 777L1164 774L1162 767L1160 759L1158 753L1156 751M1380 510L1384 508L1388 509M1644 315L1648 308L1650 304L1654 299L1653 294L1654 289M1362 637L1371 638L1375 638L1383 638L1388 642M1411 431L1414 425L1414 418M1436 437L1439 436L1443 435M1166 627L1171 623L1172 618L1169 611M1435 409L1435 403L1432 397L1429 393M1343 728L1348 730L1351 730L1360 728L1368 729L1373 730M1179 724L1183 717L1190 715L1195 715M1527 417L1532 413L1537 412L1540 408L1543 404L1543 397M925 821L932 826L937 828L943 830M1464 807L1466 804L1466 797L1463 795L1458 794L1451 793M1016 788L1017 785L1015 777L1016 772L1016 769M890 771L893 772L896 773L900 772L905 777M1599 561L1605 562L1612 566L1616 570L1621 572M1527 526L1530 523L1535 520L1541 517L1550 518L1554 519M1154 614L1151 610L1147 608L1149 601L1151 598M1441 519L1448 519L1453 521L1456 521L1462 525M1386 399L1389 392L1391 387L1392 383L1393 374M1339 700L1338 694L1337 691L1339 686L1345 682M1226 575L1234 578L1238 579L1243 584M1075 481L1080 486L1080 494M968 494L971 492L979 492M933 807L938 808L946 812L948 815M1632 537L1638 533L1646 533L1650 535L1656 534M1465 601L1467 595L1471 588L1476 587L1482 582L1485 577M1486 815L1490 812L1491 807L1498 802M1140 445L1144 450L1148 453L1157 453L1159 457L1165 457M1251 699L1255 702L1256 710M1446 512L1453 508L1461 508L1470 507M969 370L972 371L975 373L978 375L980 378M1590 712L1597 713L1602 711L1607 711M1039 360L1045 357L1047 349L1053 346M1268 475L1272 475L1279 473L1283 470M1481 631L1489 628L1493 630L1501 628L1503 626M1449 797L1454 790L1457 789L1463 790L1471 793M944 594L950 595L955 594L959 592L963 590M1046 708L1049 705L1050 703L1057 704M1285 521L1290 524L1292 528M1171 340L1180 339L1183 335L1179 332L1177 328L1175 325M1565 702L1563 697L1556 693L1556 690L1557 684M1055 761L1061 761L1064 761L1069 758L1072 758M1132 746L1129 739L1129 733L1128 728M1347 539L1351 542L1351 545M1495 679L1503 680L1509 679L1514 674L1518 672L1523 677M1054 467L1058 462L1062 457L1068 452L1072 449L1077 448M1477 592L1475 589L1470 589L1465 588L1458 584M1561 781L1565 776L1569 776L1573 773L1581 773M1619 369L1620 365L1620 358L1616 351M990 320L997 323L1002 327L1007 331L1009 337L1010 342M1393 550L1394 545L1394 542L1396 534L1395 527L1393 521M1521 742L1527 744L1529 748L1529 755L1527 762M1557 603L1564 602L1567 600L1576 600M1110 633L1115 635L1124 634L1127 635M1457 702L1459 699L1460 694M1124 404L1125 400L1126 396M1239 294L1245 291L1250 291L1255 291M1589 731L1592 732L1596 734L1596 737L1600 744M942 300L949 301L957 299M907 626L914 623L921 622L928 623M905 445L898 440L897 436M1141 333L1149 331L1152 325M1291 350L1297 355L1301 355M1058 733L1060 725L1059 719L1057 716M1214 759L1217 758L1223 753L1230 751L1238 751L1245 749M1100 551L1102 545L1103 542M1134 705L1142 703L1148 709L1151 715L1151 720L1149 728M826 427L828 423L829 417L827 410M1069 454L1072 452L1076 448L1078 445M1303 681L1310 676L1312 672L1315 666M1580 447L1584 454L1591 457L1598 461L1603 464M1456 756L1462 755L1468 756M1397 701L1400 698L1401 691M868 381L872 377L875 370L873 362L874 357M1399 775L1405 777L1413 780L1415 787L1421 790M1229 528L1234 527L1240 529M1592 699L1596 698L1601 694L1606 694L1610 693M878 657L882 656L888 654L891 651M1624 350L1628 347L1630 342L1632 335L1635 332M1632 473L1633 469L1641 470L1646 470L1653 472L1651 464M1556 383L1556 376L1554 373L1553 370L1551 367M1123 655L1130 659L1135 663L1132 666L1134 672L1134 680M848 781L855 781L857 778M1048 474L1049 470L1054 468L1058 465L1061 462M1511 682L1518 682L1525 684L1528 686M1331 751L1338 746L1340 749L1344 752L1349 756M875 421L881 422L888 424M1256 544L1257 540L1258 534L1267 533L1273 528L1281 529M1061 291L1067 289L1068 284L1072 281M1655 419L1662 423L1667 422M963 741L966 738L970 740L971 748L971 756M1058 710L1063 711L1067 712L1072 715L1077 719M1459 360L1461 356L1464 349L1465 344L1466 338M926 513L930 511L938 508L936 502L933 497M1224 762L1227 764L1230 768L1232 772L1238 777L1240 774M1556 753L1560 746L1556 741L1552 736M904 578L912 582L917 586L920 588L925 591L930 591M1595 654L1599 650L1603 650L1611 653L1616 653M1378 302L1379 298L1378 295M1267 559L1267 552L1270 544M1535 717L1541 712L1542 708L1543 703M821 744L829 742L833 736M1338 628L1339 623L1338 616M1390 793L1398 789L1404 792L1409 791L1411 789L1417 785M1379 765L1384 764L1392 764M1308 559L1306 556L1303 557L1297 559L1293 558M1499 670L1504 668L1510 665L1516 660L1521 660M1628 501L1635 497L1638 498L1642 492L1649 491L1652 499M968 758L970 760L974 755M1403 356L1402 349L1400 346L1398 342L1399 337M1413 775L1417 777L1424 780L1429 787L1436 791M1161 330L1167 331L1171 335L1170 342L1173 347M875 514L877 511L878 507L883 503L888 496L887 491M1428 437L1428 432L1435 427L1442 424L1447 418L1447 414M1315 398L1315 393L1315 389M1613 381L1620 385L1624 390M1054 597L1058 589L1055 585L1053 582M1299 711L1299 707L1297 703L1295 699L1289 694M1444 743L1446 745L1448 749L1453 750L1457 746L1461 749M1337 396L1345 394L1350 393L1358 391L1360 388L1364 384M1561 488L1562 485L1563 478L1564 469M1461 602L1463 598L1465 591L1466 586L1467 582L1464 577M1413 334L1418 334L1422 331L1422 326M1130 462L1138 462L1144 465M1255 323L1253 315L1251 313M1332 728L1336 722L1339 721M1575 811L1570 805L1568 799M1395 407L1397 410L1401 417L1408 419L1415 420M1587 409L1591 402L1594 398L1600 394M1492 471L1496 464L1496 461L1494 454L1489 452L1486 450M833 631L840 632L845 631L848 629L855 627M1054 801L1059 799L1067 796L1073 796M1592 329L1596 337L1604 338L1606 340M1076 330L1078 327L1083 323L1083 315L1079 308M1365 381L1372 376L1380 372M1391 823L1394 818L1386 815L1384 812L1382 809L1379 811M1208 662L1212 659L1219 654L1221 649M1513 625L1520 629L1523 627L1528 628L1530 632L1531 635M1195 377L1197 371L1201 364M1316 750L1322 749L1325 751L1327 757L1328 760L1332 767M1258 286L1263 289L1270 294L1272 296M1128 302L1131 298L1134 291M1462 610L1463 605L1465 603L1462 598L1461 594L1462 589M1620 660L1626 663L1629 664L1630 671L1634 679L1635 685M1093 711L1095 708L1098 704L1102 703M1541 763L1543 756L1548 750M934 345L943 342L947 340L949 334M1030 714L1029 705L1031 700L1036 694M1488 493L1491 488L1496 487M1321 423L1325 420L1329 414L1333 409L1334 405M952 598L946 597L941 599L936 592M989 818L993 811L995 807M1388 412L1394 406L1397 401L1396 397L1395 392L1397 390M849 617L857 617L861 619L866 624L870 625M1357 792L1359 795L1363 796M1607 526L1612 521L1619 516L1621 513L1625 508M847 496L854 499L862 496L868 493L870 490M938 741L942 740L950 744M1120 560L1126 557L1131 552M883 492L890 488L897 491L901 493L905 493L910 494M1172 787L1179 783L1183 783M1240 550L1240 554L1237 562L1230 567M1315 292L1318 287L1326 286L1331 292L1337 293M1410 761L1413 760L1421 758M1076 505L1079 504L1085 501L1089 499M1452 774L1458 775L1461 779L1465 783L1470 787L1470 793M1263 530L1267 526L1274 527L1277 529L1282 532L1284 535M1403 544L1407 539L1415 538L1420 539M878 285L884 278L892 282L898 282M1597 800L1605 796L1613 794M1221 767L1224 771L1228 775L1229 780L1226 786L1220 792M1363 767L1368 768L1374 774L1381 775M1062 748L1067 741L1064 734L1065 729M879 563L886 564L889 566L892 564L896 564L900 563M1039 342L1038 335L1035 333L1030 331L1028 323L1026 318M1265 769L1273 768L1282 765L1285 763L1287 760L1290 756M1652 723L1656 720L1654 713M1308 534L1312 528L1320 525L1323 524L1329 528M1448 572L1456 573L1463 569L1470 563L1475 562M1198 621L1201 619L1203 622L1203 628L1206 630M1286 680L1291 679L1296 674L1303 679M1442 320L1447 316L1444 311M882 397L883 394L886 389L889 382M1480 678L1485 675L1489 674L1491 671M1176 447L1181 448L1187 442M1065 738L1070 732L1079 732L1084 733L1090 738M1329 311L1334 308L1340 304M1207 466L1211 462L1217 457M1053 336L1057 329L1060 324L1063 321L1063 316M1007 386L1015 390L1022 394M1301 380L1307 383L1309 385L1302 389L1297 392M998 742L1005 744L1014 745L1018 742L1023 742M1344 728L1346 722L1344 718M1116 537L1122 537L1128 537L1131 538L1140 537L1145 540M1492 494L1495 494L1500 494L1506 494M1253 351L1258 349L1263 346L1271 342L1278 339M1114 797L1116 793L1114 790L1110 783L1105 782L1102 778M1173 589L1179 587L1184 590L1183 596L1183 601L1181 609M1175 709L1178 708L1182 711L1190 712L1194 714M1028 664L1024 664L1018 665L1014 667M1282 636L1286 634L1288 629M1217 462L1221 458L1227 458L1235 458L1243 458L1247 458M1456 305L1458 302L1465 304L1469 305L1474 300M1644 556L1650 549L1654 548M1159 298L1166 299L1169 301L1175 305L1182 307M996 817L999 818L1002 822L1006 824M1036 400L1040 399L1045 400L1051 404L1056 410M1398 676L1403 675L1406 672M1019 398L1019 389L1011 388L1006 383M1544 293L1540 289L1540 285L1540 278M1420 581L1424 573L1427 565M1454 508L1460 506L1468 504L1469 507L1471 512L1468 519M980 541L979 538L978 534L978 530L980 525M1452 764L1452 756L1454 752L1455 746L1458 744M1088 664L1092 657L1091 650L1092 646M1110 436L1115 433L1119 425L1123 421L1128 417L1131 415M1254 381L1258 377L1261 370M807 511L814 510L818 508L825 507L832 507M1320 762L1323 757L1323 751L1324 748L1330 747L1334 745M1428 589L1436 589L1440 584L1447 583M1579 438L1582 437L1584 435M1383 604L1390 604L1396 601M1572 337L1579 342L1582 347L1583 356M1206 674L1213 670L1219 671L1221 673L1224 677L1221 684M1473 615L1477 613L1480 611L1489 610L1492 603L1495 597M1418 553L1415 548L1420 542L1429 542M830 728L833 725L837 723M1251 295L1248 288L1246 282L1242 281L1236 279M872 393L875 395L879 396M1604 666L1606 658L1607 654L1607 648M1186 468L1192 467L1198 468L1203 462L1205 456M917 561L923 556L928 554L930 550L936 547M1311 824L1315 821L1319 819L1323 817M1421 687L1416 681L1409 682L1405 684L1405 690L1405 694M890 410L897 412L902 415M1205 741L1209 737L1218 737L1225 737L1233 739L1236 745M1214 315L1220 315L1224 315M1540 372L1544 366L1545 359M1183 530L1190 528L1194 531L1199 532L1202 530M1214 363L1215 359L1211 355L1206 348L1207 342M963 739L965 733L964 726L958 723M954 721L961 718L968 722L972 729L971 738M1123 539L1124 533L1121 530L1114 524L1110 522M951 390L959 386L966 381L968 374L968 369L965 366M955 353L963 353L966 349L966 341L969 333L965 327M850 734L856 737L861 739L867 738L870 729M1511 565L1512 562L1509 558L1509 554L1507 547M1071 602L1074 599L1079 597L1083 600L1090 604L1094 612M1544 773L1543 765L1543 762L1543 756M1593 813L1596 811L1603 814M1424 649L1430 653L1435 655M1333 597L1337 599L1342 603L1349 608L1354 609M1184 639L1187 637L1188 633L1192 631L1198 624M905 314L907 317L912 325M1487 673L1489 676L1490 682L1486 688M1515 541L1513 536L1508 530L1503 529L1499 530L1496 532M1229 824L1235 820L1242 822L1245 824M1169 673L1166 668L1164 665L1159 665L1151 664L1146 668M1137 800L1141 799L1144 799L1146 803L1148 806M891 350L893 344L896 340L896 334L900 329L903 326M1170 692L1176 695L1180 695L1183 695M1027 360L1026 352L1022 349L1017 352M1347 803L1349 800L1351 793L1352 785L1358 783L1362 780M940 412L944 410L945 403L947 400M1647 539L1655 538L1657 541M1580 744L1586 739L1586 734L1586 730M1431 427L1436 429L1439 431L1442 435L1441 440M1236 543L1240 539L1244 532M1235 774L1242 778L1248 785L1251 792L1255 793L1258 794M1345 726L1351 730L1357 734L1360 742M1158 532L1159 524L1158 521L1155 516L1147 514L1140 515M990 631L993 628L992 622M1042 728L1048 725L1057 726L1061 726L1064 726L1070 729M1462 355L1466 352L1472 347L1473 340L1477 332M826 770L830 772L835 775L839 781L844 786M943 583L948 582L954 588L957 595L956 599M825 370L833 372L839 371L845 370M967 324L972 318L974 314L977 309L978 302L983 295M1239 554L1243 553L1248 548L1251 540L1252 531M1326 297L1326 294L1324 288L1325 279L1322 274M1407 587L1413 580L1417 581M1629 620L1633 620L1641 618L1643 614M1517 375L1525 378L1530 379L1534 382M1650 736L1654 732L1656 724L1658 721L1657 716M906 528L910 530L915 531M1103 540L1106 538L1108 535L1111 529L1113 521L1114 516M1417 560L1419 557L1428 554L1431 553L1438 555L1441 553M1071 731L1073 729L1077 723L1084 719L1086 711M1247 599L1251 601L1255 599M1299 744L1305 741L1308 742L1313 745L1316 748M1380 457L1382 454L1383 449L1382 444M1105 778L1107 771L1111 765L1110 759L1104 754M846 452L851 455L858 454L859 446M1144 472L1147 471L1154 473M1388 638L1393 631L1396 624L1397 618L1401 616M942 771L950 772L956 769L963 766L970 768M1652 324L1658 323L1661 323L1665 318L1668 312L1670 309M1642 744L1648 747L1652 745L1657 744L1654 738L1648 731M1626 580L1622 576L1619 578L1616 577L1611 573L1607 576M1488 617L1489 610L1492 606L1497 606L1501 608L1506 611M1455 536L1462 532L1464 527L1465 521L1462 514M1274 285L1279 291L1275 295M1550 374L1548 369L1546 363L1541 357L1537 356L1534 355M1492 401L1495 401L1500 401M1641 806L1646 806L1654 806M959 400L956 408L953 410L947 412M1370 757L1376 756L1382 758L1385 761L1393 764L1395 767M1038 659L1045 656L1052 652L1052 647M1285 695L1289 695L1291 699M1450 811L1452 804L1457 799L1461 794L1462 787M1120 612L1124 607L1130 606M871 318L873 313L876 306M825 714L829 709L826 701M946 731L949 726L953 719L954 714L956 707L963 702M982 720L986 716L993 710L994 706M1556 590L1560 596L1565 597L1573 601L1580 603M1434 585L1438 581L1441 574L1445 570L1447 567M1236 290L1242 287L1245 283M1241 817L1246 821L1254 823L1257 825M1061 370L1068 368L1073 371L1075 375L1073 379L1066 382M985 814L993 814L996 812L998 808L1002 802L1005 802M814 729L816 732L821 735L820 740M877 652L878 647L878 641M1548 374L1552 371L1557 375M1490 404L1494 403L1495 397M1547 708L1547 704L1543 698M1380 504L1383 502L1386 500L1391 494M1295 772L1303 770L1306 768L1312 763L1318 761L1322 758M1451 583L1456 576L1459 571M813 442L820 437L823 432L826 426M1262 544L1261 539L1256 534L1250 539M1570 725L1578 722L1585 721L1588 718L1587 710L1585 707M1211 549L1218 548L1222 547M1486 771L1490 767L1493 764L1494 758L1496 755L1498 752M898 810L903 814L909 814L916 818M1093 484L1094 479L1095 470M870 341L877 343L879 350L886 353M1172 481L1173 478L1181 476L1186 476L1191 475L1197 474M850 676L849 668L843 666L835 664M939 383L948 384L954 382L960 380M1524 712L1525 705L1525 700L1524 691L1522 687L1516 684M1583 663L1587 663L1590 663M1257 655L1259 662L1265 668L1273 671L1274 676M1632 290L1637 289L1642 286L1645 281L1644 275L1645 268M1238 696L1241 691L1241 684L1238 680L1233 678M1177 592L1181 591L1188 591L1193 589L1198 593L1202 593M968 353L970 347L970 340M1579 328L1585 333L1586 337L1583 341M948 736L945 734L942 730L937 727L934 730L931 729M1323 544L1331 548L1338 552L1343 555L1344 560M1495 572L1499 567L1502 564M1126 455L1127 451L1124 446M1132 478L1136 474L1143 469L1148 469L1154 469M914 601L918 607L924 611L929 610L936 609L942 607M1082 438L1088 438L1089 430L1088 424L1089 422L1093 414M1634 640L1640 640L1645 643L1649 648L1647 656M1140 570L1149 571L1153 571L1154 568M1278 715L1277 708L1278 704M1481 753L1485 745L1486 740M823 620L827 619L833 614M898 344L901 345L906 351L904 356L900 359M1538 481L1541 481L1545 479M1550 359L1551 354L1555 349M1568 519L1574 525L1577 531M844 567L844 560L841 552L842 547L845 543L850 538M1446 480L1449 479L1454 474L1461 470L1465 466M1590 663L1588 656L1591 651L1588 642L1583 635M1100 334L1101 325L1097 320M1107 587L1112 592L1116 596L1122 602L1124 606L1124 610M1534 342L1535 338L1532 334M1384 303L1386 307L1395 310M911 789L919 786L919 782L920 775L923 769L924 766M1559 391L1562 395L1564 401L1563 408L1562 416M1176 655L1179 651L1185 649L1184 646M1172 302L1174 297L1175 288M870 357L865 357L862 358L859 359M1401 381L1401 372L1397 367L1391 368L1384 369M1041 562L1044 555L1044 550L1043 547L1045 542L1045 538M1171 397L1172 393L1177 388L1182 383L1189 379L1197 382M1515 403L1522 404L1524 400M1289 369L1296 369L1300 367L1307 362L1312 358L1318 358M1242 779L1248 779L1254 786L1259 793L1267 795M1282 410L1289 407L1294 402M1005 752L1010 757L1014 763L1018 767L1021 771M901 683L907 676L908 671L910 663L915 658L919 653M1175 521L1183 519L1187 518L1194 518L1198 519M1429 754L1430 750L1431 743L1432 735L1436 729L1442 724M1363 573L1367 569L1370 563M802 448L808 447L813 449M1621 611L1618 605L1623 602M1366 816L1370 813L1374 810M972 746L979 743L982 740L989 736M812 766L813 759L816 754M927 364L931 369L933 371L941 373L947 376L951 378M1655 576L1659 572L1662 572M1399 495L1404 496L1409 494L1414 489L1421 487L1427 487M858 547L866 544L868 538M1571 597L1575 599L1570 603L1562 606M926 746L932 748L939 747L944 746L950 744M1192 292L1194 288L1197 282L1200 275L1200 269M1124 590L1132 593L1135 597L1142 602L1142 606M1150 602L1156 599L1163 598L1167 597L1174 596M1302 425L1308 421L1313 418L1316 414L1314 407L1310 402M1323 555L1323 550L1322 546L1322 538M884 722L881 717L877 713L873 708M1104 343L1104 336L1103 331L1105 324L1109 321M1020 315L1027 316L1034 319L1039 316M1351 741L1350 734L1352 727M946 803L947 800L950 798L955 796M1294 455L1296 452L1296 443L1298 435L1300 432L1302 424M1110 618L1115 620L1117 615M1074 780L1079 779L1082 773L1086 766L1088 762L1090 760M955 460L957 453L958 449L961 446L967 439M1339 526L1343 526L1346 530L1345 535M1139 402L1145 402L1151 397M1354 326L1357 324L1364 324L1373 323M1424 316L1427 311L1427 304L1428 301L1431 296L1437 290M1482 812L1483 809L1487 803L1488 800L1489 791L1488 783M1532 736L1536 730L1537 727L1544 722L1545 717L1545 714M881 804L881 796L880 790M1434 787L1441 790L1444 789M1375 500L1381 495L1384 495L1388 491L1394 491M1253 394L1257 399L1260 404M1140 790L1142 784L1149 782L1157 784L1162 783L1167 780M1499 395L1504 400L1509 402L1515 402M1264 722L1269 722L1278 722L1282 727L1282 733L1281 742M1242 788L1244 781L1245 777L1245 770L1247 763L1245 754M1574 720L1578 720L1582 716M1309 774L1312 775L1316 778L1317 787L1317 791L1316 795M1015 764L1022 765L1025 766L1026 769L1028 771M1398 661L1405 664L1411 663M1184 695L1188 689L1187 681L1182 677M1362 388L1365 387L1372 389M1650 637L1653 630L1657 630L1659 632L1659 636M1381 584L1387 586L1396 583L1399 585L1402 587L1410 587M1618 708L1626 708L1628 710L1634 710L1635 705M1235 810L1237 808L1241 805M1275 673L1273 670L1264 670L1258 672M816 360L819 364L827 367M1079 723L1084 722L1088 726M1016 308L1022 308L1027 309M1003 430L1001 423L998 417L1000 413M994 355L999 349L1002 344L1004 341L1005 333L1006 329M1235 353L1239 350L1246 349L1250 349M1354 355L1358 359L1359 363L1360 366L1361 370L1361 373M1468 660L1472 661L1480 659M1578 495L1581 497L1584 493L1587 489L1590 488L1597 484M1236 618L1230 616L1221 616L1217 613L1214 611M1370 547L1372 543L1374 540L1380 538M1464 663L1465 655L1468 649L1467 646M1191 685L1189 679L1185 678L1181 677L1176 676L1174 683M835 424L839 427L844 427L851 426L852 423L855 414M1144 558L1150 552L1153 546L1151 541L1147 539M1448 463L1452 460L1461 461M1654 688L1661 690L1663 692M1454 786L1459 791L1463 797L1466 801L1462 805M1611 576L1614 572L1612 566L1616 559L1621 558M1540 619L1544 617L1550 615L1554 617L1554 620L1554 624M1648 372L1653 374L1656 376M1182 434L1186 427L1187 419M801 564L806 561L812 557L814 554L813 550L816 546M893 700L895 697L898 694L903 693M1437 737L1439 731L1441 728L1445 724L1444 715M1169 531L1174 531L1178 530L1179 523L1182 515M1007 564L1012 561L1017 556L1020 557L1025 556M817 469L820 463L821 458L823 450M1121 520L1126 514L1127 508M1571 375L1575 377L1581 379M846 450L851 447L855 442M977 432L982 435L989 437L992 436L997 431M1033 699L1038 696L1039 690L1043 685L1043 682L1050 678M1262 741L1269 741L1275 742L1283 738L1288 742L1288 745M1117 639L1121 633L1125 627L1127 625L1127 621M1379 474L1383 470L1389 467L1392 463M824 807L828 806L828 798L828 789M880 440L881 436L882 430L887 425L888 418L891 410M1588 645L1591 640L1596 638L1603 638L1609 642M1554 455L1561 452L1564 456L1565 461M1598 301L1606 297L1607 291M1225 455L1228 449L1228 441L1230 436L1233 435M1487 288L1488 282L1486 278M1419 382L1425 375L1432 370M1194 560L1194 553L1195 547L1204 545L1208 546M1633 415L1631 410L1630 403L1632 395M1616 728L1621 731L1622 739L1625 745M1030 336L1035 336L1038 332L1046 329L1053 332M1365 759L1369 759L1375 758L1380 755L1384 753M1280 771L1283 768L1283 762L1289 760L1295 753L1296 749M1610 292L1614 290L1617 282M1548 529L1552 528L1557 524L1562 518M1133 719L1137 718L1144 713L1148 711L1153 712M1005 701L1013 697L1018 699L1023 704M948 522L952 517L957 512L956 504M1166 427L1173 421L1177 415L1181 412L1188 407L1191 403M1408 708L1415 703L1417 700L1418 692L1420 687M1637 370L1643 375L1646 374L1654 373L1662 370M931 525L937 527L936 535L929 538L929 542M1115 424L1119 421L1122 416L1125 412L1127 408L1129 403L1130 398L1131 394M1050 406L1053 402L1057 399L1059 395L1062 390L1064 386L1069 383L1073 381L1077 378L1081 375L1085 372M1030 441L1035 440L1039 438L1044 437L1049 435L1054 434L1059 433L1064 431L1068 430L1073 430L1078 428M937 523L942 521L945 517L950 515L953 511L956 507L960 504M1221 367L1225 365L1230 365L1235 365L1240 365L1245 366L1250 367L1255 367M817 607L821 605L826 603L831 604L836 605L841 606L846 606L851 608M964 460L969 459L974 458L978 456L983 455L988 454L993 453M1031 428L1035 426L1040 426L1045 428L1049 431L1053 434L1057 436L1062 437L1067 439L1072 439L1077 440M1191 362L1195 360L1200 358L1205 358L1210 356L1215 355L1220 355L1225 355M876 531L880 528L885 527L890 527L895 526M1058 409L1060 404L1063 400L1067 398L1071 395L1074 391M949 502L952 498L956 495L960 492L965 490L969 488L974 487L979 487L984 487M838 533L841 529L844 526L849 523L853 522L858 522L863 522L868 523L873 523M818 590L822 588L826 585L831 582L834 578L837 574M876 549L880 545L882 541L884 536L887 532L889 527L891 523L894 519L896 514M1107 399L1111 396L1116 394L1120 392L1124 389L1128 386L1132 383L1136 379L1139 376L1144 373M816 723L819 719L823 715L825 711L828 707M962 441L965 437L970 435L975 434L980 433M909 551L914 551L919 550L924 550L929 549L934 549M835 614L839 610L843 607L846 603L851 601M812 619L817 616L821 613L825 611L830 609L834 606L839 604L843 603L848 600L852 598L857 596M1126 379L1131 377L1135 374L1139 371L1143 369L1147 365L1151 362L1154 358L1157 354L1160 350L1163 346M954 443L958 440L962 437L967 436L972 434L976 432L981 430L985 427L988 423L991 419L995 416L998 412M1223 358L1227 355L1230 351L1233 347L1235 343L1237 338L1239 334L1241 329L1243 324L1246 320L1248 316L1250 311M885 555L889 553L894 551L899 549L904 548L908 546L913 544M946 443L951 442L956 441L961 441L965 441L970 442M886 517L891 514L895 512L900 509L904 507L908 505L912 501L916 498L921 497M1141 404L1146 403L1151 403L1156 402L1161 403L1166 402L1171 401L1175 400M1078 418L1082 415L1086 412L1089 408L1093 405L1097 402L1102 401L1107 399L1111 396M926 476L930 472L932 468L934 463L935 458L935 453L936 448L936 443L937 438L937 433M959 437L963 434L968 432L973 431L978 430L983 430L988 430L993 430L998 430M818 635L822 631L824 627L826 623L827 618L826 613L827 608L827 603L827 598L828 593L831 589M1162 373L1167 370L1171 368L1176 365L1180 362L1184 360L1188 358M1009 382L1012 378L1017 376L1021 373L1026 372L1031 370L1036 371L1041 371L1045 370L1050 370L1055 370L1060 370M1071 448L1076 446L1080 443L1083 439L1086 436L1091 434M812 691L816 687L819 684L822 679L824 675L824 670L825 665L826 660L828 656L830 651L832 647M983 523L988 522L993 521L998 521L1003 522L1008 523M969 519L973 517L978 515L983 515L988 514L993 516L997 518M1211 386L1215 384L1220 383L1225 381L1230 380L1235 378L1239 376L1243 373L1247 370M981 436L984 432L988 429L992 426L996 423L1001 422L1006 421L1011 421L1016 422L1020 424L1024 427L1028 430M1040 470L1044 468L1047 464L1051 461L1055 458L1059 455L1063 452L1067 448L1071 446L1075 443M927 508L931 505L934 501L938 498L942 495L946 492L950 489L954 486L958 483L962 480L967 478M1203 357L1205 353L1207 348L1210 344L1212 340L1215 336L1218 332L1221 328L1222 323L1224 318L1225 313L1228 309M859 615L863 611L866 608L870 605L875 603L880 602L885 602L890 601L895 599L899 598L904 598L909 598M1148 403L1152 400L1156 397L1160 395L1165 393L1170 392L1175 391L1180 391L1185 390L1190 390L1195 390M860 528L865 525L869 523L874 521L879 520L883 518L887 515L890 511L893 507M891 503L894 499L896 495L899 491L902 487L904 482M868 554L872 552L877 549L881 547L886 545L890 543L895 543L900 544L905 545" fill="none" stroke="#2e3a34" stroke-width="1" stroke-dasharray="1 2" opacity="0.6"/>
<path d="M918 517L922 523L926 527L928 531L929 538M922 568L925 567L930 560L935 554L940 557M805 741L806 738L805 729L803 724L798 717L797 709M1029 651L1034 648L1037 645L1041 644L1044 643M879 745L878 738L876 732M952 745L956 745L965 746L973 747L980 745M941 707L943 701L946 696L949 692M894 549L896 547L899 539L896 531L893 524M954 710L957 709L963 708L967 703L968 700L970 694M963 774L966 766L965 762L962 761M839 769L846 767L849 767L853 767L858 766L861 763M898 790L895 788L893 783L888 780M942 767L947 763L949 756L953 748L950 740M846 819L851 818L853 814L855 808M876 656L881 656L883 660L888 663L892 663M990 797L995 796L1000 791L1005 790L1008 790M844 664L847 661L850 658L845 650L839 650M996 594L998 589L1000 583L1005 578L1013 577M835 759L837 765L834 772L830 772L826 775L823 774M964 811L964 805L962 800M912 653L915 648L917 645L912 641L911 637L913 630M847 687L852 683L859 679M931 572L937 565L945 568L949 569L953 566L957 559M975 472L978 470L985 472L989 478L991 480M930 553L936 553L944 555L947 560M890 531L890 528L882 523L880 517M890 596L899 598L902 604L906 606M853 462L849 467L845 464M838 598L841 594L844 590M887 640L891 637L894 635M1012 741L1018 735L1024 732L1027 727M868 646L870 641L866 632L864 629L859 633L856 637M822 721L825 722L832 725M933 550L937 553L941 554L948 556M828 805L827 797L827 792L828 786M850 787L855 783L859 780L865 777L871 774M811 565L815 561L819 554L819 548L812 543L806 538M905 760L907 751L908 746L907 742M868 536L867 531L866 524L863 517L861 509M896 627L901 622L908 625L915 628M821 493L829 491L837 488L839 484L846 479M959 481L966 476L969 468L976 463L979 462L985 459M812 810L817 808L822 805L826 801M1023 629L1031 633L1037 628L1039 626M887 458L894 454L900 457L903 464M830 529L839 528L841 531L844 536L846 542M982 504L987 504L991 505L999 509L1005 509L1007 511M847 747L850 743L853 741M858 750L861 746L862 739L862 733L861 727M867 495L870 491L876 487L880 484L882 482M951 772L956 769L959 766M958 733L961 730L966 731L973 732L976 733M1015 467L1018 463L1025 461M835 676L842 678L846 678L850 684M1025 454L1028 449L1028 444L1032 440L1033 434M866 770L862 777L864 780L868 784L875 787M975 673L984 673L979 681L974 682L969 682M1016 610L1021 607L1028 606M868 460L875 460L878 460L881 463L886 459L888 456M801 491L806 493L813 494L816 494L820 496L822 499M877 636L885 634L885 638L886 643L885 652M900 483L903 477L904 468M813 718L820 717L823 718L830 717M942 813L950 811L954 811L959 805L961 801M970 804L973 807L978 808M841 604L847 599L853 600L857 599M852 749L855 744L863 741M814 495L819 494L823 493L830 488L833 491L841 491M914 491L920 487L925 480L929 476L934 472M900 584L902 582L903 574M1013 465L1017 459L1024 457L1026 453M828 419L836 422L842 428L847 433L851 436M942 508L950 508L951 512L955 518L953 521L950 525M962 790L968 795L968 798L977 798L981 800M974 499L975 495L976 488L974 484M869 787L876 787L882 781M860 644L865 645L871 649L874 650M1002 537L1008 536L1013 537L1021 537L1025 540M927 566L930 561L931 557M998 432L1002 430L1007 428L1011 425L1016 423L1019 420L1024 417M1012 382L1015 378L1019 374L1023 371L1026 367L1030 364M1188 383L1192 380L1195 376L1199 373L1203 370L1207 367M980 511L985 509L989 506L993 504L998 503L1003 500L1007 499M829 666L831 661L833 656L834 652L836 647L838 642L838 637M834 642L838 639L841 636L845 632L850 630L854 628L859 626M938 546L942 544L947 542L952 541L957 540L961 539L966 536L970 533L974 530M892 597L895 594L899 590L901 585L903 581L905 576L908 572L910 568L914 564L917 561L920 557L923 552M880 595L884 592L888 589L892 586L896 583L900 580L904 577M1030 389L1034 386L1038 383L1041 379L1044 375L1048 371M1040 469L1044 466L1047 462L1050 458L1054 455L1058 451L1062 449L1066 447L1071 446L1075 443L1080 440M852 587L856 583L860 581L865 579L869 577L874 576L879 575L884 573L889 573L893 571L898 568L902 566M954 503L958 502L963 503L968 503L973 503L978 503L983 504L988 505L993 507L998 508M1000 416L1004 414L1007 409L1009 405L1011 400L1015 397L1018 393L1021 389L1024 385L1028 382L1032 379M1149 357L1151 353L1155 350L1158 345L1161 342L1165 339L1169 336M888 563L892 560L894 555L897 551L900 547L903 543L907 540L911 538L915 534L919 531L923 528L927 525M996 474L1000 471L1004 468L1008 465L1012 463L1016 459L1018 455L1022 452L1025 448L1028 444L1031 439L1033 435M965 498L969 496L974 494L978 491L982 488L985 484L988 480L991 476M888 563L892 561L897 560L902 558L907 557L911 556L915 553M1157 382L1161 380L1166 379L1171 377L1176 377L1181 376L1185 374L1189 371M874 557L878 555L883 553L887 550L891 547L895 545L899 542L902 537L903 533L905 528L907 523L910 519M823 707L827 704L831 701L834 697L838 694L841 689L844 686L847 682M858 576L862 572L866 570L871 569L876 568L880 566L885 564L890 562L893 558L897 555L901 552L905 549M1204 345L1206 341L1209 337L1213 333L1217 330L1219 325L1221 321M986 382L990 379L994 376L998 373L1002 370M1158 387L1162 384L1165 380L1168 375L1171 372M1164 380L1168 377L1172 374L1176 371L1181 369L1185 368L1190 366L1195 364L1199 363L1204 362M852 577L857 575L862 574L866 572L871 572L876 572L881 571L886 570L891 569L896 569M934 479L938 475L941 471L944 468L947 464L950 459L953 456L957 452L960 448L963 445M878 518L882 515L886 512L890 509L894 506L897 502L901 499M1212 354L1216 352L1221 350L1226 349L1230 346L1234 343L1237 338L1240 335L1244 332L1247 328L1250 324L1254 321M1091 395L1096 394L1101 394L1106 393L1110 392L1115 390L1120 389L1124 386L1129 384L1134 383M1026 385L1030 382L1034 380L1038 377L1041 372L1044 369L1047 365L1050 361L1052 356M1177 399L1181 397L1185 394L1188 390L1190 385L1190 380L1190 375L1191 370L1191 365L1192 361L1194 356L1197 351M985 373L989 370L994 369L998 366L1003 364L1007 362M892 593L895 590L899 586L902 583L905 579L909 575L910 570L911 566L912 561L913 556L913 551L914 546M984 424L988 421L992 419L996 416L1000 412L1003 408L1005 404L1008 400L1011 396M970 449L974 447L979 444L982 441L987 438L991 436L996 434L1000 431M899 487L902 483L906 480L909 476L910 471L911 466L911 461M1034 428L1039 426L1043 424L1048 423L1053 422L1058 421M829 587L832 583L836 580L840 577L843 573L847 569L850 566M895 566L899 563L902 559L904 554L906 550" fill="none" stroke="#a04848" stroke-width="0.8" opacity="0.6"/>
<rect x="780" y="260" width="900" height="600" filter="url(#speck)" opacity="0.7"/>
<path d="M819 643.5 H907 M966.5 600 V660 M974 759.5 H1161 M1085.5 640 V813 M1161 641.5 H1214 M1000 402.5 H1145 M1206.5 335 V384 M1150 693.5 H1236 M1420 628.5 H1560" stroke="#707878" stroke-width="1" opacity="0.6"/>
<polyline points="1302.0,392.0 1320.0,410.0 1342.0,434.0" fill="none" stroke="#8ea3c0" stroke-width="9" stroke-linejoin="round" stroke-linecap="butt" opacity="0.75"/>
<polyline points="1282.0,330.0 1310.0,345.0 1345.0,355.0" fill="none" stroke="#8ea3c0" stroke-width="6" stroke-linejoin="round" stroke-linecap="butt" opacity="0.75"/>
<polyline points="1230.0,380.0 1260.0,392.0 1285.0,415.0" fill="none" stroke="#8ea3c0" stroke-width="6" stroke-linejoin="round" stroke-linecap="butt" opacity="0.75"/>
<polyline points="1043.0,497.0 1055.0,482.0 1066.0,470.0 1080.0,462.0" fill="none" stroke="#8ea3c0" stroke-width="10" stroke-linejoin="round" stroke-linecap="butt" opacity="0.75"/>
<polyline points="1101.0,504.0 1105.0,481.0 1112.0,463.0 1119.0,451.0 1133.0,441.0 1148.0,430.0 1167.0,422.0" fill="none" stroke="#8ea3c0" stroke-width="12" stroke-linejoin="round" stroke-linecap="butt" opacity="0.75"/>
<polyline points="1087.0,517.0 1098.0,532.0 1106.0,546.0 1113.0,563.0 1119.0,577.0 1126.0,586.0" fill="none" stroke="#8ea3c0" stroke-width="8" stroke-linejoin="round" stroke-linecap="butt" opacity="0.75"/>
<polyline points="1086.0,329.0 1100.0,340.0 1117.0,354.0" fill="none" stroke="#8ea3c0" stroke-width="12" stroke-linejoin="round" stroke-linecap="butt" opacity="0.75"/>
<polyline points="983.0,675.0 997.0,696.0 1015.0,741.0 1050.0,720.0 1085.0,704.0 1109.0,694.0 1137.0,691.0 1165.0,695.0" fill="none" stroke="#8ea3c0" stroke-width="7" stroke-linejoin="round" stroke-linecap="butt" opacity="0.75"/>
<polyline points="1486.0,389.0 1470.0,420.0 1462.0,458.0 1453.0,496.0 1477.0,519.0 1445.0,557.0 1448.0,586.0" fill="none" stroke="#8ea3c0" stroke-width="8" stroke-linejoin="round" stroke-linecap="butt" opacity="0.75"/>
<polyline points="1332.0,625.0 1359.0,676.0 1377.0,715.0 1350.0,724.0 1326.0,733.0" fill="none" stroke="#8ea3c0" stroke-width="6" stroke-linejoin="round" stroke-linecap="butt" opacity="0.75"/>
<polyline points="1167.0,422.0 1173.0,413.0 1196.0,402.0 1216.0,399.0 1218.0,385.0 1229.0,366.0 1232.0,346.0" fill="none" stroke="#8ea3c0" stroke-width="6" stroke-linejoin="round" stroke-linecap="butt" opacity="0.75"/>
<polygon points="851.6,719.8 855.5,698.0 861.7,682.6 871.0,669.4 880.3,657.8 886.5,653.0 898.0,649.0 907.8,643.6 917.5,639.7 937.0,641.6 956.3,648.4 975.7,655.2 991.2,664.0 989.2,670.7 966.0,666.8 946.6,666.8 927.2,667.8 920.0,668.6 909.8,673.3 899.0,681.0 892.7,683.3 888.0,679.5 881.9,677.0 874.0,682.6 865.6,698.0 857.8,716.0" fill="#bed4e8"/>
<polygon points="939.4,563.6 954.0,548.0 968.5,532.6 983.0,518.0 997.5,508.4 1012.0,508.4 1014.0,512.3 1002.4,524.0 987.8,535.5 973.3,550.0 958.8,561.7 941.3,567.5" fill="#bed4e8"/>
<polygon points="1019.0,497.0 1030.0,490.0 1042.0,486.0 1040.0,492.0 1028.0,499.0" fill="#bed4e8"/>
<polygon points="1375.6,291.7 1392.6,304.5 1406.5,315.2 1414.0,322.6 1424.6,329.0 1440.6,332.2 1456.6,335.4 1465.0,344.0 1472.6,350.4 1483.3,357.8 1499.3,364.2 1505.6,371.7 1504.6,374.9 1488.6,376.0 1467.3,378.0 1456.6,381.3 1440.6,365.3 1424.6,352.5 1403.3,333.3 1390.5,330.0 1371.3,330.0 1359.6,318.0 1360.0,313.0 1371.3,315.2 1387.3,322.6 1400.0,326.0 1390.0,315.0 1378.0,300.0 1372.0,292.0" fill="#bed4e8"/>
<polygon points="1287.0,414.8 1298.7,433.7 1314.4,445.0 1334.0,449.4 1350.6,451.0 1357.0,449.4 1357.0,452.7 1342.4,457.6 1330.0,456.0 1312.7,452.7 1296.0,442.8 1286.4,426.3 1284.7,416.4" fill="#bed4e8"/>
<polygon points="1385.0,470.0 1405.0,468.0 1425.0,475.0 1422.0,480.0 1400.0,477.0 1385.0,476.0" fill="#bed4e8"/>
<polygon points="1243.0,497.0 1255.0,500.0 1265.0,493.0 1275.0,485.0 1270.0,462.0 1278.0,462.0 1284.0,488.0 1298.0,505.0 1300.0,515.0 1300.0,535.0 1296.0,538.0 1292.0,515.0 1280.0,513.0 1265.0,512.0 1255.0,517.0 1245.0,507.0" fill="#bed4e8"/>
<polygon points="1122.0,581.0 1135.0,586.0 1155.0,591.0 1170.0,587.0 1195.0,580.0 1220.0,576.0 1222.0,581.0 1195.0,588.0 1165.0,596.0 1140.0,597.0 1120.0,590.0" fill="#bed4e8"/>
<polygon points="1326.0,733.0 1340.0,730.0 1336.0,745.0 1322.0,772.0 1316.0,780.0 1308.0,788.0 1299.6,796.7 1298.5,807.0 1300.6,821.7 1291.0,821.7 1289.0,805.0 1283.0,798.8 1275.6,792.5 1278.8,789.0 1293.0,788.0 1308.0,771.7 1316.0,750.0" fill="#bed4e8"/>
<polygon points="1415.0,757.0 1425.0,745.0 1434.0,732.0 1440.0,735.0 1432.0,752.0 1422.0,764.0" fill="#bed4e8"/>
<polygon points="1270.0,459.0 1278.0,460.0 1281.0,470.0 1280.0,480.0 1273.0,479.0 1268.0,468.0" fill="#bed4e8"/>
<polygon points="1012.0,528.0 1026.0,520.0 1030.0,524.0 1016.0,535.0" fill="#bed4e8"/>
<polyline points="1087.0,517.0 1089.4,521.0 1091.5,525.2 1095.7,527.9 1098.0,532.0 1100.4,535.3 1101.2,539.5 1104.3,542.4 1106.0,546.0 1105.7,551.1 1110.2,554.2 1110.5,559.1 1113.0,563.0 1113.9,568.2 1118.1,571.9 1119.0,577.0 1123.1,581.1 1126.0,586.0" fill="none" stroke="#5b7894" stroke-width="2.4" stroke-linejoin="round" stroke-linecap="round"/>
<polyline points="1112.0,486.0 1114.3,489.7 1116.6,493.3 1118.7,497.1 1121.7,500.2 1124.8,503.3 1127.0,507.0 1130.7,510.1 1133.3,514.2 1136.7,517.6 1140.0,521.0 1143.9,524.2 1147.8,527.3 1152.0,530.0 1155.4,532.7 1159.9,533.0 1163.0,536.3 1167.2,537.3 1171.0,539.0" fill="none" stroke="#5b7894" stroke-width="1.8" stroke-linejoin="round" stroke-linecap="round"/>
<polyline points="1127.0,507.0 1124.0,511.2 1121.4,515.5 1122.0,521.0" fill="none" stroke="#5b7894" stroke-width="1.4" stroke-linejoin="round" stroke-linecap="round"/>
<polyline points="1140.0,521.0 1141.4,524.8 1144.8,527.9 1144.3,532.4 1145.2,536.4 1147.0,540.0" fill="none" stroke="#5b7894" stroke-width="1.4" stroke-linejoin="round" stroke-linecap="round"/>
<polyline points="1130.0,444.0 1133.0,440.9 1136.7,438.6 1140.4,436.5 1144.3,434.6 1146.7,430.7 1150.0,428.0 1154.1,425.9 1158.0,423.6 1160.9,419.6 1164.7,417.0 1169.2,415.6 1173.0,413.0 1176.7,410.8 1180.2,408.3 1184.2,406.9 1187.4,403.8 1192.8,405.1 1196.0,402.0 1200.1,402.0 1204.2,402.3 1207.6,397.4 1212.0,399.6 1216.0,399.0 1217.0,394.4 1216.5,389.5 1218.0,385.0 1221.1,381.7 1222.4,377.4 1225.1,373.9 1226.8,369.8 1229.0,366.0 1229.3,361.9 1229.6,357.9 1230.9,354.0 1233.0,350.2 1232.0,346.0 1235.9,341.9 1240.0,338.0" fill="none" stroke="#5b7894" stroke-width="2.4" stroke-linejoin="round" stroke-linecap="round"/>
<polyline points="1117.0,354.0 1121.0,356.0 1125.2,357.4 1129.6,358.1 1134.3,358.4 1137.5,362.5 1142.0,363.0 1145.9,359.6 1151.8,365.3 1155.3,360.1 1159.7,358.8 1164.4,359.0 1168.4,356.1 1173.0,356.0 1176.8,358.2 1181.0,356.9 1185.1,356.7 1188.8,360.0 1193.2,356.3 1196.9,359.9 1201.0,359.0 1204.1,356.0 1208.0,354.7 1212.4,354.3 1214.6,349.5 1219.1,349.5 1223.0,348.0 1226.8,346.4 1231.0,346.2 1234.5,343.8 1238.0,341.5 1242.2,341.2 1247.2,343.4 1250.0,339.0 1254.5,338.3 1259.2,338.1 1263.3,336.1 1267.2,333.4 1270.9,330.2 1276.0,331.3 1280.0,329.0 1283.7,326.8 1288.2,328.3 1292.1,326.8 1295.7,323.9 1299.9,324.0 1304.1,324.1 1307.4,320.0 1312.0,321.9 1315.6,318.9 1320.0,320.0 1324.5,319.9 1328.7,318.4 1333.2,318.6 1337.3,316.9 1341.7,316.5 1346.2,316.6 1350.6,316.0 1354.7,314.0 1359.0,313.0" fill="none" stroke="#5b7894" stroke-width="2.1" stroke-linejoin="round" stroke-linecap="round"/>
<polyline points="1116.0,351.0 1113.3,355.3 1115.2,359.8 1115.7,364.3 1115.7,368.8 1112.7,373.0 1113.5,377.5 1114.0,382.0" fill="none" stroke="#5b7894" stroke-width="1.6" stroke-linejoin="round" stroke-linecap="round"/>
<polyline points="1223.0,401.0 1224.6,404.9 1227.4,408.3 1226.8,413.2 1229.0,416.8 1229.9,421.0 1231.7,424.9 1235.0,428.0 1235.8,432.1 1235.8,436.3 1238.4,439.9 1239.0,444.0 1241.4,447.7 1241.6,451.9 1242.6,455.8 1243.0,460.0 1246.5,462.9 1248.2,467.4 1252.0,470.0" fill="none" stroke="#5b7894" stroke-width="1.9" stroke-linejoin="round" stroke-linecap="round"/>
<polyline points="1171.0,419.0 1171.8,423.1 1173.3,427.1 1173.6,431.3 1174.6,435.3 1176.0,439.3 1175.0,443.8 1177.0,447.6 1178.4,451.6 1178.8,455.8 1179.0,460.0 1180.8,463.8 1180.3,468.0 1181.0,472.0 1182.4,475.8 1182.0,480.0" fill="none" stroke="#5b7894" stroke-width="1.4" stroke-linejoin="round" stroke-linecap="round"/>
<polyline points="1198.0,413.0 1196.4,417.5 1197.9,421.5 1197.8,425.7 1201.6,429.4 1200.4,433.8 1201.5,437.8 1204.1,441.7 1202.4,446.1 1203.1,450.2 1203.8,454.4 1204.0,458.6 1205.1,462.6 1203.7,467.0 1206.8,470.8 1207.0,475.0" fill="none" stroke="#5b7894" stroke-width="1.4" stroke-linejoin="round" stroke-linecap="round"/>
<polyline points="1114.0,449.0 1113.7,453.1 1110.7,456.4 1110.9,460.6 1110.0,464.5 1109.2,468.4 1108.8,472.5 1106.4,476.0 1106.0,480.0" fill="none" stroke="#5b7894" stroke-width="1.4" stroke-linejoin="round" stroke-linecap="round"/>
<polyline points="1233.0,379.0 1236.5,381.6 1241.1,381.9 1243.9,386.1 1248.8,385.6 1252.6,387.6 1256.8,388.8 1260.0,392.0 1263.4,394.6 1266.1,397.9 1269.2,400.9 1273.8,402.1 1274.0,408.1 1277.4,410.7 1281.3,412.8 1285.0,415.0" fill="none" stroke="#5b7894" stroke-width="1.8" stroke-linejoin="round" stroke-linecap="round"/>
<polyline points="1174.0,430.0 1176.9,433.7 1176.7,438.4 1178.9,442.3 1179.7,446.8 1180.6,451.2 1183.0,455.0 1182.5,459.8 1183.0,464.5 1185.0,469.0 1185.8,474.4 1187.9,479.2 1192.0,483.0" fill="none" stroke="#5b7894" stroke-width="1.4" stroke-linejoin="round" stroke-linecap="round"/>
<polyline points="983.0,675.0 983.5,679.7 988.9,681.2 990.3,685.3 991.4,689.7 994.5,692.6 997.0,696.0 998.5,699.8 1000.6,703.2 1001.0,707.5 1004.2,710.5 1005.1,714.5 1006.5,718.3 1006.7,722.6 1009.8,725.7 1009.8,730.0 1010.4,734.2 1013.8,737.1 1015.0,741.0 1017.9,737.9 1022.3,737.2 1025.7,735.0 1029.3,733.0 1032.7,730.8 1034.9,726.6 1038.3,724.3 1043.1,724.4 1045.8,721.0 1050.0,720.0 1053.2,716.7 1058.0,716.9 1061.6,714.4 1065.5,712.8 1068.5,709.1 1072.9,708.3 1076.7,706.4 1081.2,705.9 1085.0,704.0 1088.9,702.1 1092.1,698.6 1096.8,698.5 1100.5,696.1 1105.4,696.7 1109.0,694.0 1112.9,693.0 1116.8,691.2 1120.7,689.9 1125.2,694.3 1128.9,690.5 1133.0,691.5 1137.0,691.0 1140.8,693.1 1144.8,693.4 1149.0,693.1 1153.1,692.7 1157.0,693.5 1161.0,694.8 1165.0,695.0 1169.1,693.6 1173.2,692.5 1177.7,693.8 1182.0,693.8 1186.0,692.0 1191.4,692.5 1191.6,685.3 1196.5,685.0 1201.0,684.3 1202.3,678.7 1206.1,676.8 1209.4,674.2 1214.5,674.4 1216.4,669.7 1219.2,666.3 1224.0,666.0 1226.2,661.6 1230.7,660.4 1235.1,659.1 1238.0,655.5 1240.2,651.3 1245.3,650.8 1247.0,645.8 1251.6,644.7 1254.4,641.2 1259.0,640.0" fill="none" stroke="#5b7894" stroke-width="2.6" stroke-linejoin="round" stroke-linecap="round"/>
<polyline points="1331.0,624.0 1333.7,628.7 1335.0,634.0 1336.7,637.9 1340.5,640.8 1338.6,646.5 1344.2,648.5 1345.3,652.7 1346.4,656.9 1348.5,660.7 1350.5,664.4 1352.7,668.1 1353.3,672.6 1356.0,676.0 1358.8,679.0 1359.4,683.3 1362.5,686.2 1364.0,690.0 1364.4,694.3 1366.1,698.0 1367.8,701.7 1368.1,706.1 1372.2,708.7 1374.2,712.3 1375.3,716.3 1377.0,720.0 1372.7,722.2 1368.0,721.0 1363.6,722.4 1358.7,720.9 1354.9,726.1 1350.0,724.0 1345.8,725.0 1342.2,727.6 1337.9,728.3 1333.0,727.5 1330.6,733.2 1326.0,733.0" fill="none" stroke="#5b7894" stroke-width="2.4" stroke-linejoin="round" stroke-linecap="round"/>
<polyline points="1486.0,389.0 1484.3,393.1 1481.9,396.7 1481.1,401.2 1476.9,403.9 1475.2,407.9 1475.2,412.9 1472.1,416.2 1470.0,420.0 1468.7,424.1 1466.7,428.1 1465.8,432.3 1467.3,437.1 1465.3,441.1 1465.6,445.5 1462.2,449.2 1462.6,453.7 1462.0,458.0 1461.5,462.3 1461.5,466.8 1458.7,470.6 1457.4,474.7 1456.5,479.0 1455.8,483.3 1456.3,487.9 1455.2,492.1 1453.0,496.0 1455.8,499.0 1458.6,502.1 1463.9,502.7 1464.7,507.8 1466.5,511.9 1471.8,512.4 1474.6,515.5 1477.0,519.0 1475.7,523.3 1470.5,524.4 1468.9,528.4 1466.8,532.1 1464.0,535.2 1462.2,539.0 1458.3,541.2 1454.9,543.7 1453.4,547.8 1451.5,551.7 1448.9,554.9 1445.0,557.0 1446.7,561.0 1446.5,565.2 1445.8,569.5 1447.4,573.5 1448.8,577.5 1447.1,581.9 1448.0,586.0" fill="none" stroke="#5b7894" stroke-width="2.8" stroke-linejoin="round" stroke-linecap="round"/>
<polyline points="1259.0,640.0 1261.0,636.0 1265.3,634.3 1267.3,630.3 1272.7,629.7 1273.9,624.9 1278.9,623.9 1281.0,620.0 1282.6,615.6 1285.6,612.6 1289.0,610.0 1293.2,609.4 1296.1,605.3 1300.9,606.3 1305.1,605.8 1308.3,602.5 1312.3,601.3 1315.6,598.3 1320.4,599.1 1323.4,595.3 1327.9,595.6 1331.2,592.6 1335.1,591.3 1339.7,591.5 1343.8,590.6 1347.3,588.2 1350.3,584.3 1355.6,586.8 1359.0,584.0 1363.2,582.9 1367.8,583.2 1371.2,579.8 1376.0,580.5 1378.9,575.7 1383.3,575.3 1387.1,573.0 1391.7,573.2 1395.0,569.6 1399.9,570.4 1404.2,569.9 1407.7,566.7 1412.0,566.0 1416.6,565.7 1420.5,563.6 1424.5,561.6 1429.2,561.7 1433.5,560.5 1437.6,558.9 1441.9,557.7 1446.1,556.5 1450.0,554.0" fill="none" stroke="#5b7894" stroke-width="1.2" stroke-linejoin="round" stroke-linecap="round"/>
<polyline points="1307.0,636.0 1310.6,639.4 1315.6,640.3 1319.5,643.3 1324.0,645.0 1326.7,648.2 1330.1,650.6 1332.2,654.3 1335.9,656.4 1338.9,659.2 1342.0,662.0 1346.3,664.2 1347.9,669.4 1351.4,672.4 1355.6,674.8 1359.0,678.0" fill="none" stroke="#5b7894" stroke-width="1.6" stroke-linejoin="round" stroke-linecap="round"/>
<polyline points="1412.0,676.0 1408.5,679.1 1407.3,683.4 1406.3,687.8 1403.4,691.3 1403.6,696.3 1400.2,699.4 1399.0,703.7 1395.2,706.7 1394.0,711.0" fill="none" stroke="#5b7894" stroke-width="1.4" stroke-linejoin="round" stroke-linecap="round"/>
<polyline points="1436.0,693.0 1438.4,697.0 1440.9,701.0 1442.8,705.2 1443.7,709.9 1446.0,714.0" fill="none" stroke="#5b7894" stroke-width="1.4" stroke-linejoin="round" stroke-linecap="round"/>
<polyline points="1453.0,497.0 1448.7,496.0 1445.5,493.6 1443.8,489.1 1439.2,488.5 1434.9,487.7 1434.1,481.9 1430.1,480.6 1427.0,478.0" fill="none" stroke="#5b7894" stroke-width="1.8" stroke-linejoin="round" stroke-linecap="round"/>
<polyline points="1484.0,447.0 1487.7,449.0 1491.0,451.8 1495.5,452.7 1498.8,455.4 1502.2,458.1 1505.3,461.1 1510.4,460.9 1512.3,466.1 1516.2,467.8 1520.9,468.3 1524.3,470.9 1528.0,473.0" fill="none" stroke="#5b7894" stroke-width="1.8" stroke-linejoin="round" stroke-linecap="round"/>
<polyline points="1487.0,679.0 1491.0,676.9 1492.4,672.4 1495.7,669.7 1496.9,665.1 1501.0,663.0 1505.0,660.5 1508.2,657.2 1510.2,652.6 1514.5,650.5 1518.1,647.6 1521.0,644.0 1523.9,640.8 1527.7,638.5 1529.7,634.5 1534.3,632.9 1535.0,627.6 1539.2,625.7 1542.1,622.5 1545.2,619.5 1547.2,615.5 1551.1,613.3 1553.5,609.6 1557.0,607.0 1558.7,602.4 1563.8,602.6 1566.6,599.5 1570.9,598.7 1573.8,595.8 1576.6,592.8 1578.9,589.0 1584.0,589.2 1586.5,585.7 1590.1,583.7 1594.4,582.9 1596.3,578.5 1599.7,576.3 1603.0,574.0 1606.3,571.4 1610.4,570.3 1613.8,567.9 1618.3,567.7 1621.0,563.7 1624.9,562.2 1627.9,558.9 1633.0,560.0" fill="none" stroke="#5b7894" stroke-width="2.1" stroke-linejoin="round" stroke-linecap="round"/>
<polyline points="1437.0,694.0 1438.3,697.9 1440.8,701.1 1442.7,704.8 1445.6,707.7 1448.3,710.8 1450.9,713.9 1452.0,718.0" fill="none" stroke="#5b7894" stroke-width="1.6" stroke-linejoin="round" stroke-linecap="round"/>
<polyline points="1605.0,694.0 1601.7,696.5 1598.5,699.2 1594.4,700.4 1590.4,701.7 1587.0,703.9 1583.7,706.6 1580.3,708.8 1577.1,711.4 1573.1,712.9 1569.3,714.5 1565.3,715.8 1563.1,720.2 1558.7,720.8 1556.4,725.0 1552.4,726.4 1549.0,728.7 1545.0,730.0" fill="none" stroke="#5b7894" stroke-width="1.6" stroke-linejoin="round" stroke-linecap="round"/>
<polyline points="1379.0,473.0 1380.6,477.1 1379.2,481.0 1378.2,485.0 1377.9,489.0 1378.3,493.0 1380.2,497.1 1376.8,501.0 1377.3,505.0 1377.1,509.0 1376.9,513.0 1376.8,517.0 1378.1,521.0 1377.0,525.0 1376.8,529.3 1372.6,532.2 1373.0,536.7 1370.8,540.3 1369.7,544.2 1366.9,547.6 1367.4,552.1 1368.1,556.7 1365.0,560.0" fill="none" stroke="#5b7894" stroke-width="1.4" stroke-linejoin="round" stroke-linecap="round"/>
<polyline points="1327.0,376.0 1331.4,376.0 1335.0,378.0 1338.7,380.1 1342.2,382.2 1346.0,384.0 1350.0,385.0 1354.2,386.4 1358.4,387.6 1362.2,390.0 1366.2,391.9 1371.2,390.9 1374.7,394.0 1379.0,395.0 1382.9,397.0 1387.1,396.8 1391.3,396.7 1395.6,395.2 1399.6,396.6 1403.6,398.0 1408.0,396.1 1411.5,401.8 1415.7,401.5 1420.0,400.0 1423.8,401.5 1427.6,403.1 1429.0,408.2 1432.7,409.8 1436.6,411.1 1440.4,412.7 1443.2,415.8 1446.3,418.3 1450.0,420.0" fill="none" stroke="#5b7894" stroke-width="1.4" stroke-linejoin="round" stroke-linecap="round"/>
<polyline points="1288.0,324.0 1290.5,327.6 1294.7,328.5 1297.8,331.2 1303.2,330.0 1305.1,334.8 1308.3,337.2 1311.7,339.4 1315.6,340.8 1319.0,342.9 1322.5,344.9 1325.8,347.3 1330.8,346.8 1333.3,350.5 1335.9,353.9 1340.0,355.0" fill="none" stroke="#5b7894" stroke-width="1.4" stroke-linejoin="round" stroke-linecap="round"/>
<polyline points="1260.0,430.0 1260.0,434.2 1258.8,438.5 1262.9,442.5 1261.9,446.8 1260.3,451.2 1260.3,455.4 1261.0,459.6 1262.7,463.7 1262.0,468.0 1258.8,470.8 1255.5,473.5 1253.6,477.6 1250.0,480.0 1247.5,483.5 1244.1,486.1 1242.2,490.2 1239.5,493.5 1235.0,495.0 1230.7,495.2 1226.3,495.6 1222.2,496.8 1218.0,498.0 1213.7,495.6 1208.7,494.6 1204.5,492.0 1200.0,490.0 1198.1,485.5 1195.0,482.4 1190.5,480.7 1187.0,478.0 1185.2,473.5 1187.8,468.7 1184.8,464.3 1184.2,459.7 1185.0,455.0 1184.3,450.6 1182.9,446.5 1180.0,443.0" fill="none" stroke="#5b7894" stroke-width="1.9" stroke-linejoin="round" stroke-linecap="round"/>
<path d="M1087 517L1086 513L1085 509L1085 505L1083 501M1106 551L1103 554L1102 558L1100 562L1098 565L1095 568M1137 518L1138 514L1140 510L1144 509M1148 527L1149 524L1151 520L1153 516M1160 533L1161 529L1162 525L1165 522M1127 507L1131 507L1135 506L1138 504L1140 500M1140 521L1136 522L1133 524L1129 524L1125 523M1144 532L1146 529L1147 525L1149 521L1151 518L1153 514M1140 436L1141 440L1143 444L1146 446M1150 428L1152 432L1153 435L1155 439L1156 443L1158 446L1160 450L1162 453M1173 413L1169 412L1165 411L1161 410L1158 409L1154 407M1117 354L1116 350L1117 346L1119 343L1121 339L1120 335L1122 331M1155 360L1151 359L1148 357M1181 357L1179 353L1178 349L1177 346L1175 342L1173 339M1204 356L1202 352L1201 349M1250 339L1246 339L1242 341M1276 331L1273 328L1270 326L1266 324L1263 323L1259 321M1288 328L1288 332L1287 336L1285 340L1283 343L1282 347M1300 324L1301 320L1302 316L1305 313L1308 311L1312 311M1351 316L1348 313L1345 311M1114 378L1112 374L1112 370L1112 366L1114 362L1116 359M1223 401L1219 399L1217 396L1213 396L1209 395L1206 392M1227 413L1226 417L1225 421L1225 425M1243 460L1239 460L1235 460L1232 458L1230 455L1227 452M1171 419L1175 418L1178 416L1182 414L1185 411L1186 408M1174 431L1176 428L1180 428L1184 426M1175 444L1171 443L1168 440L1164 440L1160 440M1179 456L1181 452L1183 449L1185 445L1186 442L1188 438L1190 435M1201 438L1198 438L1194 438L1190 438L1186 437M1203 450L1199 448L1196 448L1192 447L1188 445M1233 379L1234 375L1238 373L1241 371L1245 369L1248 368M1244 386L1241 383L1238 381M983 675L981 672L979 668M997 696L997 692L997 688L999 684M1010 730L1012 727L1015 724L1018 721L1018 717M1015 741L1014 745L1013 749M1026 735L1022 734L1018 733L1015 731M1069 709L1066 706L1063 704L1059 706L1055 707L1051 707M1092 699L1090 702L1089 706M1105 697L1108 700L1107 703M1117 691L1113 689L1109 689L1107 686L1104 682L1104 678M1129 690L1126 688L1123 685L1121 681M1141 693L1140 689L1139 685L1137 682L1136 678M1153 693L1151 689L1149 686L1146 683L1143 680L1140 678L1137 675L1134 673M1201 684L1197 683L1193 683M1231 660L1227 660L1223 662L1220 665L1216 665M1240 651L1238 648L1234 646L1230 646L1227 643L1225 640L1221 640L1217 641M1252 645L1248 644L1244 642L1240 641L1236 640L1232 641L1229 642M1359 683L1355 683L1352 684L1348 683L1344 683L1340 683L1336 682M1368 706L1369 702L1370 698L1372 695L1376 695L1380 695L1384 695L1388 696M1368 721L1372 723L1375 722L1379 722L1383 723L1387 725M1342 728L1342 732L1343 736L1345 739L1348 742M1486 389L1490 388L1494 386L1497 386L1499 382L1501 379L1503 375L1503 371M1475 413L1479 412L1482 409L1485 407M1467 437L1471 436L1474 434L1478 431L1480 428M1461 462L1458 460L1455 457L1453 454M1457 475L1455 472L1452 469L1450 465L1447 464L1443 463L1439 463L1435 463M1465 508L1467 504L1470 502L1474 501L1478 500M1475 515L1471 517L1467 517L1463 518L1460 520L1456 522M1471 524L1475 524L1478 524L1482 523M1455 544L1459 543L1460 539L1462 536L1464 532M1449 555L1448 551L1449 547L1449 543L1450 539L1452 535L1453 532M1447 565L1451 565L1455 564L1458 566L1462 567L1466 569L1469 571L1472 574M1259 640L1262 642L1265 645L1266 649L1266 653L1263 656L1261 660M1286 613L1286 617L1288 620L1290 623L1291 627L1293 631M1296 605L1295 601L1296 597L1298 594L1300 591M1308 603L1307 606L1306 610L1303 613L1300 615L1297 617L1295 621L1292 624M1331 593L1330 596L1329 600L1329 604M1344 591L1340 589L1336 587L1334 584L1333 580M1356 587L1355 591L1352 594L1349 597L1346 599L1345 603L1342 606L1338 607M1368 583L1364 582L1360 582M1412 676L1416 677L1419 679L1422 682L1426 683L1429 685L1433 686L1437 688M1453 497L1456 495L1460 493M1434 482L1435 486L1437 489L1439 493M1495 453L1492 453L1488 453L1484 452L1481 449L1477 447L1473 446M1516 468L1513 466L1509 464M1496 670L1492 670L1488 671L1485 673L1481 675L1478 677L1474 678M1534 633L1537 636L1539 640L1542 642L1545 644L1549 646L1552 648M1551 613L1554 616L1557 619L1561 620L1564 621M1559 602L1557 599L1554 596L1552 593L1550 589L1548 586L1546 582M1571 599L1570 603L1567 606L1565 609M1590 584L1587 586L1583 587L1580 589L1576 591M1600 576L1599 572L1597 569L1595 565L1595 561L1594 557L1591 554M1451 714L1454 711L1456 708L1458 705M1605 694L1603 690L1602 686L1600 683M1594 700L1598 702L1602 702L1606 701M1573 713L1577 715L1580 716L1584 718L1587 720L1591 722M1563 720L1561 717L1558 714L1555 712L1551 711L1547 712L1544 715L1543 718M1552 726L1556 729L1558 732L1561 735L1563 738L1564 742L1565 746L1565 750M1379 473L1382 471L1384 467L1387 464L1389 461L1391 457L1394 455L1398 453M1377 509L1375 506L1372 503L1369 500L1365 499L1362 498L1358 495L1356 492M1370 544L1373 542L1377 540L1380 539L1384 541L1388 542M1327 376L1324 374L1320 372L1316 373L1312 374L1309 373M1339 380L1335 382L1332 384L1328 386L1325 388L1321 390L1318 393M1350 385L1346 385L1342 386L1338 387L1334 388L1330 387L1326 386M1375 394L1375 398L1374 402M1400 397L1401 393L1403 390L1405 386M1411 402L1411 406L1411 410L1411 414L1408 417M1424 401L1421 405L1418 407L1415 409L1413 413L1411 416M1433 410L1430 413L1428 416L1427 420M1443 416L1441 419L1438 422L1435 425L1434 428M1260 430L1259 426L1261 423L1265 422L1269 421L1272 420L1276 419L1280 417M1260 455L1258 452L1256 449L1253 446M1262 468L1261 464L1259 461L1255 459M1254 478L1258 478L1262 479L1265 479L1269 479L1272 476L1275 473L1278 472M1244 486L1248 487L1252 489L1255 491L1258 493L1261 496M1235 495L1238 492L1238 488L1241 485L1245 484L1249 483L1252 485M1198 486L1194 487L1191 488L1187 489L1183 490L1179 489L1175 491L1172 493M1187 478L1184 480L1181 483M1185 464L1181 465L1177 465L1173 464L1169 466L1166 468L1162 467" fill="none" stroke="#6d88a4" stroke-width="1.1" stroke-linejoin="round"/>
</g>
<polygon points="1326.0,733.0 1340.0,730.0 1336.0,745.0 1322.0,772.0 1316.0,780.0 1308.0,788.0 1299.6,796.7 1298.5,807.0 1300.6,821.7 1291.0,821.7 1289.0,805.0 1283.0,798.8 1275.6,792.5 1278.8,789.0 1293.0,788.0 1308.0,771.7 1316.0,750.0" fill="#bed4e8"/>
<path d="M862 287.5 H899 M954 286.5 H962 M1416 826.5 H1470 M1489 827 H1493" stroke="#b8b8b8" stroke-width="1"/>
</svg>
<!-- status -->
<div class="sb" style="left:1px;width:98px;padding-left:5px">MapsID: 3878</div>
<div class="sb" style="left:102px;width:77px">png</div>
<div class="sb" style="left:182px;width:97px">MinZoom: 8</div>
<div class="sb" style="left:282px;width:97px">MaxZoom: 18</div>
<div class="sb" style="left:382px;width:97px">TileSize: 256</div>
<div class="sb" style="left:482px;width:97px">EPSG:3857</div>
<div class="sb" style="left:582px;width:1338px">Longitude=10.063477, Latitude=47.364874, tile=8/135/89.png</div>
</body></html>
